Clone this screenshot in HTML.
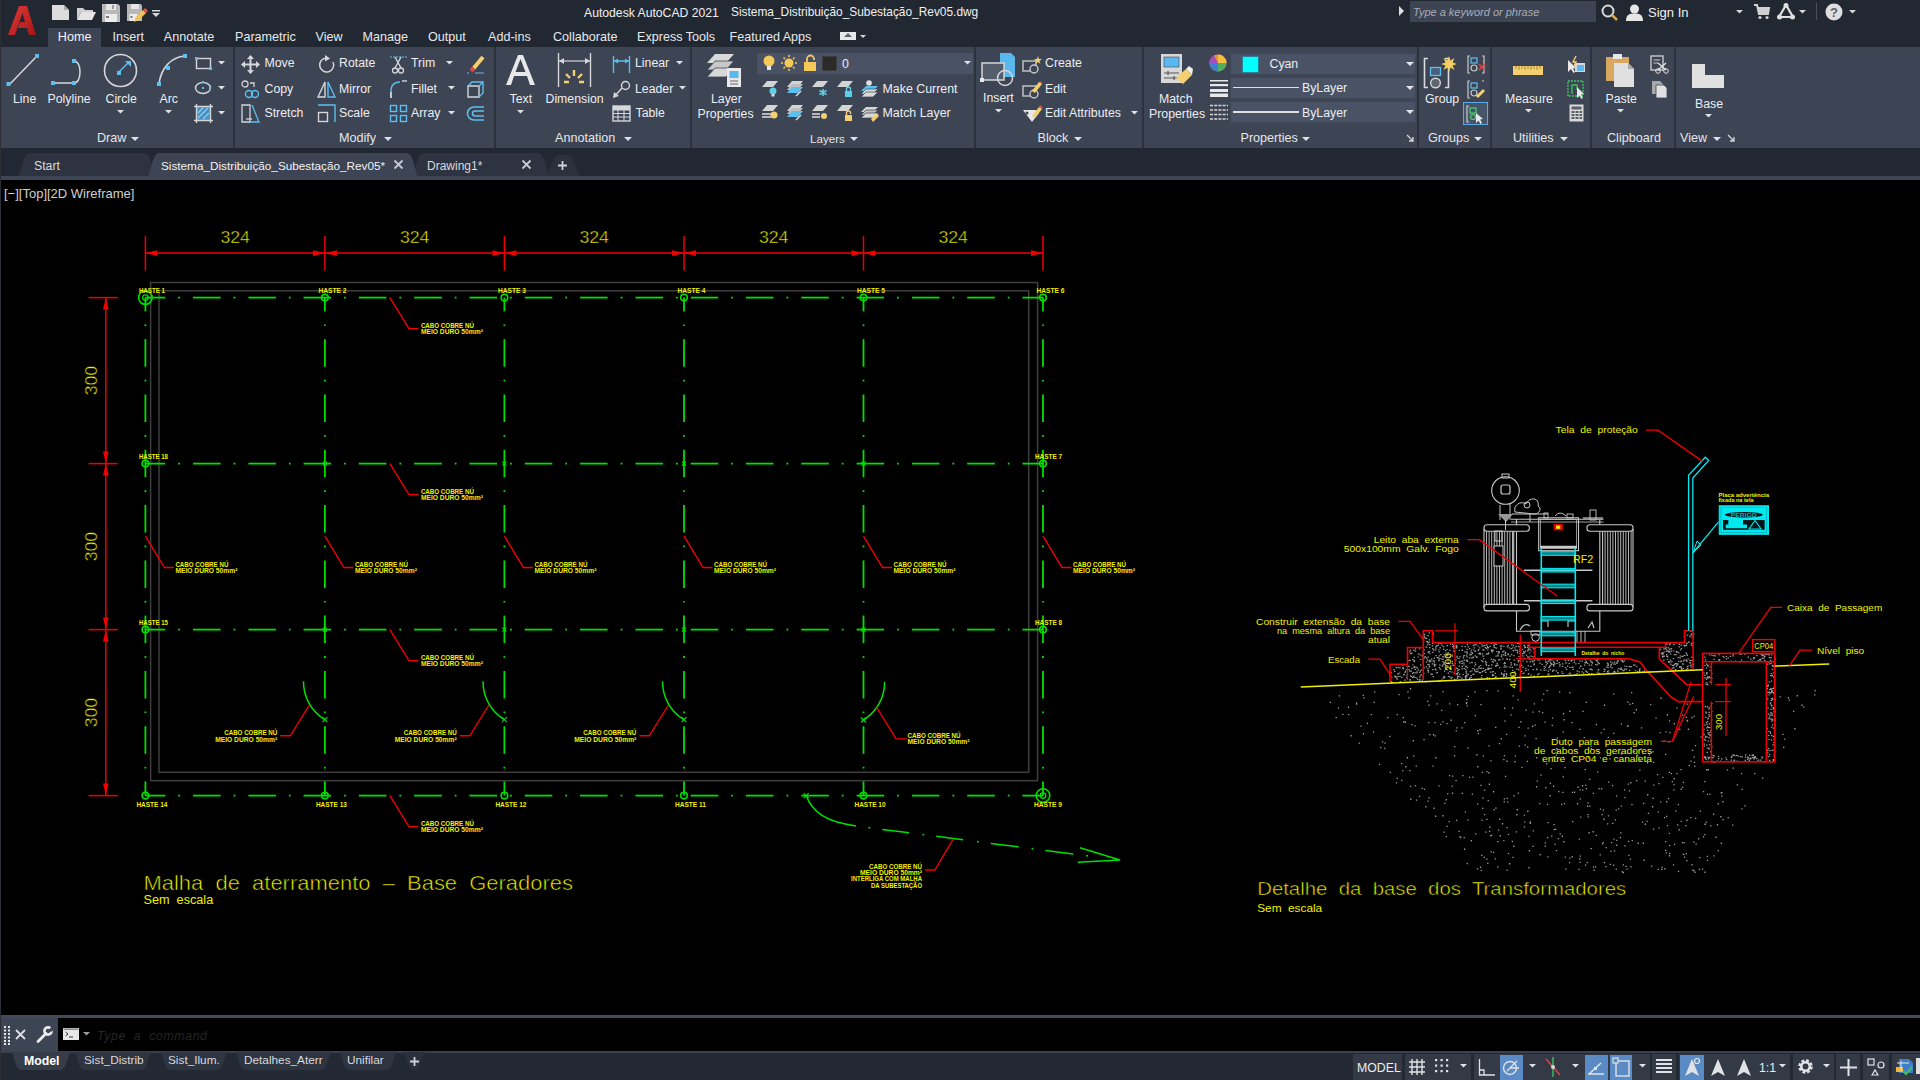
<!DOCTYPE html>
<html><head><meta charset="utf-8">
<style>
*{margin:0;padding:0;box-sizing:border-box}
html,body{width:1920px;height:1080px;overflow:hidden;background:#000;font-family:"Liberation Sans",sans-serif;color:#e8e8e8}
.a{position:absolute}
.t{position:absolute;white-space:nowrap;line-height:1}
svg{overflow:visible}
</style></head><body>
<div class="a" style="left:0;top:0;width:1920px;height:47px;background:#222832"></div>
<svg class="a" style="left:7px;top:5px" width="30" height="32" viewBox="0 0 30 32">
<defs><linearGradient id="lg" x1="0" y1="0" x2="1" y2="1"><stop offset="0" stop-color="#e03a3a"/><stop offset="1" stop-color="#a81414"/></linearGradient></defs>
<path d="M12 1H20L29 30H22L20 23H11L13 17H18L15.5 8L8 30H1Z" fill="url(#lg)"/></svg>
<svg class="a" style="left:50px;top:3px" width="115" height="20" viewBox="0 0 115 20">
<path d="M2 2H14L19 7V17H2Z" fill="#dcdcdc"/><path d="M14 2V7H19" fill="#a8a8a8"/>
<path d="M27 5H33L35 7H43V9H31L27 17Z" fill="#cfcfcf"/><path d="M31 9H46L42 17H27Z" fill="#e4e4e4"/>
<path d="M52 1H68L70 3V19H52Z" fill="#b8b8b8"/><rect x="56" y="1" width="10" height="6" fill="#e6e6e6"/><rect x="62" y="2" width="2" height="4" fill="#9a9a9a"/><rect x="55" y="11" width="12" height="8" fill="#ececec"/><rect x="56" y="13" width="3" height="2" fill="#777"/>
<path d="M77 1H91L92 3V18H77Z" fill="#b8b8b8"/><rect x="81" y="1" width="8" height="5" fill="#e6e6e6"/><rect x="79.5" y="11" width="8" height="7" fill="#ececec"/><rect x="80.5" y="13" width="2" height="2" fill="#777"/><path d="M84 19L86 14L93 7L96 10L89 17Z" fill="#f0c050"/><path d="M93 7L95 5L98 8L96 10Z" fill="#e05050"/>
<path d="M102 7H110V8.5H102Z M102 10H110L106 14Z" fill="#d8d8d8"/></svg>
<div class="t" style="left:584px;top:6.7px;font-size:12.2px;color:#f0f0f0;">Autodesk AutoCAD 2021</div>
<div class="t" style="left:731px;top:6.9px;font-size:11.9px;color:#f0f0f0;">Sistema_Distribuição_Subestação_Rev05.dwg</div>
<svg class="a" style="left:1399px;top:6px" width="6" height="10"><path d="M0 0L5 5L0 10Z" fill="#e0e0e0"/></svg>
<div class="a" style="left:1410px;top:1px;width:186px;height:21px;background:#3d4454"></div>
<div class="t" style="left:1413px;top:6.7px;font-size:11px;color:#a8adb6;font-style:italic">Type a keyword or phrase</div>
<svg class="a" style="left:1600px;top:3px" width="20" height="18"><circle cx="8" cy="8" r="5.5" fill="none" stroke="#d8d8d8" stroke-width="2"/><path d="M12 12L17 17" stroke="#d8a850" stroke-width="2.5"/></svg>
<svg class="a" style="left:1625px;top:3px" width="20" height="18"><circle cx="9.5" cy="6" r="4.5" fill="#e6e6e6"/><path d="M1 18C1 11 5 10.5 9.5 10.5S18 11 18 18Z" fill="#e6e6e6"/></svg>
<div class="t" style="left:1648px;top:6.0px;font-size:13px;color:#f0f0f0;">Sign In</div>
<svg class="a" style="left:1735.5px;top:10px" width="7" height="4.5"><path d="M0 0H7L3.5 3.5Z" fill="#d8d8d8"/></svg>
<svg class="a" style="left:1754px;top:3px" width="16" height="17"><path d="M0 2H3L5 11H14L15 5H4" fill="none" stroke="#d0d0d0" stroke-width="2"/><rect x="5" y="5" width="9" height="5" fill="#d0d0d0"/><circle cx="6" cy="14.5" r="1.6" fill="#d0d0d0"/><circle cx="13" cy="14.5" r="1.6" fill="#d0d0d0"/></svg>
<svg class="a" style="left:1777px;top:2px" width="18" height="18"><path d="M9 3L2 15H16Z" fill="none" stroke="#e0e0e0" stroke-width="2.2"/><circle cx="9" cy="3.5" r="2.5" fill="#e0e0e0"/><circle cx="2.5" cy="15" r="2.5" fill="#e0e0e0"/><circle cx="15.5" cy="15" r="2.5" fill="#e0e0e0"/></svg>
<svg class="a" style="left:1799.0px;top:10px" width="7" height="4.5"><path d="M0 0H7L3.5 3.5Z" fill="#d8d8d8"/></svg>
<div class="a" style="left:1816px;top:3px;width:1px;height:17px;background:#4a505a"></div>
<svg class="a" style="left:1825px;top:3px" width="18" height="18"><circle cx="9" cy="9" r="8.5" fill="#dedede"/><text x="9" y="14" text-anchor="middle" font-family="Liberation Sans" font-weight="bold" font-size="13" fill="#5a5f68">?</text></svg>
<svg class="a" style="left:1849.0px;top:10px" width="7" height="4.5"><path d="M0 0H7L3.5 3.5Z" fill="#d8d8d8"/></svg>
<div class="a" style="left:48px;top:28px;width:53px;height:19px;background:#3d4454"></div>
<div class="t" style="left:57.8px;top:30.5px;font-size:12.6px;color:#f4f4f4;">Home</div>
<div class="t" style="left:112.5px;top:30.5px;font-size:12.6px;color:#e6e8ec;">Insert</div>
<div class="t" style="left:163.75px;top:30.5px;font-size:12.6px;color:#e6e8ec;">Annotate</div>
<div class="t" style="left:235px;top:30.5px;font-size:12.6px;color:#e6e8ec;">Parametric</div>
<div class="t" style="left:315.5px;top:30.5px;font-size:12.6px;color:#e6e8ec;">View</div>
<div class="t" style="left:362.5px;top:30.5px;font-size:12.6px;color:#e6e8ec;">Manage</div>
<div class="t" style="left:428px;top:30.5px;font-size:12.6px;color:#e6e8ec;">Output</div>
<div class="t" style="left:488px;top:30.5px;font-size:12.6px;color:#e6e8ec;">Add-ins</div>
<div class="t" style="left:553px;top:30.5px;font-size:12.6px;color:#e6e8ec;">Collaborate</div>
<div class="t" style="left:637px;top:30.5px;font-size:12.6px;color:#e6e8ec;">Express Tools</div>
<div class="t" style="left:729.5px;top:30.5px;font-size:12.6px;color:#e6e8ec;">Featured Apps</div>
<div class="a" style="left:840px;top:32px;width:16px;height:8px;background:#e8e8e8"></div><svg class="a" style="left:844px;top:33px" width="8" height="5"><path d="M0 4L4 0L8 4Z" fill="#606670"/></svg>
<svg class="a" style="left:860.0px;top:35px" width="6" height="4.0"><path d="M0 0H6L3.0 3.0Z" fill="#d8d8d8"/></svg>
<div class="a" style="left:0;top:47px;width:1920px;height:101px;background:#3d4454"></div>
<div class="a" style="left:233px;top:47px;width:2px;height:101px;background:#2c323d"></div>
<div class="a" style="left:493.5px;top:47px;width:2px;height:101px;background:#2c323d"></div>
<div class="a" style="left:690px;top:47px;width:2px;height:101px;background:#2c323d"></div>
<div class="a" style="left:974px;top:47px;width:2px;height:101px;background:#2c323d"></div>
<div class="a" style="left:1142px;top:47px;width:2px;height:101px;background:#2c323d"></div>
<div class="a" style="left:1417px;top:47px;width:2px;height:101px;background:#2c323d"></div>
<div class="a" style="left:1489.5px;top:47px;width:2px;height:101px;background:#2c323d"></div>
<div class="a" style="left:1590px;top:47px;width:2px;height:101px;background:#2c323d"></div>
<div class="a" style="left:1673.5px;top:47px;width:2px;height:101px;background:#2c323d"></div>
<div class="a" style="left:0;top:148px;width:1920px;height:5px;background:#222833"></div>

<div class="t" style="left:97px;top:131.8px;font-size:12.6px;color:#e4e6ea;">Draw</div>
<svg class="a" style="left:131.0px;top:136.5px" width="8" height="5.0"><path d="M0 0H8L4.0 4.0Z" fill="#dfe1e5"/></svg>
<div class="t" style="left:339px;top:131.8px;font-size:12.6px;color:#e4e6ea;">Modify</div>
<svg class="a" style="left:384.0px;top:136.5px" width="8" height="5.0"><path d="M0 0H8L4.0 4.0Z" fill="#dfe1e5"/></svg>
<div class="t" style="left:555px;top:131.8px;font-size:12.6px;color:#e4e6ea;">Annotation</div>
<svg class="a" style="left:624.0px;top:136.5px" width="8" height="5.0"><path d="M0 0H8L4.0 4.0Z" fill="#dfe1e5"/></svg>
<div class="t" style="left:810px;top:132.7px;font-size:11.6px;color:#e4e6ea;">Layers</div>
<svg class="a" style="left:850.0px;top:136.5px" width="8" height="5.0"><path d="M0 0H8L4.0 4.0Z" fill="#dfe1e5"/></svg>
<div class="t" style="left:1037.5px;top:131.8px;font-size:12.6px;color:#e4e6ea;">Block</div>
<svg class="a" style="left:1074.0px;top:136.5px" width="8" height="5.0"><path d="M0 0H8L4.0 4.0Z" fill="#dfe1e5"/></svg>
<div class="t" style="left:1240.5px;top:131.8px;font-size:12.6px;color:#e4e6ea;">Properties</div>
<svg class="a" style="left:1302.0px;top:136.5px" width="8" height="5.0"><path d="M0 0H8L4.0 4.0Z" fill="#dfe1e5"/></svg>
<div class="t" style="left:1428px;top:131.8px;font-size:12.6px;color:#e4e6ea;">Groups</div>
<svg class="a" style="left:1474.0px;top:136.5px" width="8" height="5.0"><path d="M0 0H8L4.0 4.0Z" fill="#dfe1e5"/></svg>
<div class="t" style="left:1513px;top:131.8px;font-size:12.6px;color:#e4e6ea;">Utilities</div>
<svg class="a" style="left:1560.0px;top:136.5px" width="8" height="5.0"><path d="M0 0H8L4.0 4.0Z" fill="#dfe1e5"/></svg>
<div class="t" style="left:1607px;top:131.8px;font-size:12.6px;color:#e4e6ea;">Clipboard</div>
<div class="t" style="left:1680px;top:131.8px;font-size:12.6px;color:#e4e6ea;">View</div>
<svg class="a" style="left:1713.0px;top:136.5px" width="8" height="5.0"><path d="M0 0H8L4.0 4.0Z" fill="#dfe1e5"/></svg>
<svg class="a" style="left:1406px;top:134px" width="8" height="8" viewBox="0 0 8 8"><path d="M1 1L7 7M7 3V7H3" stroke="#d4d6da" stroke-width="1.3" fill="none"/></svg>
<svg class="a" style="left:1727px;top:134px" width="8" height="8" viewBox="0 0 8 8"><path d="M1 1L7 7M7 3V7H3" stroke="#d4d6da" stroke-width="1.3" fill="none"/></svg>
<svg class="a" style="left:6px;top:53px" width="36" height="35" viewBox="0 0 36 35"><path d="M3 32L31 3" stroke="#d4d6da" stroke-width="1.5"/><rect x="0.5" y="29" width="4" height="4" fill="#5bc0f0"/><rect x="29" y="1" width="4" height="4" fill="#5bc0f0"/></svg>
<div class="t" style="left:13px;top:92.6px;font-size:12.3px;color:#eceef1;">Line</div>
<svg class="a" style="left:50px;top:60px" width="38" height="25" viewBox="0 0 38 25"><path d="M3 23H24M24 1C32 1 32 23 24 23" stroke="#d4d6da" stroke-width="1.5" fill="none"/><rect x="1" y="21" width="4" height="4" fill="#5bc0f0"/><rect x="22" y="21" width="4" height="4" fill="#5bc0f0"/><rect x="22" y="-1" width="4" height="4" fill="#5bc0f0"/></svg>
<div class="t" style="left:47.5px;top:92.6px;font-size:12.3px;color:#eceef1;">Polyline</div>
<svg class="a" style="left:103px;top:53px" width="36" height="35" viewBox="0 0 36 35"><circle cx="17.5" cy="17.5" r="16" stroke="#d4d6da" stroke-width="1.6" fill="none"/><path d="M16 19L26 9" stroke="#5bc0f0" stroke-width="1.5"/><path d="M22 8H28V14Z" fill="#5bc0f0"/><rect x="14" y="18" width="4" height="4" fill="#5bc0f0"/></svg>
<div class="t" style="left:105.5px;top:92.6px;font-size:12.3px;color:#eceef1;">Circle</div>
<svg class="a" style="left:117.0px;top:110px" width="7" height="4.5"><path d="M0 0H7L3.5 3.5Z" fill="#dfe1e5"/></svg>
<svg class="a" style="left:152px;top:53px" width="36" height="35" viewBox="0 0 36 35"><path d="M7 31C9 15 19 4 33 3" stroke="#d4d6da" stroke-width="1.6" fill="none"/><rect x="5" y="29" width="4" height="4" fill="#5bc0f0"/><rect x="14" y="13" width="4" height="4" fill="#5bc0f0"/><rect x="31" y="1" width="4" height="4" fill="#5bc0f0"/></svg>
<div class="t" style="left:159.5px;top:92.6px;font-size:12.3px;color:#eceef1;">Arc</div>
<svg class="a" style="left:164.5px;top:110px" width="7" height="4.5"><path d="M0 0H7L3.5 3.5Z" fill="#dfe1e5"/></svg>
<svg class="a" style="left:194px;top:56px" width="20" height="14" viewBox="0 0 20 14"><rect x="2.5" y="2.5" width="14" height="10" stroke="#d4d6da" stroke-width="1.4" fill="none"/><rect x="1" y="1" width="3" height="3" fill="#5bc0f0"/><rect x="15" y="11" width="3" height="3" fill="#5bc0f0"/></svg>
<svg class="a" style="left:194px;top:81px" width="20" height="14" viewBox="0 0 20 14"><ellipse cx="9" cy="7" rx="7.5" ry="5.5" stroke="#d4d6da" stroke-width="1.4" fill="none"/><rect x="8" y="0" width="2" height="2" fill="#5bc0f0"/><rect x="8" y="6" width="2" height="2" fill="#5bc0f0"/><rect x="15" y="6" width="2" height="2" fill="#5bc0f0"/></svg>
<svg class="a" style="left:194px;top:104px" width="20" height="19" viewBox="0 0 20 19"><rect x="3" y="3" width="13" height="13" fill="#4a8fc0"/><path d="M4 14L14 4M4 9L9 4M9 15L15 9" stroke="#8fd0f5" stroke-width="1.2"/><path d="M0 2.5H19M0 16.5H19M2.5 0V19M16.5 0V19" stroke="#d4d6da" stroke-width="1.4"/></svg>
<svg class="a" style="left:217.5px;top:61px" width="7" height="4.5"><path d="M0 0H7L3.5 3.5Z" fill="#dfe1e5"/></svg>
<svg class="a" style="left:217.5px;top:86px" width="7" height="4.5"><path d="M0 0H7L3.5 3.5Z" fill="#dfe1e5"/></svg>
<svg class="a" style="left:217.5px;top:111px" width="7" height="4.5"><path d="M0 0H7L3.5 3.5Z" fill="#dfe1e5"/></svg>
<svg class="a" style="left:241px;top:55px" width="19" height="19" viewBox="0 0 19 19"><path d="M9.5 1V18M1 9.5H18" stroke="#d4d6da" stroke-width="2"/><path d="M9.5 0L13 4H6ZM9.5 19L13 15H6ZM0 9.5L4 6V13ZM19 9.5L15 6V13Z" fill="#d4d6da"/></svg>
<div class="t" style="left:264.5px;top:57.1px;font-size:12.3px;color:#eceef1;">Move</div>
<svg class="a" style="left:241px;top:80px" width="19" height="19" viewBox="0 0 19 19"><circle cx="4" cy="4" r="3" stroke="#d4d6da" stroke-width="1.3" fill="none"/><path d="M9 3H13V7" stroke="#d4d6da" stroke-width="1.3" fill="none"/><circle cx="8" cy="14" r="3.5" stroke="#5bc0f0" stroke-width="1.4" fill="none"/><circle cx="14" cy="14" r="3.5" stroke="#5bc0f0" stroke-width="1.4" fill="none"/></svg>
<div class="t" style="left:264.5px;top:82.6px;font-size:12.3px;color:#eceef1;">Copy</div>
<svg class="a" style="left:241px;top:104px" width="19" height="19" viewBox="0 0 19 19"><path d="M1 1H9V18H1Z" stroke="#d4d6da" stroke-width="1.3" fill="none"/><path d="M11 1L18 18H9" stroke="#5bc0f0" stroke-width="1.3" fill="none"/><path d="M5 15H11" stroke="#d4d6da" stroke-width="1.3"/></svg>
<div class="t" style="left:264.5px;top:107.1px;font-size:12.3px;color:#eceef1;">Stretch</div>
<svg class="a" style="left:317px;top:55px" width="19" height="19" viewBox="0 0 19 19"><path d="M9.5 3A7 7 0 1 0 16 7" stroke="#d4d6da" stroke-width="1.5" fill="none"/><path d="M8 0L13 3.5L8 6.5Z" fill="#d4d6da"/></svg>
<div class="t" style="left:339px;top:57.1px;font-size:12.3px;color:#eceef1;">Rotate</div>
<svg class="a" style="left:317px;top:80px" width="19" height="19" viewBox="0 0 19 19"><path d="M8 2V17H1Z" stroke="#d4d6da" stroke-width="1.4" fill="none"/><path d="M11 2V17H18Z" stroke="#5bc0f0" stroke-width="1.4" fill="none"/></svg>
<div class="t" style="left:339px;top:82.6px;font-size:12.3px;color:#eceef1;">Mirror</div>
<svg class="a" style="left:317px;top:104px" width="19" height="19" viewBox="0 0 19 19"><path d="M1 1H18V18" stroke="#5bc0f0" stroke-width="1.4" fill="none"/><rect x="1.5" y="8.5" width="9" height="9" stroke="#d4d6da" stroke-width="1.4" fill="none"/></svg>
<div class="t" style="left:339px;top:107.1px;font-size:12.3px;color:#eceef1;">Scale</div>
<svg class="a" style="left:389px;top:55px" width="19" height="19" viewBox="0 0 19 19"><path d="M1 2H18" stroke="#5bc0f0" stroke-width="1" stroke-dasharray="2 1"/><path d="M6 2L12 13M12 2L6 13" stroke="#d4d6da" stroke-width="1.4"/><circle cx="6" cy="15.5" r="2.5" stroke="#d4d6da" stroke-width="1.3" fill="none"/><circle cx="12" cy="15.5" r="2.5" stroke="#d4d6da" stroke-width="1.3" fill="none"/></svg>
<div class="t" style="left:411px;top:57.1px;font-size:12.3px;color:#eceef1;">Trim</div>
<svg class="a" style="left:445.5px;top:61px" width="7" height="4.5"><path d="M0 0H7L3.5 3.5Z" fill="#dfe1e5"/></svg>
<svg class="a" style="left:389px;top:80px" width="19" height="19" viewBox="0 0 19 19"><path d="M2 18V10C2 5 6 2 11 2" stroke="#5bc0f0" stroke-width="1.5" fill="none"/><path d="M13 1H18" stroke="#d4d6da" stroke-width="1.4"/><path d="M2 12V18" stroke="#d4d6da" stroke-width="1.6"/></svg>
<div class="t" style="left:411px;top:82.6px;font-size:12.3px;color:#eceef1;">Fillet</div>
<svg class="a" style="left:447.5px;top:86px" width="7" height="4.5"><path d="M0 0H7L3.5 3.5Z" fill="#dfe1e5"/></svg>
<svg class="a" style="left:389px;top:104px" width="19" height="19" viewBox="0 0 19 19"><rect x="1.5" y="1.5" width="6" height="6" stroke="#5bc0f0" stroke-width="1.4" fill="none"/><rect x="11.5" y="1.5" width="6" height="6" stroke="#5bc0f0" stroke-width="1.4" fill="none"/><rect x="1.5" y="11.5" width="6" height="6" stroke="#5bc0f0" stroke-width="1.4" fill="none"/><rect x="11.5" y="11.5" width="6" height="6" stroke="#5bc0f0" stroke-width="1.4" fill="none"/></svg>
<div class="t" style="left:411px;top:107.1px;font-size:12.3px;color:#eceef1;">Array</div>
<svg class="a" style="left:447.5px;top:111px" width="7" height="4.5"><path d="M0 0H7L3.5 3.5Z" fill="#dfe1e5"/></svg>
<svg class="a" style="left:466px;top:55px" width="19" height="19" viewBox="0 0 19 19"><path d="M7 14L17 2" stroke="#f5d070" stroke-width="4"/><path d="M5 16L8 13" stroke="#e04848" stroke-width="4"/><path d="M1 18H3M9 18H18" stroke="#5bc0f0" stroke-width="1.2"/></svg>
<svg class="a" style="left:466px;top:80px" width="19" height="19" viewBox="0 0 19 19"><path d="M2 6H13V17H2Z" stroke="#d4d6da" stroke-width="1.4" fill="none"/><path d="M2 6L6 2H17V13L13 17M13 6L17 2" stroke="#5bc0f0" stroke-width="1.4" fill="none"/></svg>
<svg class="a" style="left:466px;top:104px" width="19" height="19" viewBox="0 0 19 19"><path d="M18 3H8A6.5 6.5 0 0 0 8 16H18M18 7H9A2.5 2.5 0 0 0 9 12H18" stroke="#5bc0f0" stroke-width="1.5" fill="none"/></svg>
<svg class="a" style="left:505px;top:54px" width="31" height="32" viewBox="0 0 31 32"><path d="M1 31L13 1H18L30 31H25L22 22H9L6 31ZM10.5 18H20.5L15.5 5Z" fill="#e8e8e8"/></svg>
<div class="t" style="left:509.5px;top:92.6px;font-size:12.3px;color:#eceef1;">Text</div>
<svg class="a" style="left:516.5px;top:110px" width="7" height="4.5"><path d="M0 0H7L3.5 3.5Z" fill="#dfe1e5"/></svg>
<svg class="a" style="left:557px;top:53px" width="35" height="35" viewBox="0 0 35 35"><path d="M1.5 0V34M33.5 0V34" stroke="#d4d6da" stroke-width="1.4"/><path d="M2 8H33" stroke="#d4d6da" stroke-width="1.2"/><path d="M2 8L7 5V11ZM33 8L28 5V11Z" fill="#d4d6da"/><path d="M17 17V23M9 21L13 25M25 21L21 25M7 29H12M22 29H27" stroke="#f5d070" stroke-width="2.4"/></svg>
<div class="t" style="left:545.5px;top:92.6px;font-size:12.3px;color:#eceef1;">Dimension</div>
<svg class="a" style="left:612px;top:55px" width="19" height="19" viewBox="0 0 19 19"><path d="M1.5 1V18M17.5 1V18M2 6H17" stroke="#5bc0f0" stroke-width="1.4"/><path d="M2 6L6 3.5V8.5ZM17 6L13 3.5V8.5Z" fill="#5bc0f0"/></svg>
<div class="t" style="left:635px;top:57.1px;font-size:12.3px;color:#eceef1;">Linear</div>
<svg class="a" style="left:675.5px;top:61px" width="7" height="4.5"><path d="M0 0H7L3.5 3.5Z" fill="#dfe1e5"/></svg>
<svg class="a" style="left:612px;top:80px" width="19" height="19" viewBox="0 0 19 19"><circle cx="13.5" cy="5.5" r="4" stroke="#d4d6da" stroke-width="1.4" fill="none"/><path d="M10 8L2 17" stroke="#d4d6da" stroke-width="1.4"/><path d="M1 18L2 12L7 16Z" fill="#d4d6da"/></svg>
<div class="t" style="left:635px;top:82.6px;font-size:12.3px;color:#eceef1;">Leader</div>
<svg class="a" style="left:678.5px;top:86px" width="7" height="4.5"><path d="M0 0H7L3.5 3.5Z" fill="#dfe1e5"/></svg>
<svg class="a" style="left:612px;top:105px" width="19" height="17" viewBox="0 0 19 17"><rect x="1" y="1" width="17" height="15" stroke="#d4d6da" stroke-width="1.4" fill="none"/><path d="M1 5H18M1 8.5H18M1 12H18M6 5V16M12 5V16" stroke="#d4d6da" stroke-width="1.1"/><rect x="1" y="1" width="17" height="4" fill="#d4d6da"/></svg>
<div class="t" style="left:635.5px;top:107.1px;font-size:12.3px;color:#eceef1;">Table</div>
<svg class="a" style="left:706px;top:53px" width="36" height="35" viewBox="0 0 36 35"><path d="M1 10L9 1H28L20 10Z" fill="#dadada"/><path d="M1 17L9 8H28L20 17Z" fill="#c8c8c8" stroke="#3d4454" stroke-width="0.8"/><path d="M1 24L9 15H28L20 24Z" fill="#d8d8d8" stroke="#3d4454" stroke-width="0.8"/><rect x="21" y="15" width="14" height="19" fill="#e8e8e8"/><rect x="23.5" y="18" width="9" height="7" fill="#5bb8ef"/><path d="M24 28H32M24 31H32" stroke="#666" stroke-width="1"/></svg>
<div class="t" style="left:711px;top:92.6px;font-size:12.3px;color:#eceef1;">Layer</div>
<div class="t" style="left:697.5px;top:108.3px;font-size:12.3px;color:#eceef1;">Properties</div>
<div class="a" style="left:757px;top:53px;width:216px;height:21px;background:#4a5365"></div>
<svg class="a" style="left:963.5px;top:61px" width="7" height="4.5"><path d="M0 0H7L3.5 3.5Z" fill="#dfe1e5"/></svg>
<svg class="a" style="left:761px;top:54px" width="80" height="18" viewBox="0 0 80 18"><circle cx="8" cy="7" r="5.5" fill="#f5c85a"/><rect x="6" y="12" width="4" height="4" fill="#e8e8e8"/><circle cx="28" cy="9" r="4.5" fill="#f5c85a"/><path d="M28 1V3M28 15V17M20 9H22M34 9H36M22.5 3.5L24 5M32 13L33.5 14.5M22.5 14.5L24 13M32 5L33.5 3.5" stroke="#f5c85a" stroke-width="1.5"/><rect x="43" y="8" width="12" height="9" fill="#f5c85a"/><path d="M46 8V5A3.5 3.5 0 0 1 53 5V6" stroke="#f5c85a" stroke-width="1.8" fill="none"/><rect x="61" y="2" width="15" height="15" fill="#2a2a2a" stroke="#555" stroke-width="0.8"/></svg>
<div class="t" style="left:842px;top:57.6px;font-size:12.3px;color:#eceef1;">0</div>
<svg class="a" style="left:761px;top:80px" width="18" height="17" viewBox="0 0 18 17"><path d="M1 7L6 1H17L12 7Z" fill="#d4d4d4"/><circle cx="12" cy="11" r="3.5" fill="#5bd0e8"/><rect x="10.5" y="14" width="3" height="2.5" fill="#ddd"/></svg>
<svg class="a" style="left:761px;top:104px" width="18" height="17" viewBox="0 0 18 17"><path d="M1 7L6 1H17L12 7Z" fill="#d4d4d4"/><path d="M1 10H10M1 13H10" stroke="#ddd" stroke-width="1.5"/><circle cx="13" cy="11" r="3.5" fill="#f5d070"/></svg>
<svg class="a" style="left:786px;top:80px" width="18" height="17" viewBox="0 0 18 17"><path d="M1 7L6 1H17L12 7Z" fill="#d4d4d4"/><path d="M1 10L6 4H17L12 10Z" fill="#bfbfbf"/><path d="M1 13L6 7H17L12 13Z" fill="#5bc0f0"/><path d="M10 16L15 11" stroke="#ddd" stroke-width="1.4"/></svg>
<svg class="a" style="left:786px;top:104px" width="18" height="17" viewBox="0 0 18 17"><path d="M1 7L6 1H17L12 7Z" fill="#d4d4d4"/><path d="M1 10L6 4H17L12 10Z" fill="#bfbfbf"/><path d="M1 13L6 7H17L12 13Z" fill="#5bc0f0"/><path d="M10 16L15 11" stroke="#ddd" stroke-width="1.4"/></svg>
<svg class="a" style="left:811px;top:80px" width="18" height="17" viewBox="0 0 18 17"><path d="M1 7L6 1H17L12 7Z" fill="#d4d4d4"/><path d="M12 9V16M8.5 10.5L15.5 14.5M8.5 14.5L15.5 10.5" stroke="#5bd0e8" stroke-width="1.6"/></svg>
<svg class="a" style="left:811px;top:104px" width="18" height="17" viewBox="0 0 18 17"><path d="M1 7L6 1H17L12 7Z" fill="#d4d4d4"/><path d="M1 10H9M1 13H9" stroke="#ddd" stroke-width="1.5"/><circle cx="13" cy="12" r="3" fill="#f5d070"/></svg>
<svg class="a" style="left:836px;top:80px" width="18" height="17" viewBox="0 0 18 17"><path d="M1 7L6 1H17L12 7Z" fill="#d4d4d4"/><rect x="9" y="11" width="7" height="6" fill="#5bd0e8"/><path d="M10.5 11V9A2 2 0 0 1 14.5 9V11" stroke="#5bd0e8" stroke-width="1.4" fill="none"/></svg>
<svg class="a" style="left:836px;top:104px" width="18" height="17" viewBox="0 0 18 17"><path d="M1 7L6 1H17L12 7Z" fill="#d4d4d4"/><rect x="9" y="11" width="7" height="6" fill="#f5d070"/><path d="M10.5 11V9A2 2 0 0 1 14.5 9V10" stroke="#f5d070" stroke-width="1.4" fill="none"/></svg>
<svg class="a" style="left:860px;top:80px" width="19" height="19" viewBox="0 0 19 19"><circle cx="9" cy="3" r="2.8" fill="#e0e0e0"/><path d="M1 11L6 6H18L13 11Z" fill="#5bc0f0"/><path d="M1 14L6 9H18L13 14Z" fill="#d8d8d8" stroke="#3d4454" stroke-width="0.7"/><path d="M1 17L6 12H18L13 17Z" fill="#d8d8d8" stroke="#3d4454" stroke-width="0.7"/></svg>
<div class="t" style="left:882.5px;top:82.5px;font-size:12.4px;color:#eceef1;">Make Current</div>
<svg class="a" style="left:860px;top:104px" width="19" height="19" viewBox="0 0 19 19"><path d="M1 8L6 3H18L13 8Z" fill="#d8d8d8"/><path d="M1 11L6 6H18L13 11Z" fill="#c0c0c0" stroke="#3d4454" stroke-width="0.7"/><path d="M1 14L6 9H18L13 14Z" fill="#d8d8d8" stroke="#3d4454" stroke-width="0.7"/><path d="M11 15L17 9L19 12L13 18Z" fill="#f5d070"/></svg>
<div class="t" style="left:882.5px;top:107.0px;font-size:12.4px;color:#eceef1;">Match Layer</div>
<svg class="a" style="left:980px;top:52px" width="36" height="35" viewBox="0 0 36 35"><path d="M20 1H31L35 5V25H20Z" fill="#5bb8ef"/><rect x="2" y="11" width="22" height="17" fill="#565d6a" stroke="#d4d6da" stroke-width="1.5"/><circle cx="25" cy="26" r="7.5" fill="none" stroke="#d4d6da" stroke-width="1.5"/><rect x="0" y="26" width="4" height="4" fill="#e8e8e8"/></svg>
<div class="t" style="left:983px;top:91.6px;font-size:12.3px;color:#eceef1;">Insert</div>
<svg class="a" style="left:994.5px;top:109px" width="7" height="4.5"><path d="M0 0H7L3.5 3.5Z" fill="#dfe1e5"/></svg>
<svg class="a" style="left:1022px;top:55px" width="20" height="19" viewBox="0 0 20 19"><rect x="1" y="6" width="13" height="10" stroke="#c8c8c8" stroke-width="1.4" fill="none"/><circle cx="12" cy="14" r="4" stroke="#c8c8c8" stroke-width="1.4" fill="#3d4454"/><path d="M16 1L17 4L20 4L17.5 6L18.5 9L16 7L13.5 9L14.5 6L12 4L15 4Z" fill="#f5d070"/></svg>
<div class="t" style="left:1045px;top:57.1px;font-size:12.3px;color:#eceef1;">Create</div>
<svg class="a" style="left:1022px;top:80px" width="20" height="19" viewBox="0 0 20 19"><rect x="1" y="6" width="13" height="10" stroke="#c8c8c8" stroke-width="1.4" fill="none"/><circle cx="12" cy="14" r="4" stroke="#c8c8c8" stroke-width="1.4" fill="#3d4454"/><path d="M10 11L17 2L20 4L13 13Z" fill="#f5d070"/><path d="M17 2L18 1L20.5 3L20 4Z" fill="#e05050"/></svg>
<div class="t" style="left:1045px;top:82.6px;font-size:12.3px;color:#eceef1;">Edit</div>
<svg class="a" style="left:1022px;top:104px" width="20" height="19" viewBox="0 0 20 19"><path d="M1 6H14L17 9L10 18Z" fill="#e8e8e8"/><circle cx="5" cy="9" r="1.5" fill="#3d4454"/><path d="M10 12L17 3L20 5L13 14Z" fill="#f5d070"/><path d="M17 3L18 1L20.5 3L20 5Z" fill="#e05050"/></svg>
<div class="t" style="left:1045px;top:107.1px;font-size:12.3px;color:#eceef1;">Edit Attributes</div>
<svg class="a" style="left:1130.5px;top:111px" width="7" height="4.5"><path d="M0 0H7L3.5 3.5Z" fill="#dfe1e5"/></svg>
<svg class="a" style="left:1160px;top:53px" width="34" height="35" viewBox="0 0 34 35"><rect x="1" y="1" width="21" height="29" fill="#d8d8d8"/><rect x="4" y="4" width="15" height="10" fill="#5bb8ef" stroke="#3d4454" stroke-width="0.6"/><path d="M4 20H19M4 25H19M8 18V22M14 23V27" stroke="#555" stroke-width="1.2"/><path d="M16 25L26 16L32 22L23 31Z" fill="#f5d070"/><path d="M26 16L29 13L33 16L32 22Z" fill="#f0f0f0"/></svg>
<div class="t" style="left:1159px;top:92.6px;font-size:12.3px;color:#eceef1;">Match</div>
<div class="t" style="left:1149px;top:107.6px;font-size:12.3px;color:#eceef1;">Properties</div>
<svg class="a" style="left:1209px;top:54px" width="19" height="18" viewBox="0 0 19 18"><circle cx="9" cy="9" r="8.5" fill="#e84"/><path d="M9 9L9 0.5A8.5 8.5 0 0 1 17.5 9Z" fill="#f5c040"/><path d="M9 9L17.5 9A8.5 8.5 0 0 1 9 17.5Z" fill="#50b060"/><path d="M9 9L9 17.5A8.5 8.5 0 0 1 0.5 9Z" fill="#4080d0"/><path d="M9 9L0.5 9A8.5 8.5 0 0 1 5 1.5Z" fill="#a050c0"/></svg>
<svg class="a" style="left:1210px;top:79px" width="18" height="18" viewBox="0 0 18 18"><rect x="0" y="1" width="18" height="1.5" fill="#e8e8e8"/><rect x="0" y="5" width="18" height="2.2" fill="#e8e8e8"/><rect x="0" y="10" width="18" height="3" fill="#e8e8e8"/><rect x="0" y="14.5" width="18" height="3.5" fill="#e8e8e8"/></svg>
<svg class="a" style="left:1210px;top:104px" width="18" height="16" viewBox="0 0 18 16"><path d="M0 1.5H18M0 6H18M0 10.5H18M0 15H18" stroke="#d8d8d8" stroke-width="1.4" stroke-dasharray="3 1.2"/></svg>
<div class="a" style="left:1229.5px;top:52.5px;width:186px;height:22px;background:#4a5365;border:1px solid #3f4757"></div>
<svg class="a" style="left:1406.0px;top:61.5px" width="8" height="5.0"><path d="M0 0H8L4.0 4.0Z" fill="#e4e6ea"/></svg>
<div class="a" style="left:1229.5px;top:77px;width:186px;height:22px;background:#4a5365;border:1px solid #3f4757"></div>
<svg class="a" style="left:1406.0px;top:86px" width="8" height="5.0"><path d="M0 0H8L4.0 4.0Z" fill="#e4e6ea"/></svg>
<div class="a" style="left:1229.5px;top:101px;width:186px;height:22px;background:#4a5365;border:1px solid #3f4757"></div>
<svg class="a" style="left:1406.0px;top:110px" width="8" height="5.0"><path d="M0 0H8L4.0 4.0Z" fill="#e4e6ea"/></svg>
<div class="a" style="left:1242px;top:55.5px;width:17px;height:17px;background:#00ffff;border:1px solid #2e8090"></div>
<div class="t" style="left:1269.5px;top:57.6px;font-size:12.3px;color:#eceef1;">Cyan</div>
<div class="a" style="left:1233px;top:86.5px;width:66px;height:1.5px;background:#e0e0e0"></div>
<div class="t" style="left:1302px;top:82.1px;font-size:12.3px;color:#eceef1;">ByLayer</div>
<div class="a" style="left:1233px;top:111px;width:66px;height:1.5px;background:#e0e0e0"></div>
<div class="t" style="left:1302px;top:106.6px;font-size:12.3px;color:#eceef1;">ByLayer</div>
<svg class="a" style="left:1421px;top:55px" width="36" height="35" viewBox="0 0 36 35"><path d="M7 3.5H3.5V32.5H7M24 3.5H27.5V32.5H24" stroke="#d8dade" stroke-width="1.6" fill="none"/><rect x="9.5" y="12.5" width="10" height="8" fill="#4a5f7c" stroke="#5bc0f0" stroke-width="1.3"/><circle cx="14.5" cy="28" r="4.8" fill="#60656e" stroke="#d4d6da" stroke-width="1.4"/><path d="M28 1L29.5 5.5L33.5 3L31.5 7.5L36 9L31.5 10.5L33.5 15L29.5 12.5L28 17L26.5 12.5L22.5 15L24.5 10.5L20 9L24.5 7.5L22.5 3L26.5 5.5Z" fill="#f5d060"/></svg>
<div class="t" style="left:1425px;top:92.6px;font-size:12.3px;color:#eceef1;">Group</div>
<svg class="a" style="left:1467px;top:55px" width="19" height="19" viewBox="0 0 19 19"><path d="M3 1H1V18H3M15 1H17V18H15" stroke="#c8c8c8" stroke-width="1.2" fill="none"/><rect x="4" y="3" width="6" height="5" stroke="#5bc0f0" stroke-width="1.2" fill="none"/><circle cx="7" cy="13" r="3" stroke="#c8c8c8" stroke-width="1.2" fill="none"/><path d="M12 9L18 15M18 9L12 15" stroke="#e84040" stroke-width="1.6"/></svg>
<svg class="a" style="left:1467px;top:80px" width="19" height="19" viewBox="0 0 19 19"><path d="M3 1H1V18H3M15 1H17" stroke="#c8c8c8" stroke-width="1.2" fill="none"/><rect x="4" y="3" width="6" height="5" stroke="#5bc0f0" stroke-width="1.2" fill="none"/><circle cx="7" cy="13" r="3" stroke="#c8c8c8" stroke-width="1.2" fill="none"/><path d="M10 17L17 10" stroke="#f5d070" stroke-width="3"/></svg>
<div class="a" style="left:1463px;top:102px;width:25px;height:23px;border:1px solid #5aa8e8;background:#46566a"></div>
<svg class="a" style="left:1466px;top:105px" width="19" height="19" viewBox="0 0 19 19"><path d="M3 1H1V17H3" stroke="#c8c8c8" stroke-width="1.2" fill="none"/><rect x="4" y="3" width="6" height="5" stroke="#50d070" stroke-width="1.2" fill="none"/><circle cx="7" cy="12" r="2.5" stroke="#50d070" stroke-width="1.2" fill="none"/><path d="M10 8L10 18L12.5 15.5L14.5 19L16 18L14 14.5L17 14Z" fill="#e8e8e8"/></svg>
<svg class="a" style="left:1513px;top:66px" width="30" height="9" viewBox="0 0 30 9"><rect x="0" y="0" width="30" height="9" fill="#f5d070"/><path d="M3 0V3M6 0V4M9 0V3M12 0V4M15 0V3M18 0V4M21 0V3M24 0V4M27 0V3" stroke="#a07820" stroke-width="0.8"/></svg>
<div class="t" style="left:1505px;top:92.6px;font-size:12.3px;color:#eceef1;">Measure</div>
<svg class="a" style="left:1524.5px;top:109px" width="7" height="4.5"><path d="M0 0H7L3.5 3.5Z" fill="#dfe1e5"/></svg>
<svg class="a" style="left:1567px;top:55px" width="19" height="19" viewBox="0 0 19 19"><path d="M1 5L1 17L4 14L6.5 18L8 17L6 13.5L9 13Z" fill="#e8e8e8"/><path d="M9 1L6 7H9L7 11" stroke="#f5d070" stroke-width="1.4" fill="none"/><rect x="8" y="8" width="10" height="9" fill="#d8d8d8"/><rect x="10" y="10" width="7" height="6" fill="#5bb8ef"/></svg>
<svg class="a" style="left:1567px;top:80px" width="19" height="19" viewBox="0 0 19 19"><rect x="1" y="1" width="15" height="15" stroke="#40c060" stroke-width="1.4" stroke-dasharray="2 1" fill="none"/><path d="M5 14V5H10V10" stroke="#40c060" stroke-width="1.4" fill="none"/><path d="M10 7V18L12.5 15.5L14.5 19L16 18L14 14.5L17 14Z" fill="#e8e8e8"/></svg>
<svg class="a" style="left:1569px;top:104px" width="15" height="18" viewBox="0 0 15 18"><rect x="0.5" y="0.5" width="14" height="17" fill="#d8d8d8"/><rect x="2.5" y="2.5" width="10" height="3" fill="#5a606a"/><path d="M2.5 8H5.5M6.5 8H9.5M10.5 8H13M2.5 11H5.5M6.5 11H9.5M10.5 11H13M2.5 14H5.5M6.5 14H9.5M10.5 14H13" stroke="#5a606a" stroke-width="2"/></svg>
<svg class="a" style="left:1605px;top:53px" width="30" height="35" viewBox="0 0 30 35"><path d="M1 4H24V28H1Z" fill="#d8a860"/><rect x="8" y="1" width="9" height="5" fill="#e8e8e8"/><path d="M9 10H23L29 16V34H9Z" fill="#e0e0e0"/><path d="M23 10V16H29" fill="#a8a8a8"/></svg>
<div class="t" style="left:1605.5px;top:92.6px;font-size:12.3px;color:#eceef1;">Paste</div>
<svg class="a" style="left:1617.0px;top:109px" width="7" height="4.5"><path d="M0 0H7L3.5 3.5Z" fill="#dfe1e5"/></svg>
<svg class="a" style="left:1650px;top:55px" width="19" height="19" viewBox="0 0 19 19"><rect x="1" y="1" width="12" height="14" fill="none" stroke="#c8c8c8" stroke-width="1.4"/><path d="M3.5 5H10M3.5 8H8" stroke="#c8c8c8"/><path d="M8 8L16 15M16 8L8 15" stroke="#e0e0e0" stroke-width="1.4"/><circle cx="8" cy="16" r="2.3" stroke="#e0e0e0" fill="none"/><circle cx="16" cy="16" r="2.3" stroke="#e0e0e0" fill="none"/></svg>
<svg class="a" style="left:1651px;top:80px" width="17" height="19" viewBox="0 0 17 19"><path d="M1 1H9L12 4V14H1Z" fill="#a8a8a8"/><path d="M5 5H13L16 8V18H5Z" fill="#e0e0e0" stroke="#3d4454" stroke-width="0.8"/></svg>
<svg class="a" style="left:1691px;top:63px" width="34" height="26" viewBox="0 0 34 26"><path d="M1 1H14V12H33V25H1Z" fill="#e0e0e0"/></svg>
<div class="t" style="left:1695px;top:97.6px;font-size:12.3px;color:#eceef1;">Base</div>
<svg class="a" style="left:1704.5px;top:114px" width="7" height="4.5"><path d="M0 0H7L3.5 3.5Z" fill="#dfe1e5"/></svg>

<div class="a" style="left:0;top:153px;width:1920px;height:27px;background:#222833"></div>
<div class="a" style="left:0;top:176px;width:1920px;height:4px;background:#3d4454"></div>
<svg class="a" style="left:16px;top:153px" width="142" height="23" viewBox="0 0 142 23"><path d="M0 23C6 23 6 0 14 0H128C136 0 136 23 142 23Z" fill="#2d3340"/></svg>
<svg class="a" style="left:410px;top:153px" width="142" height="23" viewBox="0 0 142 23"><path d="M0 23C6 23 6 0 14 0H128C136 0 136 23 142 23Z" fill="#2d3340"/></svg>
<svg class="a" style="left:545px;top:155px" width="37" height="21" viewBox="0 0 37 21"><path d="M0 21C6 21 6 0 14 0H23C31 0 31 21 37 21Z" fill="#2a303c"/></svg>
<svg class="a" style="left:145px;top:153px" width="276" height="27" viewBox="0 0 276 27"><path d="M0 27C6 27 6 0 14 0H262C270 0 270 27 276 27Z" fill="#3d4454"/></svg>
<div class="t" style="left:34px;top:159.6px;font-size:12.3px;color:#d8dadf;">Start</div>
<div class="t" style="left:161px;top:160.1px;font-size:11.75px;color:#f2f2f2;">Sistema_Distribuição_Subestação_Rev05*</div>
<svg class="a" style="left:393px;top:159px" width="11" height="11" viewBox="0 0 11 11"><path d="M1.5 1.5L9.5 9.5M9.5 1.5L1.5 9.5" stroke="#c8cacf" stroke-width="1.8"/></svg>
<div class="t" style="left:427px;top:159.8px;font-size:12.0px;color:#d8dadf;">Drawing1*</div>
<svg class="a" style="left:521px;top:159px" width="11" height="11" viewBox="0 0 11 11"><path d="M1.5 1.5L9.5 9.5M9.5 1.5L1.5 9.5" stroke="#c8cacf" stroke-width="1.8"/></svg>
<svg class="a" style="left:557px;top:160px" width="11" height="11" viewBox="0 0 11 11"><path d="M5.5 1V10M1 5.5H10" stroke="#d0d2d6" stroke-width="1.8"/></svg>
<div class="t" style="left:4px;top:187.2px;font-size:13px;color:#d0d0d0;">[−][Top][2D Wireframe]</div>
<div class="a" style="left:0;top:1015px;width:1920px;height:3px;background:#434b59"></div>
<div class="a" style="left:0;top:1018px;width:58px;height:33px;background:#3d4454"></div>
<div class="a" style="left:58px;top:1018px;width:1862px;height:33px;background:#000"></div>
<svg class="a" style="left:3px;top:1025px" width="8" height="20" viewBox="0 0 8 20"><rect x="1" y="1" width="2" height="2" fill="#e8e8e8"/><rect x="1" y="4.5" width="2" height="2" fill="#e8e8e8"/><rect x="1" y="8" width="2" height="2" fill="#e8e8e8"/><rect x="1" y="11.5" width="2" height="2" fill="#e8e8e8"/><rect x="1" y="15" width="2" height="2" fill="#e8e8e8"/><rect x="1" y="18" width="2" height="2" fill="#e8e8e8"/><rect x="5" y="1" width="2" height="2" fill="#e8e8e8"/><rect x="5" y="4.5" width="2" height="2" fill="#e8e8e8"/><rect x="5" y="8" width="2" height="2" fill="#e8e8e8"/><rect x="5" y="11.5" width="2" height="2" fill="#e8e8e8"/><rect x="5" y="15" width="2" height="2" fill="#e8e8e8"/><rect x="5" y="18" width="2" height="2" fill="#e8e8e8"/></svg>
<svg class="a" style="left:15px;top:1029px" width="11" height="11" viewBox="0 0 11 11"><path d="M1 1L10 10M10 1L1 10" stroke="#e0e0e0" stroke-width="1.8"/></svg>
<svg class="a" style="left:35px;top:1025px" width="19" height="19" viewBox="0 0 19 19"><path d="M3 16.5L11 8.5" stroke="#ececec" stroke-width="2.8" stroke-linecap="round"/><circle cx="13" cy="6" r="3.6" fill="none" stroke="#ececec" stroke-width="2.6"/><path d="M13.5 5.5L17 1L20 4L16 7Z" fill="#3d4454"/></svg>
<svg class="a" style="left:63px;top:1028px" width="16" height="12" viewBox="0 0 16 12"><rect x="0" y="0" width="16" height="12" fill="#e8e8e8"/><rect x="0.5" y="0.5" width="15" height="1.5" fill="#888"/><path d="M2.5 4L5 6L2.5 8M6 9H10" stroke="#333" stroke-width="1" fill="none"/></svg>
<svg class="a" style="left:82.5px;top:1032px" width="7" height="4.5"><path d="M0 0H7L3.5 3.5Z" fill="#9a9a9a"/></svg>
<div class="t" style="left:97px;top:1029.6px;font-size:12.3px;color:#262626;font-style:italic;letter-spacing:0.6px">Type&nbsp; a&nbsp; command</div>
<div class="a" style="left:0;top:1051px;width:1920px;height:29px;background:#232933"></div>
<div class="a" style="left:0;top:1051px;width:1920px;height:2px;background:#3a414d"></div>
<svg class="a" style="left:73px;top:1052px" width="80" height="19" viewBox="0 0 80 19"><path d="M0 0H80C75 0 76 18 68 18H12C4 18 5 0 0 0Z" fill="#2e3440"/></svg>
<svg class="a" style="left:159px;top:1052px" width="70" height="19" viewBox="0 0 70 19"><path d="M0 0H70C65 0 66 18 58 18H12C4 18 5 0 0 0Z" fill="#2e3440"/></svg>
<svg class="a" style="left:234px;top:1052px" width="99" height="19" viewBox="0 0 99 19"><path d="M0 0H99C94 0 95 18 87 18H12C4 18 5 0 0 0Z" fill="#2e3440"/></svg>
<svg class="a" style="left:338px;top:1052px" width="60" height="19" viewBox="0 0 60 19"><path d="M0 0H60C55 0 56 18 48 18H12C4 18 5 0 0 0Z" fill="#2e3440"/></svg>
<svg class="a" style="left:402px;top:1052px" width="24" height="19" viewBox="0 0 24 19"><path d="M0 0H24C19 0 20 18 12 18H12C4 18 5 0 0 0Z" fill="#2b313c"/></svg>
<svg class="a" style="left:10px;top:1052px" width="62" height="19" viewBox="0 0 62 19"><path d="M0 0H62C57 0 58 18 50 18H12C4 18 5 0 0 0Z" fill="#363c49"/></svg>
<div class="t" style="left:24px;top:1054.6px;font-size:12.3px;color:#ffffff;font-weight:bold">Model</div>
<div class="t" style="left:84px;top:1055.0px;font-size:11.8px;color:#d8dadf;">Sist_Distrib</div>
<div class="t" style="left:168px;top:1055.0px;font-size:11.8px;color:#d8dadf;">Sist_Ilum.</div>
<div class="t" style="left:244px;top:1055.0px;font-size:11.8px;color:#d8dadf;">Detalhes_Aterr</div>
<div class="t" style="left:347px;top:1055.0px;font-size:11.8px;color:#d8dadf;">Unifilar</div>
<svg class="a" style="left:409px;top:1056px" width="11" height="11" viewBox="0 0 11 11"><path d="M5.5 1V10M1 5.5H10" stroke="#d0d2d6" stroke-width="1.8"/></svg>
<div class="a" style="left:1352.5px;top:1054px;width:49.5px;height:26px;background:#333a46"></div>
<div class="a" style="left:1405px;top:1054px;width:66px;height:26px;background:#333a46"></div>
<div class="a" style="left:1474px;top:1054px;width:176px;height:26px;background:#333a46"></div>
<div class="a" style="left:1652px;top:1054px;width:24px;height:26px;background:#333a46"></div>
<div class="a" style="left:1679px;top:1054px;width:111px;height:26px;background:#333a46"></div>
<div class="a" style="left:1792.6px;top:1054px;width:41.40000000000009px;height:26px;background:#333a46"></div>
<div class="a" style="left:1836px;top:1054px;width:24px;height:26px;background:#333a46"></div>
<div class="a" style="left:1863px;top:1054px;width:26px;height:26px;background:#333a46"></div>
<div class="a" style="left:1892px;top:1054px;width:28px;height:26px;background:#333a46"></div>
<div class="t" style="left:1357px;top:1061.6px;font-size:12.3px;color:#eceef1;">MODEL</div>
<svg class="a" style="left:1408px;top:1058px" width="18" height="18" viewBox="0 0 18 18"><path d="M4 1V17M9 1V17M14 1V17M1 4H17M1 9H17M1 14H17" stroke="#e0e2e6" stroke-width="1.4"/></svg>
<svg class="a" style="left:1434px;top:1058px" width="16" height="16" viewBox="0 0 16 16"><rect x="1" y="1" width="2.2" height="2.2" fill="#e0e2e6"/><rect x="1" y="6.5" width="2.2" height="2.2" fill="#e0e2e6"/><rect x="1" y="12" width="2.2" height="2.2" fill="#e0e2e6"/><rect x="6.5" y="1" width="2.2" height="2.2" fill="#e0e2e6"/><rect x="6.5" y="6.5" width="2.2" height="2.2" fill="#e0e2e6"/><rect x="6.5" y="12" width="2.2" height="2.2" fill="#e0e2e6"/><rect x="12" y="1" width="2.2" height="2.2" fill="#e0e2e6"/><rect x="12" y="6.5" width="2.2" height="2.2" fill="#e0e2e6"/><rect x="12" y="12" width="2.2" height="2.2" fill="#e0e2e6"/></svg>
<svg class="a" style="left:1459.5px;top:1064px" width="7" height="4.5"><path d="M0 0H7L3.5 3.5Z" fill="#e0e2e6"/></svg>
<svg class="a" style="left:1478px;top:1058px" width="18" height="18" viewBox="0 0 18 18"><path d="M1.5 1V17H17M1.5 12H6V17" stroke="#e0e2e6" stroke-width="1.3" fill="none"/></svg>
<div class="a" style="left:1500px;top:1055px;width:23px;height:25px;background:#5a8bc4"></div>
<div class="a" style="left:1584.5px;top:1055px;width:23.0px;height:25px;background:#5a8bc4"></div>
<div class="a" style="left:1609.5px;top:1055px;width:22.5px;height:25px;background:#5a8bc4"></div>
<div class="a" style="left:1680px;top:1055px;width:23.59999999999991px;height:25px;background:#5a8bc4"></div>
<svg class="a" style="left:1502px;top:1058px" width="18" height="18" viewBox="0 0 18 18"><circle cx="8" cy="10" r="6.5" stroke="#e0e2e6" stroke-width="1.4" fill="none"/><path d="M5 13L15 3M8 10H17" stroke="#e0e2e6" stroke-width="1.4"/></svg>
<svg class="a" style="left:1528.5px;top:1064px" width="7" height="4.5"><path d="M0 0H7L3.5 3.5Z" fill="#e0e2e6"/></svg>
<svg class="a" style="left:1544px;top:1057px" width="18" height="20" viewBox="0 0 18 20"><path d="M2 2L16 18" stroke="#e04848" stroke-width="1.4"/><path d="M9 0V20" stroke="#40c060" stroke-width="1.4"/><circle cx="9" cy="10" r="2" fill="#d8d8d8"/></svg>
<svg class="a" style="left:1571.5px;top:1064px" width="7" height="4.5"><path d="M0 0H7L3.5 3.5Z" fill="#e0e2e6"/></svg>
<svg class="a" style="left:1587px;top:1058px" width="18" height="18" viewBox="0 0 18 18"><path d="M1 16H17M2 16L14 5" stroke="#e0e2e6" stroke-width="1.6" fill="none"/><rect x="7" y="9" width="3" height="3" fill="#e0e2e6"/></svg>
<svg class="a" style="left:1612px;top:1057px" width="18" height="20" viewBox="0 0 18 20"><rect x="4" y="4" width="13" height="15" stroke="#e0e2e6" stroke-width="1.4" fill="none"/><rect x="1" y="1" width="5" height="5" stroke="#e0e2e6" stroke-width="1.2" fill="#5a8bc4"/></svg>
<svg class="a" style="left:1638.5px;top:1064px" width="7" height="4.5"><path d="M0 0H7L3.5 3.5Z" fill="#e0e2e6"/></svg>
<svg class="a" style="left:1655px;top:1058px" width="17" height="17" viewBox="0 0 17 17"><path d="M1 2H17M1 6H17M1 10H17M1 14H17" stroke="#e0e2e6" stroke-width="2" fill="none"/><path d="M1 7.5H12M1 11.5H9" stroke="#333a46" stroke-width="1"/></svg>
<svg class="a" style="left:1683px;top:1057px" width="18" height="20" viewBox="0 0 18 20"><path d="M9 2L16 19L9 15L2 19Z" fill="#e0e2e6"/><circle cx="14" cy="4" r="2.5" stroke="#e8e8e8" stroke-width="1.2" fill="none"/></svg>
<svg class="a" style="left:1709px;top:1057px" width="18" height="20" viewBox="0 0 18 20"><path d="M9 2L16 19L9 15L2 19Z" fill="#e0e2e6"/></svg>
<svg class="a" style="left:1735px;top:1057px" width="18" height="20" viewBox="0 0 18 20"><path d="M9 2L16 19L9 15L2 19Z" fill="#e0e2e6"/></svg>
<div class="t" style="left:1759px;top:1061.6px;font-size:12.3px;color:#eceef1;">1:1</div>
<svg class="a" style="left:1778.5px;top:1064px" width="7" height="4.5"><path d="M0 0H7L3.5 3.5Z" fill="#e0e2e6"/></svg>
<svg class="a" style="left:1797px;top:1058px" width="17" height="17" viewBox="0 0 17 17"><circle cx="8.5" cy="8.5" r="5.5" fill="none" stroke="#e0e2e6" stroke-width="3.5" stroke-dasharray="2.6 1.7"/><circle cx="8.5" cy="8.5" r="4.2" fill="none" stroke="#e0e2e6" stroke-width="2.5"/></svg>
<svg class="a" style="left:1822.5px;top:1064px" width="7" height="4.5"><path d="M0 0H7L3.5 3.5Z" fill="#e0e2e6"/></svg>
<svg class="a" style="left:1840px;top:1059px" width="17" height="17" viewBox="0 0 17 17"><path d="M8.5 0V17M0 8.5H17" stroke="#e0e2e6" stroke-width="2"/></svg>
<svg class="a" style="left:1867px;top:1058px" width="18" height="18" viewBox="0 0 18 18"><rect x="1" y="1" width="6" height="6" stroke="#e0e2e6" stroke-width="1.2" fill="none"/><circle cx="14" cy="7" r="3" stroke="#e0e2e6" stroke-width="1.2" fill="none"/><path d="M5 17L8 12L11 17Z" stroke="#e0e2e6" stroke-width="1.2" fill="none"/></svg>
<svg class="a" style="left:1895px;top:1057px" width="20" height="20" viewBox="0 0 20 20"><path d="M4 2H14L18 6V16H4Z" fill="#3f7fc8"/><rect x="1" y="10" width="7" height="5" fill="#f0b830"/><path d="M8 14L11 17L17 10" stroke="#40c060" stroke-width="2" fill="none"/><path d="M6 4V14M2 6H14" stroke="#e8e8e8" stroke-width="1"/></svg>
<div class="a" style="left:1916px;top:1058px;width:4px;height:16px;background:#e0e0e0"></div>

<svg class="a" style="left:0;top:0" width="1920" height="1080" viewBox="0 0 1920 1080" font-family="Liberation Sans"><rect x="150.6" y="282.5" width="886.9999999999999" height="498.20000000000005" fill="none" stroke="#3e3e3e" stroke-width="1.5"/><rect x="159" y="290.8" width="869.7" height="481.49999999999994" fill="none" stroke="#3e3e3e" stroke-width="1.5"/><line x1="145.4" y1="297.6" x2="165.2" y2="297.6" stroke="#00e000" stroke-width="1.8" /><line x1="178.2" y1="297.6" x2="180.1" y2="297.6" stroke="#00e000" stroke-width="1.8" /><line x1="193.1" y1="297.6" x2="220.6" y2="297.6" stroke="#00e000" stroke-width="1.8" /><line x1="233.6" y1="297.6" x2="235.4" y2="297.6" stroke="#00e000" stroke-width="1.8" /><line x1="248.4" y1="297.6" x2="275.9" y2="297.6" stroke="#00e000" stroke-width="1.8" /><line x1="288.9" y1="297.6" x2="290.6" y2="297.6" stroke="#00e000" stroke-width="1.8" /><line x1="303.6" y1="297.6" x2="331.1" y2="297.6" stroke="#00e000" stroke-width="1.8" /><line x1="344.1" y1="297.6" x2="345.9" y2="297.6" stroke="#00e000" stroke-width="1.8" /><line x1="358.9" y1="297.6" x2="386.4" y2="297.6" stroke="#00e000" stroke-width="1.8" /><line x1="399.4" y1="297.6" x2="401.2" y2="297.6" stroke="#00e000" stroke-width="1.8" /><line x1="414.2" y1="297.6" x2="441.8" y2="297.6" stroke="#00e000" stroke-width="1.8" /><line x1="454.8" y1="297.6" x2="456.5" y2="297.6" stroke="#00e000" stroke-width="1.8" /><line x1="469.5" y1="297.6" x2="497.0" y2="297.6" stroke="#00e000" stroke-width="1.8" /><line x1="510.0" y1="297.6" x2="511.8" y2="297.6" stroke="#00e000" stroke-width="1.8" /><line x1="524.8" y1="297.6" x2="552.3" y2="297.6" stroke="#00e000" stroke-width="1.8" /><line x1="565.3" y1="297.6" x2="567.1" y2="297.6" stroke="#00e000" stroke-width="1.8" /><line x1="580.1" y1="297.6" x2="607.6" y2="297.6" stroke="#00e000" stroke-width="1.8" /><line x1="620.6" y1="297.6" x2="622.4" y2="297.6" stroke="#00e000" stroke-width="1.8" /><line x1="635.5" y1="297.6" x2="663.0" y2="297.6" stroke="#00e000" stroke-width="1.8" /><line x1="676.0" y1="297.6" x2="677.8" y2="297.6" stroke="#00e000" stroke-width="1.8" /><line x1="690.8" y1="297.6" x2="718.2" y2="297.6" stroke="#00e000" stroke-width="1.8" /><line x1="731.2" y1="297.6" x2="733.0" y2="297.6" stroke="#00e000" stroke-width="1.8" /><line x1="746.0" y1="297.6" x2="773.5" y2="297.6" stroke="#00e000" stroke-width="1.8" /><line x1="786.5" y1="297.6" x2="788.3" y2="297.6" stroke="#00e000" stroke-width="1.8" /><line x1="801.3" y1="297.6" x2="828.8" y2="297.6" stroke="#00e000" stroke-width="1.8" /><line x1="841.8" y1="297.6" x2="843.6" y2="297.6" stroke="#00e000" stroke-width="1.8" /><line x1="856.6" y1="297.6" x2="884.1" y2="297.6" stroke="#00e000" stroke-width="1.8" /><line x1="897.1" y1="297.6" x2="898.9" y2="297.6" stroke="#00e000" stroke-width="1.8" /><line x1="911.9" y1="297.6" x2="939.4" y2="297.6" stroke="#00e000" stroke-width="1.8" /><line x1="952.4" y1="297.6" x2="954.2" y2="297.6" stroke="#00e000" stroke-width="1.8" /><line x1="967.2" y1="297.6" x2="994.8" y2="297.6" stroke="#00e000" stroke-width="1.8" /><line x1="1007.8" y1="297.6" x2="1009.5" y2="297.6" stroke="#00e000" stroke-width="1.8" /><line x1="1022.5" y1="297.6" x2="1043.0" y2="297.6" stroke="#00e000" stroke-width="1.8" /><line x1="145.4" y1="463.6" x2="165.2" y2="463.6" stroke="#00e000" stroke-width="1.8" /><line x1="178.2" y1="463.6" x2="180.1" y2="463.6" stroke="#00e000" stroke-width="1.8" /><line x1="193.1" y1="463.6" x2="220.6" y2="463.6" stroke="#00e000" stroke-width="1.8" /><line x1="233.6" y1="463.6" x2="235.4" y2="463.6" stroke="#00e000" stroke-width="1.8" /><line x1="248.4" y1="463.6" x2="275.9" y2="463.6" stroke="#00e000" stroke-width="1.8" /><line x1="288.9" y1="463.6" x2="290.6" y2="463.6" stroke="#00e000" stroke-width="1.8" /><line x1="303.6" y1="463.6" x2="331.1" y2="463.6" stroke="#00e000" stroke-width="1.8" /><line x1="344.1" y1="463.6" x2="345.9" y2="463.6" stroke="#00e000" stroke-width="1.8" /><line x1="358.9" y1="463.6" x2="386.4" y2="463.6" stroke="#00e000" stroke-width="1.8" /><line x1="399.4" y1="463.6" x2="401.2" y2="463.6" stroke="#00e000" stroke-width="1.8" /><line x1="414.2" y1="463.6" x2="441.8" y2="463.6" stroke="#00e000" stroke-width="1.8" /><line x1="454.8" y1="463.6" x2="456.5" y2="463.6" stroke="#00e000" stroke-width="1.8" /><line x1="469.5" y1="463.6" x2="497.0" y2="463.6" stroke="#00e000" stroke-width="1.8" /><line x1="510.0" y1="463.6" x2="511.8" y2="463.6" stroke="#00e000" stroke-width="1.8" /><line x1="524.8" y1="463.6" x2="552.3" y2="463.6" stroke="#00e000" stroke-width="1.8" /><line x1="565.3" y1="463.6" x2="567.1" y2="463.6" stroke="#00e000" stroke-width="1.8" /><line x1="580.1" y1="463.6" x2="607.6" y2="463.6" stroke="#00e000" stroke-width="1.8" /><line x1="620.6" y1="463.6" x2="622.4" y2="463.6" stroke="#00e000" stroke-width="1.8" /><line x1="635.5" y1="463.6" x2="663.0" y2="463.6" stroke="#00e000" stroke-width="1.8" /><line x1="676.0" y1="463.6" x2="677.8" y2="463.6" stroke="#00e000" stroke-width="1.8" /><line x1="690.8" y1="463.6" x2="718.2" y2="463.6" stroke="#00e000" stroke-width="1.8" /><line x1="731.2" y1="463.6" x2="733.0" y2="463.6" stroke="#00e000" stroke-width="1.8" /><line x1="746.0" y1="463.6" x2="773.5" y2="463.6" stroke="#00e000" stroke-width="1.8" /><line x1="786.5" y1="463.6" x2="788.3" y2="463.6" stroke="#00e000" stroke-width="1.8" /><line x1="801.3" y1="463.6" x2="828.8" y2="463.6" stroke="#00e000" stroke-width="1.8" /><line x1="841.8" y1="463.6" x2="843.6" y2="463.6" stroke="#00e000" stroke-width="1.8" /><line x1="856.6" y1="463.6" x2="884.1" y2="463.6" stroke="#00e000" stroke-width="1.8" /><line x1="897.1" y1="463.6" x2="898.9" y2="463.6" stroke="#00e000" stroke-width="1.8" /><line x1="911.9" y1="463.6" x2="939.4" y2="463.6" stroke="#00e000" stroke-width="1.8" /><line x1="952.4" y1="463.6" x2="954.2" y2="463.6" stroke="#00e000" stroke-width="1.8" /><line x1="967.2" y1="463.6" x2="994.8" y2="463.6" stroke="#00e000" stroke-width="1.8" /><line x1="1007.8" y1="463.6" x2="1009.5" y2="463.6" stroke="#00e000" stroke-width="1.8" /><line x1="1022.5" y1="463.6" x2="1043.0" y2="463.6" stroke="#00e000" stroke-width="1.8" /><line x1="145.4" y1="629.6" x2="165.2" y2="629.6" stroke="#00e000" stroke-width="1.8" /><line x1="178.2" y1="629.6" x2="180.1" y2="629.6" stroke="#00e000" stroke-width="1.8" /><line x1="193.1" y1="629.6" x2="220.6" y2="629.6" stroke="#00e000" stroke-width="1.8" /><line x1="233.6" y1="629.6" x2="235.4" y2="629.6" stroke="#00e000" stroke-width="1.8" /><line x1="248.4" y1="629.6" x2="275.9" y2="629.6" stroke="#00e000" stroke-width="1.8" /><line x1="288.9" y1="629.6" x2="290.6" y2="629.6" stroke="#00e000" stroke-width="1.8" /><line x1="303.6" y1="629.6" x2="331.1" y2="629.6" stroke="#00e000" stroke-width="1.8" /><line x1="344.1" y1="629.6" x2="345.9" y2="629.6" stroke="#00e000" stroke-width="1.8" /><line x1="358.9" y1="629.6" x2="386.4" y2="629.6" stroke="#00e000" stroke-width="1.8" /><line x1="399.4" y1="629.6" x2="401.2" y2="629.6" stroke="#00e000" stroke-width="1.8" /><line x1="414.2" y1="629.6" x2="441.8" y2="629.6" stroke="#00e000" stroke-width="1.8" /><line x1="454.8" y1="629.6" x2="456.5" y2="629.6" stroke="#00e000" stroke-width="1.8" /><line x1="469.5" y1="629.6" x2="497.0" y2="629.6" stroke="#00e000" stroke-width="1.8" /><line x1="510.0" y1="629.6" x2="511.8" y2="629.6" stroke="#00e000" stroke-width="1.8" /><line x1="524.8" y1="629.6" x2="552.3" y2="629.6" stroke="#00e000" stroke-width="1.8" /><line x1="565.3" y1="629.6" x2="567.1" y2="629.6" stroke="#00e000" stroke-width="1.8" /><line x1="580.1" y1="629.6" x2="607.6" y2="629.6" stroke="#00e000" stroke-width="1.8" /><line x1="620.6" y1="629.6" x2="622.4" y2="629.6" stroke="#00e000" stroke-width="1.8" /><line x1="635.5" y1="629.6" x2="663.0" y2="629.6" stroke="#00e000" stroke-width="1.8" /><line x1="676.0" y1="629.6" x2="677.8" y2="629.6" stroke="#00e000" stroke-width="1.8" /><line x1="690.8" y1="629.6" x2="718.2" y2="629.6" stroke="#00e000" stroke-width="1.8" /><line x1="731.2" y1="629.6" x2="733.0" y2="629.6" stroke="#00e000" stroke-width="1.8" /><line x1="746.0" y1="629.6" x2="773.5" y2="629.6" stroke="#00e000" stroke-width="1.8" /><line x1="786.5" y1="629.6" x2="788.3" y2="629.6" stroke="#00e000" stroke-width="1.8" /><line x1="801.3" y1="629.6" x2="828.8" y2="629.6" stroke="#00e000" stroke-width="1.8" /><line x1="841.8" y1="629.6" x2="843.6" y2="629.6" stroke="#00e000" stroke-width="1.8" /><line x1="856.6" y1="629.6" x2="884.1" y2="629.6" stroke="#00e000" stroke-width="1.8" /><line x1="897.1" y1="629.6" x2="898.9" y2="629.6" stroke="#00e000" stroke-width="1.8" /><line x1="911.9" y1="629.6" x2="939.4" y2="629.6" stroke="#00e000" stroke-width="1.8" /><line x1="952.4" y1="629.6" x2="954.2" y2="629.6" stroke="#00e000" stroke-width="1.8" /><line x1="967.2" y1="629.6" x2="994.8" y2="629.6" stroke="#00e000" stroke-width="1.8" /><line x1="1007.8" y1="629.6" x2="1009.5" y2="629.6" stroke="#00e000" stroke-width="1.8" /><line x1="1022.5" y1="629.6" x2="1043.0" y2="629.6" stroke="#00e000" stroke-width="1.8" /><line x1="145.4" y1="795.6" x2="165.2" y2="795.6" stroke="#00e000" stroke-width="1.8" /><line x1="178.2" y1="795.6" x2="180.1" y2="795.6" stroke="#00e000" stroke-width="1.8" /><line x1="193.1" y1="795.6" x2="220.6" y2="795.6" stroke="#00e000" stroke-width="1.8" /><line x1="233.6" y1="795.6" x2="235.4" y2="795.6" stroke="#00e000" stroke-width="1.8" /><line x1="248.4" y1="795.6" x2="275.9" y2="795.6" stroke="#00e000" stroke-width="1.8" /><line x1="288.9" y1="795.6" x2="290.6" y2="795.6" stroke="#00e000" stroke-width="1.8" /><line x1="303.6" y1="795.6" x2="331.1" y2="795.6" stroke="#00e000" stroke-width="1.8" /><line x1="344.1" y1="795.6" x2="345.9" y2="795.6" stroke="#00e000" stroke-width="1.8" /><line x1="358.9" y1="795.6" x2="386.4" y2="795.6" stroke="#00e000" stroke-width="1.8" /><line x1="399.4" y1="795.6" x2="401.2" y2="795.6" stroke="#00e000" stroke-width="1.8" /><line x1="414.2" y1="795.6" x2="441.8" y2="795.6" stroke="#00e000" stroke-width="1.8" /><line x1="454.8" y1="795.6" x2="456.5" y2="795.6" stroke="#00e000" stroke-width="1.8" /><line x1="469.5" y1="795.6" x2="497.0" y2="795.6" stroke="#00e000" stroke-width="1.8" /><line x1="510.0" y1="795.6" x2="511.8" y2="795.6" stroke="#00e000" stroke-width="1.8" /><line x1="524.8" y1="795.6" x2="552.3" y2="795.6" stroke="#00e000" stroke-width="1.8" /><line x1="565.3" y1="795.6" x2="567.1" y2="795.6" stroke="#00e000" stroke-width="1.8" /><line x1="580.1" y1="795.6" x2="607.6" y2="795.6" stroke="#00e000" stroke-width="1.8" /><line x1="620.6" y1="795.6" x2="622.4" y2="795.6" stroke="#00e000" stroke-width="1.8" /><line x1="635.5" y1="795.6" x2="663.0" y2="795.6" stroke="#00e000" stroke-width="1.8" /><line x1="676.0" y1="795.6" x2="677.8" y2="795.6" stroke="#00e000" stroke-width="1.8" /><line x1="690.8" y1="795.6" x2="718.2" y2="795.6" stroke="#00e000" stroke-width="1.8" /><line x1="731.2" y1="795.6" x2="733.0" y2="795.6" stroke="#00e000" stroke-width="1.8" /><line x1="746.0" y1="795.6" x2="773.5" y2="795.6" stroke="#00e000" stroke-width="1.8" /><line x1="786.5" y1="795.6" x2="788.3" y2="795.6" stroke="#00e000" stroke-width="1.8" /><line x1="801.3" y1="795.6" x2="828.8" y2="795.6" stroke="#00e000" stroke-width="1.8" /><line x1="841.8" y1="795.6" x2="843.6" y2="795.6" stroke="#00e000" stroke-width="1.8" /><line x1="856.6" y1="795.6" x2="884.1" y2="795.6" stroke="#00e000" stroke-width="1.8" /><line x1="897.1" y1="795.6" x2="898.9" y2="795.6" stroke="#00e000" stroke-width="1.8" /><line x1="911.9" y1="795.6" x2="939.4" y2="795.6" stroke="#00e000" stroke-width="1.8" /><line x1="952.4" y1="795.6" x2="954.2" y2="795.6" stroke="#00e000" stroke-width="1.8" /><line x1="967.2" y1="795.6" x2="994.8" y2="795.6" stroke="#00e000" stroke-width="1.8" /><line x1="1007.8" y1="795.6" x2="1009.5" y2="795.6" stroke="#00e000" stroke-width="1.8" /><line x1="1022.5" y1="795.6" x2="1043.0" y2="795.6" stroke="#00e000" stroke-width="1.8" /><line x1="145.4" y1="297.6" x2="145.4" y2="311.4" stroke="#00e000" stroke-width="1.8" /><line x1="145.4" y1="324.4" x2="145.4" y2="326.1" stroke="#00e000" stroke-width="1.8" /><line x1="145.4" y1="339.2" x2="145.4" y2="366.7" stroke="#00e000" stroke-width="1.8" /><line x1="145.4" y1="379.7" x2="145.4" y2="381.4" stroke="#00e000" stroke-width="1.8" /><line x1="145.4" y1="394.5" x2="145.4" y2="422.0" stroke="#00e000" stroke-width="1.8" /><line x1="145.4" y1="435.0" x2="145.4" y2="436.8" stroke="#00e000" stroke-width="1.8" /><line x1="145.4" y1="449.8" x2="145.4" y2="477.2" stroke="#00e000" stroke-width="1.8" /><line x1="145.4" y1="490.2" x2="145.4" y2="492.0" stroke="#00e000" stroke-width="1.8" /><line x1="145.4" y1="505.0" x2="145.4" y2="532.5" stroke="#00e000" stroke-width="1.8" /><line x1="145.4" y1="545.5" x2="145.4" y2="547.3" stroke="#00e000" stroke-width="1.8" /><line x1="145.4" y1="560.4" x2="145.4" y2="587.9" stroke="#00e000" stroke-width="1.8" /><line x1="145.4" y1="600.9" x2="145.4" y2="602.6" stroke="#00e000" stroke-width="1.8" /><line x1="145.4" y1="615.6" x2="145.4" y2="643.1" stroke="#00e000" stroke-width="1.8" /><line x1="145.4" y1="656.1" x2="145.4" y2="657.9" stroke="#00e000" stroke-width="1.8" /><line x1="145.4" y1="671.0" x2="145.4" y2="698.5" stroke="#00e000" stroke-width="1.8" /><line x1="145.4" y1="711.5" x2="145.4" y2="713.2" stroke="#00e000" stroke-width="1.8" /><line x1="145.4" y1="726.2" x2="145.4" y2="753.8" stroke="#00e000" stroke-width="1.8" /><line x1="145.4" y1="766.8" x2="145.4" y2="768.5" stroke="#00e000" stroke-width="1.8" /><line x1="145.4" y1="781.5" x2="145.4" y2="795.6" stroke="#00e000" stroke-width="1.8" /><line x1="324.9" y1="297.6" x2="324.9" y2="311.4" stroke="#00e000" stroke-width="1.8" /><line x1="324.9" y1="324.4" x2="324.9" y2="326.1" stroke="#00e000" stroke-width="1.8" /><line x1="324.9" y1="339.2" x2="324.9" y2="366.7" stroke="#00e000" stroke-width="1.8" /><line x1="324.9" y1="379.7" x2="324.9" y2="381.4" stroke="#00e000" stroke-width="1.8" /><line x1="324.9" y1="394.5" x2="324.9" y2="422.0" stroke="#00e000" stroke-width="1.8" /><line x1="324.9" y1="435.0" x2="324.9" y2="436.8" stroke="#00e000" stroke-width="1.8" /><line x1="324.9" y1="449.8" x2="324.9" y2="477.2" stroke="#00e000" stroke-width="1.8" /><line x1="324.9" y1="490.2" x2="324.9" y2="492.0" stroke="#00e000" stroke-width="1.8" /><line x1="324.9" y1="505.0" x2="324.9" y2="532.5" stroke="#00e000" stroke-width="1.8" /><line x1="324.9" y1="545.5" x2="324.9" y2="547.3" stroke="#00e000" stroke-width="1.8" /><line x1="324.9" y1="560.4" x2="324.9" y2="587.9" stroke="#00e000" stroke-width="1.8" /><line x1="324.9" y1="600.9" x2="324.9" y2="602.6" stroke="#00e000" stroke-width="1.8" /><line x1="324.9" y1="615.6" x2="324.9" y2="643.1" stroke="#00e000" stroke-width="1.8" /><line x1="324.9" y1="656.1" x2="324.9" y2="657.9" stroke="#00e000" stroke-width="1.8" /><line x1="324.9" y1="671.0" x2="324.9" y2="698.5" stroke="#00e000" stroke-width="1.8" /><line x1="324.9" y1="711.5" x2="324.9" y2="713.2" stroke="#00e000" stroke-width="1.8" /><line x1="324.9" y1="726.2" x2="324.9" y2="753.8" stroke="#00e000" stroke-width="1.8" /><line x1="324.9" y1="766.8" x2="324.9" y2="768.5" stroke="#00e000" stroke-width="1.8" /><line x1="324.9" y1="781.5" x2="324.9" y2="795.6" stroke="#00e000" stroke-width="1.8" /><line x1="504.4" y1="297.6" x2="504.4" y2="311.4" stroke="#00e000" stroke-width="1.8" /><line x1="504.4" y1="324.4" x2="504.4" y2="326.1" stroke="#00e000" stroke-width="1.8" /><line x1="504.4" y1="339.2" x2="504.4" y2="366.7" stroke="#00e000" stroke-width="1.8" /><line x1="504.4" y1="379.7" x2="504.4" y2="381.4" stroke="#00e000" stroke-width="1.8" /><line x1="504.4" y1="394.5" x2="504.4" y2="422.0" stroke="#00e000" stroke-width="1.8" /><line x1="504.4" y1="435.0" x2="504.4" y2="436.8" stroke="#00e000" stroke-width="1.8" /><line x1="504.4" y1="449.8" x2="504.4" y2="477.2" stroke="#00e000" stroke-width="1.8" /><line x1="504.4" y1="490.2" x2="504.4" y2="492.0" stroke="#00e000" stroke-width="1.8" /><line x1="504.4" y1="505.0" x2="504.4" y2="532.5" stroke="#00e000" stroke-width="1.8" /><line x1="504.4" y1="545.5" x2="504.4" y2="547.3" stroke="#00e000" stroke-width="1.8" /><line x1="504.4" y1="560.4" x2="504.4" y2="587.9" stroke="#00e000" stroke-width="1.8" /><line x1="504.4" y1="600.9" x2="504.4" y2="602.6" stroke="#00e000" stroke-width="1.8" /><line x1="504.4" y1="615.6" x2="504.4" y2="643.1" stroke="#00e000" stroke-width="1.8" /><line x1="504.4" y1="656.1" x2="504.4" y2="657.9" stroke="#00e000" stroke-width="1.8" /><line x1="504.4" y1="671.0" x2="504.4" y2="698.5" stroke="#00e000" stroke-width="1.8" /><line x1="504.4" y1="711.5" x2="504.4" y2="713.2" stroke="#00e000" stroke-width="1.8" /><line x1="504.4" y1="726.2" x2="504.4" y2="753.8" stroke="#00e000" stroke-width="1.8" /><line x1="504.4" y1="766.8" x2="504.4" y2="768.5" stroke="#00e000" stroke-width="1.8" /><line x1="504.4" y1="781.5" x2="504.4" y2="795.6" stroke="#00e000" stroke-width="1.8" /><line x1="684.0" y1="297.6" x2="684.0" y2="311.4" stroke="#00e000" stroke-width="1.8" /><line x1="684.0" y1="324.4" x2="684.0" y2="326.1" stroke="#00e000" stroke-width="1.8" /><line x1="684.0" y1="339.2" x2="684.0" y2="366.7" stroke="#00e000" stroke-width="1.8" /><line x1="684.0" y1="379.7" x2="684.0" y2="381.4" stroke="#00e000" stroke-width="1.8" /><line x1="684.0" y1="394.5" x2="684.0" y2="422.0" stroke="#00e000" stroke-width="1.8" /><line x1="684.0" y1="435.0" x2="684.0" y2="436.8" stroke="#00e000" stroke-width="1.8" /><line x1="684.0" y1="449.8" x2="684.0" y2="477.2" stroke="#00e000" stroke-width="1.8" /><line x1="684.0" y1="490.2" x2="684.0" y2="492.0" stroke="#00e000" stroke-width="1.8" /><line x1="684.0" y1="505.0" x2="684.0" y2="532.5" stroke="#00e000" stroke-width="1.8" /><line x1="684.0" y1="545.5" x2="684.0" y2="547.3" stroke="#00e000" stroke-width="1.8" /><line x1="684.0" y1="560.4" x2="684.0" y2="587.9" stroke="#00e000" stroke-width="1.8" /><line x1="684.0" y1="600.9" x2="684.0" y2="602.6" stroke="#00e000" stroke-width="1.8" /><line x1="684.0" y1="615.6" x2="684.0" y2="643.1" stroke="#00e000" stroke-width="1.8" /><line x1="684.0" y1="656.1" x2="684.0" y2="657.9" stroke="#00e000" stroke-width="1.8" /><line x1="684.0" y1="671.0" x2="684.0" y2="698.5" stroke="#00e000" stroke-width="1.8" /><line x1="684.0" y1="711.5" x2="684.0" y2="713.2" stroke="#00e000" stroke-width="1.8" /><line x1="684.0" y1="726.2" x2="684.0" y2="753.8" stroke="#00e000" stroke-width="1.8" /><line x1="684.0" y1="766.8" x2="684.0" y2="768.5" stroke="#00e000" stroke-width="1.8" /><line x1="684.0" y1="781.5" x2="684.0" y2="795.6" stroke="#00e000" stroke-width="1.8" /><line x1="863.5" y1="297.6" x2="863.5" y2="311.4" stroke="#00e000" stroke-width="1.8" /><line x1="863.5" y1="324.4" x2="863.5" y2="326.1" stroke="#00e000" stroke-width="1.8" /><line x1="863.5" y1="339.2" x2="863.5" y2="366.7" stroke="#00e000" stroke-width="1.8" /><line x1="863.5" y1="379.7" x2="863.5" y2="381.4" stroke="#00e000" stroke-width="1.8" /><line x1="863.5" y1="394.5" x2="863.5" y2="422.0" stroke="#00e000" stroke-width="1.8" /><line x1="863.5" y1="435.0" x2="863.5" y2="436.8" stroke="#00e000" stroke-width="1.8" /><line x1="863.5" y1="449.8" x2="863.5" y2="477.2" stroke="#00e000" stroke-width="1.8" /><line x1="863.5" y1="490.2" x2="863.5" y2="492.0" stroke="#00e000" stroke-width="1.8" /><line x1="863.5" y1="505.0" x2="863.5" y2="532.5" stroke="#00e000" stroke-width="1.8" /><line x1="863.5" y1="545.5" x2="863.5" y2="547.3" stroke="#00e000" stroke-width="1.8" /><line x1="863.5" y1="560.4" x2="863.5" y2="587.9" stroke="#00e000" stroke-width="1.8" /><line x1="863.5" y1="600.9" x2="863.5" y2="602.6" stroke="#00e000" stroke-width="1.8" /><line x1="863.5" y1="615.6" x2="863.5" y2="643.1" stroke="#00e000" stroke-width="1.8" /><line x1="863.5" y1="656.1" x2="863.5" y2="657.9" stroke="#00e000" stroke-width="1.8" /><line x1="863.5" y1="671.0" x2="863.5" y2="698.5" stroke="#00e000" stroke-width="1.8" /><line x1="863.5" y1="711.5" x2="863.5" y2="713.2" stroke="#00e000" stroke-width="1.8" /><line x1="863.5" y1="726.2" x2="863.5" y2="753.8" stroke="#00e000" stroke-width="1.8" /><line x1="863.5" y1="766.8" x2="863.5" y2="768.5" stroke="#00e000" stroke-width="1.8" /><line x1="863.5" y1="781.5" x2="863.5" y2="795.6" stroke="#00e000" stroke-width="1.8" /><line x1="1043.0" y1="297.6" x2="1043.0" y2="311.4" stroke="#00e000" stroke-width="1.8" /><line x1="1043.0" y1="324.4" x2="1043.0" y2="326.1" stroke="#00e000" stroke-width="1.8" /><line x1="1043.0" y1="339.2" x2="1043.0" y2="366.7" stroke="#00e000" stroke-width="1.8" /><line x1="1043.0" y1="379.7" x2="1043.0" y2="381.4" stroke="#00e000" stroke-width="1.8" /><line x1="1043.0" y1="394.5" x2="1043.0" y2="422.0" stroke="#00e000" stroke-width="1.8" /><line x1="1043.0" y1="435.0" x2="1043.0" y2="436.8" stroke="#00e000" stroke-width="1.8" /><line x1="1043.0" y1="449.8" x2="1043.0" y2="477.2" stroke="#00e000" stroke-width="1.8" /><line x1="1043.0" y1="490.2" x2="1043.0" y2="492.0" stroke="#00e000" stroke-width="1.8" /><line x1="1043.0" y1="505.0" x2="1043.0" y2="532.5" stroke="#00e000" stroke-width="1.8" /><line x1="1043.0" y1="545.5" x2="1043.0" y2="547.3" stroke="#00e000" stroke-width="1.8" /><line x1="1043.0" y1="560.4" x2="1043.0" y2="587.9" stroke="#00e000" stroke-width="1.8" /><line x1="1043.0" y1="600.9" x2="1043.0" y2="602.6" stroke="#00e000" stroke-width="1.8" /><line x1="1043.0" y1="615.6" x2="1043.0" y2="643.1" stroke="#00e000" stroke-width="1.8" /><line x1="1043.0" y1="656.1" x2="1043.0" y2="657.9" stroke="#00e000" stroke-width="1.8" /><line x1="1043.0" y1="671.0" x2="1043.0" y2="698.5" stroke="#00e000" stroke-width="1.8" /><line x1="1043.0" y1="711.5" x2="1043.0" y2="713.2" stroke="#00e000" stroke-width="1.8" /><line x1="1043.0" y1="726.2" x2="1043.0" y2="753.8" stroke="#00e000" stroke-width="1.8" /><line x1="1043.0" y1="766.8" x2="1043.0" y2="768.5" stroke="#00e000" stroke-width="1.8" /><line x1="1043.0" y1="781.5" x2="1043.0" y2="795.6" stroke="#00e000" stroke-width="1.8" /><circle cx="145.4" cy="297.6" r="6.8" fill="none" stroke="#00e000" stroke-width="1.6"/><circle cx="145.4" cy="297.6" r="2.8" fill="none" stroke="#00e000" stroke-width="1.3"/><circle cx="145.4" cy="463.6" r="3.3" fill="none" stroke="#00e000" stroke-width="1.6"/><circle cx="145.4" cy="629.6" r="3.3" fill="none" stroke="#00e000" stroke-width="1.6"/><circle cx="145.4" cy="795.6" r="3.3" fill="none" stroke="#00e000" stroke-width="1.6"/><circle cx="324.92" cy="297.6" r="3.3" fill="none" stroke="#00e000" stroke-width="1.6"/><line x1="322.9" y1="461.6" x2="326.9" y2="465.6" stroke="#00e000" stroke-width="1.2" /><line x1="322.9" y1="465.6" x2="326.9" y2="461.6" stroke="#00e000" stroke-width="1.2" /><line x1="322.9" y1="627.6" x2="326.9" y2="631.6" stroke="#00e000" stroke-width="1.2" /><line x1="322.9" y1="631.6" x2="326.9" y2="627.6" stroke="#00e000" stroke-width="1.2" /><circle cx="324.92" cy="795.6" r="3.3" fill="none" stroke="#00e000" stroke-width="1.6"/><circle cx="504.44000000000005" cy="297.6" r="3.3" fill="none" stroke="#00e000" stroke-width="1.6"/><line x1="502.4" y1="461.6" x2="506.4" y2="465.6" stroke="#00e000" stroke-width="1.2" /><line x1="502.4" y1="465.6" x2="506.4" y2="461.6" stroke="#00e000" stroke-width="1.2" /><line x1="502.4" y1="627.6" x2="506.4" y2="631.6" stroke="#00e000" stroke-width="1.2" /><line x1="502.4" y1="631.6" x2="506.4" y2="627.6" stroke="#00e000" stroke-width="1.2" /><circle cx="504.44000000000005" cy="795.6" r="3.3" fill="none" stroke="#00e000" stroke-width="1.6"/><circle cx="683.96" cy="297.6" r="3.3" fill="none" stroke="#00e000" stroke-width="1.6"/><line x1="682.0" y1="461.6" x2="686.0" y2="465.6" stroke="#00e000" stroke-width="1.2" /><line x1="682.0" y1="465.6" x2="686.0" y2="461.6" stroke="#00e000" stroke-width="1.2" /><line x1="682.0" y1="627.6" x2="686.0" y2="631.6" stroke="#00e000" stroke-width="1.2" /><line x1="682.0" y1="631.6" x2="686.0" y2="627.6" stroke="#00e000" stroke-width="1.2" /><circle cx="683.96" cy="795.6" r="3.3" fill="none" stroke="#00e000" stroke-width="1.6"/><circle cx="863.48" cy="297.6" r="3.3" fill="none" stroke="#00e000" stroke-width="1.6"/><line x1="861.5" y1="461.6" x2="865.5" y2="465.6" stroke="#00e000" stroke-width="1.2" /><line x1="861.5" y1="465.6" x2="865.5" y2="461.6" stroke="#00e000" stroke-width="1.2" /><line x1="861.5" y1="627.6" x2="865.5" y2="631.6" stroke="#00e000" stroke-width="1.2" /><line x1="861.5" y1="631.6" x2="865.5" y2="627.6" stroke="#00e000" stroke-width="1.2" /><circle cx="863.48" cy="795.6" r="3.3" fill="none" stroke="#00e000" stroke-width="1.6"/><circle cx="1043.0" cy="297.6" r="3.3" fill="none" stroke="#00e000" stroke-width="1.6"/><circle cx="1043.0" cy="463.6" r="3.3" fill="none" stroke="#00e000" stroke-width="1.6"/><circle cx="1043.0" cy="629.6" r="3.3" fill="none" stroke="#00e000" stroke-width="1.6"/><circle cx="1043.0" cy="795.6" r="6.8" fill="none" stroke="#00e000" stroke-width="1.6"/><circle cx="1043.0" cy="795.6" r="2.8" fill="none" stroke="#00e000" stroke-width="1.3"/><text x="138.9" y="293.4" font-size="6.6" fill="#f0f000" text-anchor="start" textLength="26" lengthAdjust="spacingAndGlyphs" font-weight="bold" >HASTE 1</text><text x="318.4" y="293.4" font-size="6.6" fill="#f0f000" text-anchor="start" textLength="28" lengthAdjust="spacingAndGlyphs" font-weight="bold" >HASTE 2</text><text x="497.9" y="293.4" font-size="6.6" fill="#f0f000" text-anchor="start" textLength="28" lengthAdjust="spacingAndGlyphs" font-weight="bold" >HASTE 3</text><text x="677.5" y="293.4" font-size="6.6" fill="#f0f000" text-anchor="start" textLength="28" lengthAdjust="spacingAndGlyphs" font-weight="bold" >HASTE 4</text><text x="857.0" y="293.4" font-size="6.6" fill="#f0f000" text-anchor="start" textLength="28" lengthAdjust="spacingAndGlyphs" font-weight="bold" >HASTE 5</text><text x="1036.5" y="293.4" font-size="6.6" fill="#f0f000" text-anchor="start" textLength="28" lengthAdjust="spacingAndGlyphs" font-weight="bold" >HASTE 6</text><text x="138.9" y="459.4" font-size="6.6" fill="#f0f000" text-anchor="start" textLength="29" lengthAdjust="spacingAndGlyphs" font-weight="bold" >HASTE 18</text><text x="1035.0" y="459.4" font-size="6.6" fill="#f0f000" text-anchor="start" textLength="27" lengthAdjust="spacingAndGlyphs" font-weight="bold" >HASTE 7</text><text x="138.9" y="625.4" font-size="6.6" fill="#f0f000" text-anchor="start" textLength="29" lengthAdjust="spacingAndGlyphs" font-weight="bold" >HASTE 15</text><text x="1035.0" y="625.4" font-size="6.6" fill="#f0f000" text-anchor="start" textLength="27" lengthAdjust="spacingAndGlyphs" font-weight="bold" >HASTE 8</text><text x="136.4" y="807.2" font-size="6.6" fill="#f0f000" text-anchor="start" textLength="31" lengthAdjust="spacingAndGlyphs" font-weight="bold" >HASTE 14</text><text x="315.9" y="807.2" font-size="6.6" fill="#f0f000" text-anchor="start" textLength="31" lengthAdjust="spacingAndGlyphs" font-weight="bold" >HASTE 13</text><text x="495.4" y="807.2" font-size="6.6" fill="#f0f000" text-anchor="start" textLength="31" lengthAdjust="spacingAndGlyphs" font-weight="bold" >HASTE 12</text><text x="675.0" y="807.2" font-size="6.6" fill="#f0f000" text-anchor="start" textLength="31" lengthAdjust="spacingAndGlyphs" font-weight="bold" >HASTE 11</text><text x="854.5" y="807.2" font-size="6.6" fill="#f0f000" text-anchor="start" textLength="31" lengthAdjust="spacingAndGlyphs" font-weight="bold" >HASTE 10</text><text x="1034.0" y="807.2" font-size="6.6" fill="#f0f000" text-anchor="start" textLength="28" lengthAdjust="spacingAndGlyphs" font-weight="bold" >HASTE 9</text><line x1="145.4" y1="253.1" x2="1043.0" y2="253.1" stroke="#f00000" stroke-width="1.5" /><line x1="145.4" y1="236.0" x2="145.4" y2="270.5" stroke="#f00000" stroke-width="1.5" /><line x1="324.9" y1="236.0" x2="324.9" y2="270.5" stroke="#f00000" stroke-width="1.5" /><line x1="504.4" y1="236.0" x2="504.4" y2="270.5" stroke="#f00000" stroke-width="1.5" /><line x1="684.0" y1="236.0" x2="684.0" y2="270.5" stroke="#f00000" stroke-width="1.5" /><line x1="863.5" y1="236.0" x2="863.5" y2="270.5" stroke="#f00000" stroke-width="1.5" /><line x1="1043.0" y1="236.0" x2="1043.0" y2="270.5" stroke="#f00000" stroke-width="1.5" /><path d="M145.4 253.1L157.4 250.3V255.9Z M324.92 253.1L312.92 250.3V255.9Z" fill="#f00000"/><text x="235.2" y="242.5" font-size="17.4" fill="#f0f000" text-anchor="middle" textLength="29.5" lengthAdjust="spacingAndGlyphs" stroke="#000" stroke-width="0.45">324</text><path d="M324.92 253.1L336.92 250.3V255.9Z M504.44000000000005 253.1L492.44000000000005 250.3V255.9Z" fill="#f00000"/><text x="414.7" y="242.5" font-size="17.4" fill="#f0f000" text-anchor="middle" textLength="29.5" lengthAdjust="spacingAndGlyphs" stroke="#000" stroke-width="0.45">324</text><path d="M504.44000000000005 253.1L516.44 250.3V255.9Z M683.96 253.1L671.96 250.3V255.9Z" fill="#f00000"/><text x="594.2" y="242.5" font-size="17.4" fill="#f0f000" text-anchor="middle" textLength="29.5" lengthAdjust="spacingAndGlyphs" stroke="#000" stroke-width="0.45">324</text><path d="M683.96 253.1L695.96 250.3V255.9Z M863.48 253.1L851.48 250.3V255.9Z" fill="#f00000"/><text x="773.7" y="242.5" font-size="17.4" fill="#f0f000" text-anchor="middle" textLength="29.5" lengthAdjust="spacingAndGlyphs" stroke="#000" stroke-width="0.45">324</text><path d="M863.48 253.1L875.48 250.3V255.9Z M1043.0 253.1L1031.0 250.3V255.9Z" fill="#f00000"/><text x="953.2" y="242.5" font-size="17.4" fill="#f0f000" text-anchor="middle" textLength="29.5" lengthAdjust="spacingAndGlyphs" stroke="#000" stroke-width="0.45">324</text><line x1="105.8" y1="297.6" x2="105.8" y2="795.6" stroke="#f00000" stroke-width="1.5" /><line x1="88.6" y1="297.6" x2="117.8" y2="297.6" stroke="#f00000" stroke-width="1.5" /><line x1="88.6" y1="463.6" x2="117.8" y2="463.6" stroke="#f00000" stroke-width="1.5" /><line x1="88.6" y1="629.6" x2="117.8" y2="629.6" stroke="#f00000" stroke-width="1.5" /><line x1="88.6" y1="795.6" x2="117.8" y2="795.6" stroke="#f00000" stroke-width="1.5" /><path d="M105.8 297.6L103 309.6H108.6Z M105.8 463.6L103 451.6H108.6Z" fill="#f00000"/><text x="0" y="0" font-size="17.4" fill="#f0f000" stroke="#000" stroke-width="0.45" text-anchor="middle" textLength="29.5" lengthAdjust="spacingAndGlyphs" transform="translate(96.5 380.6) rotate(-90)">300</text><path d="M105.8 463.6L103 475.6H108.6Z M105.8 629.6L103 617.6H108.6Z" fill="#f00000"/><text x="0" y="0" font-size="17.4" fill="#f0f000" stroke="#000" stroke-width="0.45" text-anchor="middle" textLength="29.5" lengthAdjust="spacingAndGlyphs" transform="translate(96.5 546.6) rotate(-90)">300</text><path d="M105.8 629.6L103 641.6H108.6Z M105.8 795.6L103 783.6H108.6Z" fill="#f00000"/><text x="0" y="0" font-size="17.4" fill="#f0f000" stroke="#000" stroke-width="0.45" text-anchor="middle" textLength="29.5" lengthAdjust="spacingAndGlyphs" transform="translate(96.5 712.6) rotate(-90)">300</text><polyline points="389.9,297.6 408.9,328.6 418.4,328.6" stroke="#f00000" stroke-width="1.4" fill="none" /><text x="420.9" y="328.1" font-size="6.6" fill="#f0f000" text-anchor="start" textLength="53" lengthAdjust="spacingAndGlyphs" font-weight="bold" >CABO COBRE NÚ</text><text x="420.9" y="334.3" font-size="6.6" fill="#f0f000" text-anchor="start" textLength="62" lengthAdjust="spacingAndGlyphs" font-weight="bold" >MEIO DURO 50mm²</text><polyline points="389.9,463.6 408.9,494.6 418.4,494.6" stroke="#f00000" stroke-width="1.4" fill="none" /><text x="420.9" y="494.1" font-size="6.6" fill="#f0f000" text-anchor="start" textLength="53" lengthAdjust="spacingAndGlyphs" font-weight="bold" >CABO COBRE NÚ</text><text x="420.9" y="500.3" font-size="6.6" fill="#f0f000" text-anchor="start" textLength="62" lengthAdjust="spacingAndGlyphs" font-weight="bold" >MEIO DURO 50mm²</text><polyline points="389.9,629.6 408.9,660.6 418.4,660.6" stroke="#f00000" stroke-width="1.4" fill="none" /><text x="420.9" y="660.1" font-size="6.6" fill="#f0f000" text-anchor="start" textLength="53" lengthAdjust="spacingAndGlyphs" font-weight="bold" >CABO COBRE NÚ</text><text x="420.9" y="666.3" font-size="6.6" fill="#f0f000" text-anchor="start" textLength="62" lengthAdjust="spacingAndGlyphs" font-weight="bold" >MEIO DURO 50mm²</text><polyline points="389.9,795.6 408.9,826.6 418.4,826.6" stroke="#f00000" stroke-width="1.4" fill="none" /><text x="420.9" y="826.1" font-size="6.6" fill="#f0f000" text-anchor="start" textLength="53" lengthAdjust="spacingAndGlyphs" font-weight="bold" >CABO COBRE NÚ</text><text x="420.9" y="832.3" font-size="6.6" fill="#f0f000" text-anchor="start" textLength="62" lengthAdjust="spacingAndGlyphs" font-weight="bold" >MEIO DURO 50mm²</text><polyline points="145.4,536.2 164.4,567.5 173.9,567.5" stroke="#f00000" stroke-width="1.4" fill="none" /><text x="175.4" y="567.0" font-size="6.6" fill="#f0f000" text-anchor="start" textLength="53" lengthAdjust="spacingAndGlyphs" font-weight="bold" >CABO COBRE NÚ</text><text x="175.4" y="573.2" font-size="6.6" fill="#f0f000" text-anchor="start" textLength="62" lengthAdjust="spacingAndGlyphs" font-weight="bold" >MEIO DURO 50mm²</text><polyline points="324.9,536.2 343.9,567.5 353.4,567.5" stroke="#f00000" stroke-width="1.4" fill="none" /><text x="354.9" y="567.0" font-size="6.6" fill="#f0f000" text-anchor="start" textLength="53" lengthAdjust="spacingAndGlyphs" font-weight="bold" >CABO COBRE NÚ</text><text x="354.9" y="573.2" font-size="6.6" fill="#f0f000" text-anchor="start" textLength="62" lengthAdjust="spacingAndGlyphs" font-weight="bold" >MEIO DURO 50mm²</text><polyline points="504.4,536.2 523.4,567.5 532.9,567.5" stroke="#f00000" stroke-width="1.4" fill="none" /><text x="534.4" y="567.0" font-size="6.6" fill="#f0f000" text-anchor="start" textLength="53" lengthAdjust="spacingAndGlyphs" font-weight="bold" >CABO COBRE NÚ</text><text x="534.4" y="573.2" font-size="6.6" fill="#f0f000" text-anchor="start" textLength="62" lengthAdjust="spacingAndGlyphs" font-weight="bold" >MEIO DURO 50mm²</text><polyline points="684.0,536.2 703.0,567.5 712.5,567.5" stroke="#f00000" stroke-width="1.4" fill="none" /><text x="714.0" y="567.0" font-size="6.6" fill="#f0f000" text-anchor="start" textLength="53" lengthAdjust="spacingAndGlyphs" font-weight="bold" >CABO COBRE NÚ</text><text x="714.0" y="573.2" font-size="6.6" fill="#f0f000" text-anchor="start" textLength="62" lengthAdjust="spacingAndGlyphs" font-weight="bold" >MEIO DURO 50mm²</text><polyline points="863.5,536.2 882.5,567.5 892.0,567.5" stroke="#f00000" stroke-width="1.4" fill="none" /><text x="893.5" y="567.0" font-size="6.6" fill="#f0f000" text-anchor="start" textLength="53" lengthAdjust="spacingAndGlyphs" font-weight="bold" >CABO COBRE NÚ</text><text x="893.5" y="573.2" font-size="6.6" fill="#f0f000" text-anchor="start" textLength="62" lengthAdjust="spacingAndGlyphs" font-weight="bold" >MEIO DURO 50mm²</text><polyline points="1043.0,536.2 1062.0,567.5 1071.5,567.5" stroke="#f00000" stroke-width="1.4" fill="none" /><text x="1073.0" y="567.0" font-size="6.6" fill="#f0f000" text-anchor="start" textLength="53" lengthAdjust="spacingAndGlyphs" font-weight="bold" >CABO COBRE NÚ</text><text x="1073.0" y="573.2" font-size="6.6" fill="#f0f000" text-anchor="start" textLength="62" lengthAdjust="spacingAndGlyphs" font-weight="bold" >MEIO DURO 50mm²</text><path d="M303.52000000000004 681.3A44 44 0 0 0 324.92 719.7" fill="none" stroke="#00e000" stroke-width="1.5"/><line x1="322.4" y1="717.2" x2="327.4" y2="722.2" stroke="#00e000" stroke-width="1.2" /><line x1="322.4" y1="722.2" x2="327.4" y2="717.2" stroke="#00e000" stroke-width="1.2" /><polyline points="309.4,705.0 290.2,735.8 280.2,735.8" stroke="#f00000" stroke-width="1.4" fill="none" /><text x="277.2" y="735.3" font-size="6.6" fill="#f0f000" text-anchor="end" textLength="53" lengthAdjust="spacingAndGlyphs" font-weight="bold" >CABO COBRE NÚ</text><text x="277.2" y="741.5" font-size="6.6" fill="#f0f000" text-anchor="end" textLength="62" lengthAdjust="spacingAndGlyphs" font-weight="bold" >MEIO DURO 50mm²</text><path d="M483.0400000000001 681.3A44 44 0 0 0 504.44000000000005 719.7" fill="none" stroke="#00e000" stroke-width="1.5"/><line x1="501.9" y1="717.2" x2="506.9" y2="722.2" stroke="#00e000" stroke-width="1.2" /><line x1="501.9" y1="722.2" x2="506.9" y2="717.2" stroke="#00e000" stroke-width="1.2" /><polyline points="488.9,705.0 469.7,735.8 459.7,735.8" stroke="#f00000" stroke-width="1.4" fill="none" /><text x="456.7" y="735.3" font-size="6.6" fill="#f0f000" text-anchor="end" textLength="53" lengthAdjust="spacingAndGlyphs" font-weight="bold" >CABO COBRE NÚ</text><text x="456.7" y="741.5" font-size="6.6" fill="#f0f000" text-anchor="end" textLength="62" lengthAdjust="spacingAndGlyphs" font-weight="bold" >MEIO DURO 50mm²</text><path d="M662.5600000000001 681.3A44 44 0 0 0 683.96 719.7" fill="none" stroke="#00e000" stroke-width="1.5"/><line x1="681.5" y1="717.2" x2="686.5" y2="722.2" stroke="#00e000" stroke-width="1.2" /><line x1="681.5" y1="722.2" x2="686.5" y2="717.2" stroke="#00e000" stroke-width="1.2" /><polyline points="668.5,705.0 649.3,735.8 639.3,735.8" stroke="#f00000" stroke-width="1.4" fill="none" /><text x="636.3" y="735.3" font-size="6.6" fill="#f0f000" text-anchor="end" textLength="53" lengthAdjust="spacingAndGlyphs" font-weight="bold" >CABO COBRE NÚ</text><text x="636.3" y="741.5" font-size="6.6" fill="#f0f000" text-anchor="end" textLength="62" lengthAdjust="spacingAndGlyphs" font-weight="bold" >MEIO DURO 50mm²</text><path d="M884.58 681.8A44 44 0 0 1 863.48 720" fill="none" stroke="#00e000" stroke-width="1.5"/><line x1="861.0" y1="717.5" x2="866.0" y2="722.5" stroke="#00e000" stroke-width="1.2" /><line x1="861.0" y1="722.5" x2="866.0" y2="717.5" stroke="#00e000" stroke-width="1.2" /><polyline points="877.0,707.8 896.0,738.9 906.7,738.9" stroke="#f00000" stroke-width="1.4" fill="none" /><text x="907.5" y="738.1" font-size="6.6" fill="#f0f000" text-anchor="start" textLength="53" lengthAdjust="spacingAndGlyphs" font-weight="bold" >CABO COBRE NÚ</text><text x="907.5" y="744.3" font-size="6.6" fill="#f0f000" text-anchor="start" textLength="62" lengthAdjust="spacingAndGlyphs" font-weight="bold" >MEIO DURO 50mm²</text><line x1="803.7" y1="793.1" x2="808.7" y2="798.1" stroke="#00e000" stroke-width="1.2" /><line x1="803.7" y1="798.1" x2="808.7" y2="793.1" stroke="#00e000" stroke-width="1.2" /><path d="M806.2 795.6C812 812 826 822 856 826" fill="none" stroke="#00e000" stroke-width="1.5"/><line x1="882.3" y1="829.4" x2="909.1" y2="832.8" stroke="#00e000" stroke-width="1.5" /><line x1="936.3" y1="836.3" x2="963.1" y2="839.8" stroke="#00e000" stroke-width="1.5" /><line x1="990.9" y1="843.4" x2="1018.7" y2="846.9" stroke="#00e000" stroke-width="1.5" /><line x1="1045.4" y1="850.4" x2="1073.2" y2="854.0" stroke="#00e000" stroke-width="1.5" /><line x1="868.4" y1="827.6" x2="870.2" y2="827.8" stroke="#00e000" stroke-width="1.6" /><line x1="922.5" y1="834.6" x2="924.2" y2="834.8" stroke="#00e000" stroke-width="1.6" /><line x1="977.0" y1="841.6" x2="978.8" y2="841.8" stroke="#00e000" stroke-width="1.6" /><line x1="1031.6" y1="848.6" x2="1033.3" y2="848.8" stroke="#00e000" stroke-width="1.6" /><line x1="1086.1" y1="855.6" x2="1087.9" y2="855.9" stroke="#00e000" stroke-width="1.6" /><polyline points="1080.0,847.8 1120.0,860.0 1077.8,862.2" stroke="#00e000" stroke-width="1.5" fill="none" /><polyline points="953.3,838.9 934.9,870.0 924.9,870.0" stroke="#f00000" stroke-width="1.4" fill="none" /><text x="922.0" y="869.2" font-size="6.6" fill="#f0f000" text-anchor="end" textLength="53" lengthAdjust="spacingAndGlyphs" font-weight="bold" >CABO COBRE NÚ</text><text x="922.0" y="875.3" font-size="6.6" fill="#f0f000" text-anchor="end" textLength="62" lengthAdjust="spacingAndGlyphs" font-weight="bold" >MEIO DURO 50mm²</text><text x="922.0" y="881.4" font-size="6.6" fill="#f0f000" text-anchor="end" textLength="71" lengthAdjust="spacingAndGlyphs" font-weight="bold" >INTERLIGA COM MALHA</text><text x="922.0" y="887.5" font-size="6.6" fill="#f0f000" text-anchor="end" textLength="51" lengthAdjust="spacingAndGlyphs" font-weight="bold" >DA SUBESTAÇÃO</text><text x="143.5" y="890.1" font-size="19.5" fill="#f0f000" text-anchor="start" textLength="429.5" lengthAdjust="spacingAndGlyphs" stroke="#000" stroke-width="0.55">Malha&#160; de&#160; aterramento&#160; –&#160; Base&#160; Geradores</text><text x="143.5" y="904.0" font-size="12" fill="#f0f000" text-anchor="start" textLength="69.7" lengthAdjust="spacingAndGlyphs" >Sem&#160; escala</text><text x="1257.2" y="895.3" font-size="18.5" fill="#f0f000" text-anchor="start" textLength="369" lengthAdjust="spacingAndGlyphs" stroke="#000" stroke-width="0.55">Detalhe&#160; da&#160; base&#160; dos&#160; Transformadores</text><text x="1257.2" y="912.4" font-size="11.5" fill="#f0f000" text-anchor="start" textLength="65" lengthAdjust="spacingAndGlyphs" >Sem&#160; escala</text></svg>
<svg class="a" style="left:0;top:0" width="1920" height="1080" viewBox="0 0 1920 1080" font-family="Liberation Sans"><path d="M1597.1 771.2h1.3v1.3h-1.3zM1579.1 858.1h1.3v1.3h-1.3zM1608.0 781.4h1.3v1.3h-1.3zM1571.5 722.0h1.3v1.3h-1.3zM1677.8 803.9h1.3v1.3h-1.3zM1466.6 705.3h1.3v1.3h-1.3zM1435.0 815.6h1.3v1.3h-1.3zM1698.8 868.7h1.3v1.3h-1.3zM1617.9 808.3h1.3v1.3h-1.3zM1335.5 717.0h1.3v1.3h-1.3zM1414.8 785.2h1.3v1.3h-1.3zM1446.4 723.0h1.3v1.3h-1.3zM1543.0 693.5h1.3v1.3h-1.3zM1707.6 769.1h1.3v1.3h-1.3zM1627.6 783.5h1.3v1.3h-1.3zM1636.1 780.0h1.3v1.3h-1.3zM1488.2 772.1h1.3v1.3h-1.3zM1704.3 871.6h1.3v1.3h-1.3zM1642.7 842.6h1.3v1.3h-1.3zM1454.1 746.0h1.3v1.3h-1.3zM1381.9 741.2h1.3v1.3h-1.3zM1553.5 829.0h1.3v1.3h-1.3zM1554.3 843.8h1.3v1.3h-1.3zM1672.9 864.3h1.3v1.3h-1.3zM1409.9 688.1h1.3v1.3h-1.3zM1579.7 855.5h1.3v1.3h-1.3zM1565.2 868.4h1.3v1.3h-1.3zM1627.1 701.4h1.3v1.3h-1.3zM1515.8 831.2h1.3v1.3h-1.3zM1480.4 704.0h1.3v1.3h-1.3zM1651.0 865.4h1.3v1.3h-1.3zM1441.0 709.7h1.3v1.3h-1.3zM1347.9 706.6h1.3v1.3h-1.3zM1491.0 834.7h1.3v1.3h-1.3zM1558.2 790.9h1.3v1.3h-1.3zM1673.7 723.1h1.3v1.3h-1.3zM1633.5 712.1h1.3v1.3h-1.3zM1525.5 709.4h1.3v1.3h-1.3zM1461.5 727.2h1.3v1.3h-1.3zM1661.5 866.7h1.3v1.3h-1.3zM1518.3 726.8h1.3v1.3h-1.3zM1624.3 845.2h1.3v1.3h-1.3zM1803.2 706.5h1.3v1.3h-1.3zM1456.2 727.2h1.3v1.3h-1.3zM1532.7 830.2h1.3v1.3h-1.3zM1384.4 742.5h1.3v1.3h-1.3zM1603.9 704.6h1.3v1.3h-1.3zM1613.1 732.7h1.3v1.3h-1.3zM1552.2 756.4h1.3v1.3h-1.3zM1584.9 864.5h1.3v1.3h-1.3zM1706.8 793.7h1.3v1.3h-1.3zM1404.7 721.6h1.3v1.3h-1.3zM1668.8 855.1h1.3v1.3h-1.3zM1429.2 733.9h1.3v1.3h-1.3zM1716.8 824.1h1.3v1.3h-1.3zM1774.3 724.2h1.3v1.3h-1.3zM1613.9 850.3h1.3v1.3h-1.3zM1415.6 765.5h1.3v1.3h-1.3zM1796.6 695.1h1.3v1.3h-1.3zM1659.6 731.9h1.3v1.3h-1.3zM1506.5 797.7h1.3v1.3h-1.3zM1668.9 720.3h1.3v1.3h-1.3zM1427.0 700.7h1.3v1.3h-1.3zM1702.9 790.9h1.3v1.3h-1.3zM1503.6 801.0h1.3v1.3h-1.3zM1512.4 856.8h1.3v1.3h-1.3zM1442.3 691.0h1.3v1.3h-1.3zM1402.1 770.0h1.3v1.3h-1.3zM1504.3 720.4h1.3v1.3h-1.3zM1447.1 793.3h1.3v1.3h-1.3zM1733.2 754.6h1.3v1.3h-1.3zM1626.4 868.4h1.3v1.3h-1.3zM1607.8 815.2h1.3v1.3h-1.3zM1342.2 713.8h1.3v1.3h-1.3zM1771.8 691.3h1.3v1.3h-1.3zM1727.6 817.0h1.3v1.3h-1.3zM1631.0 691.9h1.3v1.3h-1.3zM1662.2 776.7h1.3v1.3h-1.3zM1783.1 746.7h1.3v1.3h-1.3zM1585.6 701.8h1.3v1.3h-1.3zM1704.7 823.6h1.3v1.3h-1.3zM1644.6 823.6h1.3v1.3h-1.3zM1704.1 834.0h1.3v1.3h-1.3zM1648.1 752.7h1.3v1.3h-1.3zM1683.1 853.8h1.3v1.3h-1.3zM1688.6 764.8h1.3v1.3h-1.3zM1605.6 846.9h1.3v1.3h-1.3zM1539.1 803.0h1.3v1.3h-1.3zM1615.9 795.2h1.3v1.3h-1.3zM1632.0 702.8h1.3v1.3h-1.3zM1677.9 870.8h1.3v1.3h-1.3zM1547.6 822.0h1.3v1.3h-1.3zM1607.0 823.2h1.3v1.3h-1.3zM1706.0 769.1h1.3v1.3h-1.3zM1686.8 703.4h1.3v1.3h-1.3zM1613.1 693.5h1.3v1.3h-1.3zM1472.2 776.5h1.3v1.3h-1.3zM1580.2 816.5h1.3v1.3h-1.3zM1722.2 801.1h1.3v1.3h-1.3zM1350.5 735.1h1.3v1.3h-1.3zM1646.3 743.4h1.3v1.3h-1.3zM1414.3 725.3h1.3v1.3h-1.3zM1628.4 854.7h1.3v1.3h-1.3zM1726.8 769.3h1.3v1.3h-1.3zM1640.6 748.2h1.3v1.3h-1.3zM1534.5 724.5h1.3v1.3h-1.3zM1702.8 836.3h1.3v1.3h-1.3zM1555.9 850.0h1.3v1.3h-1.3zM1513.4 795.3h1.3v1.3h-1.3zM1562.8 713.1h1.3v1.3h-1.3zM1681.8 842.0h1.3v1.3h-1.3zM1722.5 818.9h1.3v1.3h-1.3zM1423.4 738.9h1.3v1.3h-1.3zM1486.4 770.9h1.3v1.3h-1.3zM1527.5 727.4h1.3v1.3h-1.3zM1576.9 803.1h1.3v1.3h-1.3zM1578.3 868.7h1.3v1.3h-1.3zM1329.7 701.7h1.3v1.3h-1.3zM1463.9 848.6h1.3v1.3h-1.3zM1603.6 818.4h1.3v1.3h-1.3zM1694.9 744.9h1.3v1.3h-1.3zM1374.1 691.5h1.3v1.3h-1.3zM1389.7 771.7h1.3v1.3h-1.3zM1511.7 840.7h1.3v1.3h-1.3zM1348.0 713.9h1.3v1.3h-1.3zM1561.0 803.8h1.3v1.3h-1.3zM1631.3 803.9h1.3v1.3h-1.3zM1715.3 836.6h1.3v1.3h-1.3zM1484.1 813.9h1.3v1.3h-1.3zM1451.9 775.4h1.3v1.3h-1.3zM1546.5 690.0h1.3v1.3h-1.3zM1481.3 819.4h1.3v1.3h-1.3zM1500.6 738.1h1.3v1.3h-1.3zM1587.6 816.3h1.3v1.3h-1.3zM1666.1 801.1h1.3v1.3h-1.3zM1690.4 760.4h1.3v1.3h-1.3zM1481.1 854.7h1.3v1.3h-1.3zM1643.5 859.6h1.3v1.3h-1.3zM1542.0 711.9h1.3v1.3h-1.3zM1717.6 803.1h1.3v1.3h-1.3zM1599.8 757.3h1.3v1.3h-1.3zM1665.0 849.8h1.3v1.3h-1.3zM1579.4 861.7h1.3v1.3h-1.3zM1482.1 807.8h1.3v1.3h-1.3zM1680.6 820.8h1.3v1.3h-1.3zM1652.0 806.1h1.3v1.3h-1.3zM1701.9 868.4h1.3v1.3h-1.3zM1682.1 786.8h1.3v1.3h-1.3zM1544.6 845.5h1.3v1.3h-1.3zM1533.7 703.2h1.3v1.3h-1.3zM1673.3 789.3h1.3v1.3h-1.3zM1396.6 777.7h1.3v1.3h-1.3zM1460.1 836.9h1.3v1.3h-1.3zM1489.9 835.2h1.3v1.3h-1.3zM1691.9 749.6h1.3v1.3h-1.3zM1396.6 713.9h1.3v1.3h-1.3zM1658.4 783.0h1.3v1.3h-1.3zM1637.6 842.6h1.3v1.3h-1.3zM1586.6 862.0h1.3v1.3h-1.3zM1487.2 862.6h1.3v1.3h-1.3zM1579.2 728.7h1.3v1.3h-1.3zM1668.6 741.4h1.3v1.3h-1.3zM1587.0 805.6h1.3v1.3h-1.3zM1601.9 843.2h1.3v1.3h-1.3zM1518.7 745.4h1.3v1.3h-1.3zM1695.5 843.5h1.3v1.3h-1.3zM1594.9 866.2h1.3v1.3h-1.3zM1471.7 793.4h1.3v1.3h-1.3zM1577.5 786.6h1.3v1.3h-1.3zM1415.9 799.4h1.3v1.3h-1.3zM1592.9 866.4h1.3v1.3h-1.3zM1693.7 761.7h1.3v1.3h-1.3zM1573.9 791.6h1.3v1.3h-1.3zM1442.3 815.1h1.3v1.3h-1.3zM1545.1 787.1h1.3v1.3h-1.3zM1691.4 864.1h1.3v1.3h-1.3zM1556.6 737.5h1.3v1.3h-1.3zM1532.3 711.4h1.3v1.3h-1.3zM1698.0 838.1h1.3v1.3h-1.3zM1504.9 775.7h1.3v1.3h-1.3zM1620.8 723.2h1.3v1.3h-1.3zM1494.6 858.2h1.3v1.3h-1.3zM1443.3 831.4h1.3v1.3h-1.3zM1440.0 723.7h1.3v1.3h-1.3zM1523.8 814.4h1.3v1.3h-1.3zM1620.8 753.4h1.3v1.3h-1.3zM1676.4 707.3h1.3v1.3h-1.3zM1569.2 710.6h1.3v1.3h-1.3zM1432.9 734.1h1.3v1.3h-1.3zM1553.0 785.6h1.3v1.3h-1.3zM1536.0 757.1h1.3v1.3h-1.3zM1451.6 785.4h1.3v1.3h-1.3zM1626.9 725.6h1.3v1.3h-1.3zM1589.2 805.5h1.3v1.3h-1.3zM1616.1 844.6h1.3v1.3h-1.3zM1513.2 845.6h1.3v1.3h-1.3zM1677.0 824.3h1.3v1.3h-1.3zM1539.6 854.1h1.3v1.3h-1.3zM1794.2 728.1h1.3v1.3h-1.3zM1490.6 851.3h1.3v1.3h-1.3zM1669.5 732.0h1.3v1.3h-1.3zM1389.2 735.7h1.3v1.3h-1.3zM1563.2 841.1h1.3v1.3h-1.3zM1475.1 833.3h1.3v1.3h-1.3zM1646.9 762.1h1.3v1.3h-1.3zM1407.3 691.3h1.3v1.3h-1.3zM1713.0 813.6h1.3v1.3h-1.3zM1497.1 866.2h1.3v1.3h-1.3zM1671.7 781.0h1.3v1.3h-1.3zM1644.7 780.5h1.3v1.3h-1.3zM1366.7 722.8h1.3v1.3h-1.3zM1337.8 707.5h1.3v1.3h-1.3zM1582.1 789.5h1.3v1.3h-1.3zM1451.9 792.6h1.3v1.3h-1.3zM1428.1 722.0h1.3v1.3h-1.3zM1720.7 842.6h1.3v1.3h-1.3zM1486.2 858.5h1.3v1.3h-1.3zM1788.6 699.4h1.3v1.3h-1.3zM1676.2 773.0h1.3v1.3h-1.3zM1556.1 748.1h1.3v1.3h-1.3zM1549.8 782.8h1.3v1.3h-1.3zM1410.1 798.6h1.3v1.3h-1.3zM1690.1 817.0h1.3v1.3h-1.3zM1544.4 721.4h1.3v1.3h-1.3zM1553.4 824.0h1.3v1.3h-1.3zM1411.3 723.9h1.3v1.3h-1.3zM1395.9 782.3h1.3v1.3h-1.3zM1665.6 852.3h1.3v1.3h-1.3zM1695.0 817.7h1.3v1.3h-1.3zM1546.9 803.8h1.3v1.3h-1.3zM1579.7 798.3h1.3v1.3h-1.3zM1661.1 868.8h1.3v1.3h-1.3zM1666.9 825.0h1.3v1.3h-1.3zM1557.8 837.9h1.3v1.3h-1.3zM1685.7 853.0h1.3v1.3h-1.3zM1666.0 815.8h1.3v1.3h-1.3zM1555.0 828.8h1.3v1.3h-1.3zM1448.6 821.0h1.3v1.3h-1.3zM1557.5 750.9h1.3v1.3h-1.3zM1486.3 689.9h1.3v1.3h-1.3zM1620.8 805.5h1.3v1.3h-1.3zM1768.3 730.7h1.3v1.3h-1.3zM1527.2 810.6h1.3v1.3h-1.3zM1602.8 809.4h1.3v1.3h-1.3zM1535.9 786.1h1.3v1.3h-1.3zM1622.7 872.0h1.3v1.3h-1.3zM1664.0 817.0h1.3v1.3h-1.3zM1476.9 868.3h1.3v1.3h-1.3zM1660.1 801.2h1.3v1.3h-1.3zM1524.3 735.2h1.3v1.3h-1.3zM1408.4 697.3h1.3v1.3h-1.3zM1406.8 757.1h1.3v1.3h-1.3zM1579.5 789.2h1.3v1.3h-1.3zM1605.3 866.0h1.3v1.3h-1.3zM1621.8 871.1h1.3v1.3h-1.3zM1463.6 837.0h1.3v1.3h-1.3zM1667.9 797.9h1.3v1.3h-1.3zM1779.5 696.3h1.3v1.3h-1.3zM1551.9 717.4h1.3v1.3h-1.3zM1563.4 719.1h1.3v1.3h-1.3zM1427.4 800.5h1.3v1.3h-1.3zM1568.9 861.9h1.3v1.3h-1.3zM1611.9 784.9h1.3v1.3h-1.3zM1482.7 755.3h1.3v1.3h-1.3zM1599.8 808.5h1.3v1.3h-1.3zM1663.5 740.2h1.3v1.3h-1.3zM1358.6 742.5h1.3v1.3h-1.3zM1362.8 733.1h1.3v1.3h-1.3zM1685.8 716.8h1.3v1.3h-1.3zM1733.5 759.8h1.3v1.3h-1.3zM1446.4 825.7h1.3v1.3h-1.3zM1693.3 869.9h1.3v1.3h-1.3zM1564.3 767.0h1.3v1.3h-1.3zM1528.3 867.1h1.3v1.3h-1.3zM1736.7 784.3h1.3v1.3h-1.3zM1572.0 821.0h1.3v1.3h-1.3zM1664.2 868.1h1.3v1.3h-1.3zM1445.7 799.1h1.3v1.3h-1.3zM1563.9 802.9h1.3v1.3h-1.3zM1360.4 725.5h1.3v1.3h-1.3zM1438.4 785.2h1.3v1.3h-1.3zM1639.2 769.5h1.3v1.3h-1.3zM1481.8 771.8h1.3v1.3h-1.3zM1549.5 795.1h1.3v1.3h-1.3zM1592.5 831.1h1.3v1.3h-1.3zM1694.3 871.6h1.3v1.3h-1.3zM1501.9 823.1h1.3v1.3h-1.3zM1620.2 832.3h1.3v1.3h-1.3zM1476.2 754.1h1.3v1.3h-1.3zM1601.5 814.0h1.3v1.3h-1.3zM1624.3 796.9h1.3v1.3h-1.3zM1489.3 826.6h1.3v1.3h-1.3zM1782.3 733.8h1.3v1.3h-1.3zM1683.9 856.5h1.3v1.3h-1.3zM1338.7 695.3h1.3v1.3h-1.3zM1535.5 737.9h1.3v1.3h-1.3zM1444.2 802.7h1.3v1.3h-1.3zM1421.5 787.7h1.3v1.3h-1.3zM1650.1 703.9h1.3v1.3h-1.3zM1623.9 789.3h1.3v1.3h-1.3zM1562.7 756.7h1.3v1.3h-1.3zM1495.1 726.8h1.3v1.3h-1.3zM1685.3 825.0h1.3v1.3h-1.3zM1373.5 701.7h1.3v1.3h-1.3zM1619.7 836.9h1.3v1.3h-1.3zM1498.0 829.5h1.3v1.3h-1.3zM1477.1 766.1h1.3v1.3h-1.3zM1547.0 837.0h1.3v1.3h-1.3zM1741.3 808.3h1.3v1.3h-1.3zM1590.8 747.9h1.3v1.3h-1.3zM1710.2 825.3h1.3v1.3h-1.3zM1521.4 766.7h1.3v1.3h-1.3zM1355.9 702.4h1.3v1.3h-1.3zM1571.8 791.8h1.3v1.3h-1.3zM1516.2 814.1h1.3v1.3h-1.3zM1458.4 830.7h1.3v1.3h-1.3zM1640.9 727.2h1.3v1.3h-1.3zM1465.7 703.0h1.3v1.3h-1.3zM1641.9 821.4h1.3v1.3h-1.3zM1412.7 740.1h1.3v1.3h-1.3zM1665.0 753.8h1.3v1.3h-1.3zM1413.2 755.4h1.3v1.3h-1.3zM1603.2 818.5h1.3v1.3h-1.3zM1699.1 857.0h1.3v1.3h-1.3zM1571.6 856.1h1.3v1.3h-1.3zM1528.2 835.8h1.3v1.3h-1.3zM1527.0 746.4h1.3v1.3h-1.3zM1686.3 860.0h1.3v1.3h-1.3zM1506.0 733.7h1.3v1.3h-1.3zM1514.8 755.3h1.3v1.3h-1.3zM1526.7 760.8h1.3v1.3h-1.3zM1595.8 723.9h1.3v1.3h-1.3zM1595.7 834.7h1.3v1.3h-1.3zM1602.6 841.9h1.3v1.3h-1.3zM1686.9 720.5h1.3v1.3h-1.3zM1528.7 850.1h1.3v1.3h-1.3zM1569.2 692.1h1.3v1.3h-1.3zM1601.0 788.1h1.3v1.3h-1.3zM1625.3 865.8h1.3v1.3h-1.3zM1459.3 836.0h1.3v1.3h-1.3zM1680.6 788.6h1.3v1.3h-1.3zM1356.0 703.5h1.3v1.3h-1.3zM1704.4 823.6h1.3v1.3h-1.3zM1629.3 703.6h1.3v1.3h-1.3zM1682.1 714.5h1.3v1.3h-1.3zM1495.3 807.4h1.3v1.3h-1.3zM1687.8 728.6h1.3v1.3h-1.3zM1673.4 784.0h1.3v1.3h-1.3zM1506.4 760.6h1.3v1.3h-1.3zM1630.3 866.2h1.3v1.3h-1.3zM1589.1 778.8h1.3v1.3h-1.3zM1646.4 820.7h1.3v1.3h-1.3zM1564.7 856.4h1.3v1.3h-1.3zM1631.6 840.0h1.3v1.3h-1.3zM1669.0 845.0h1.3v1.3h-1.3zM1693.2 841.4h1.3v1.3h-1.3zM1622.7 864.2h1.3v1.3h-1.3zM1653.2 784.4h1.3v1.3h-1.3zM1561.7 835.6h1.3v1.3h-1.3zM1432.3 765.4h1.3v1.3h-1.3zM1732.0 824.4h1.3v1.3h-1.3zM1435.2 757.1h1.3v1.3h-1.3zM1532.0 725.6h1.3v1.3h-1.3zM1773.3 741.7h1.3v1.3h-1.3zM1466.1 698.9h1.3v1.3h-1.3zM1635.8 709.1h1.3v1.3h-1.3zM1488.9 830.8h1.3v1.3h-1.3zM1541.7 699.5h1.3v1.3h-1.3zM1721.1 795.5h1.3v1.3h-1.3zM1362.6 694.7h1.3v1.3h-1.3zM1434.3 722.0h1.3v1.3h-1.3zM1665.4 731.3h1.3v1.3h-1.3zM1482.2 797.4h1.3v1.3h-1.3zM1464.0 722.0h1.3v1.3h-1.3zM1686.4 719.7h1.3v1.3h-1.3zM1590.4 745.4h1.3v1.3h-1.3zM1578.8 838.4h1.3v1.3h-1.3zM1547.2 856.2h1.3v1.3h-1.3zM1741.5 788.7h1.3v1.3h-1.3zM1468.9 776.8h1.3v1.3h-1.3zM1787.8 697.1h1.3v1.3h-1.3zM1551.1 835.5h1.3v1.3h-1.3zM1581.9 785.1h1.3v1.3h-1.3zM1784.1 738.5h1.3v1.3h-1.3zM1493.6 809.0h1.3v1.3h-1.3zM1546.7 690.0h1.3v1.3h-1.3zM1693.6 756.4h1.3v1.3h-1.3zM1614.7 819.2h1.3v1.3h-1.3zM1402.7 716.9h1.3v1.3h-1.3zM1467.5 747.2h1.3v1.3h-1.3zM1590.5 847.9h1.3v1.3h-1.3zM1744.4 805.2h1.3v1.3h-1.3zM1583.6 737.0h1.3v1.3h-1.3zM1693.5 715.7h1.3v1.3h-1.3zM1673.9 843.7h1.3v1.3h-1.3zM1449.0 703.2h1.3v1.3h-1.3zM1456.0 819.8h1.3v1.3h-1.3zM1562.7 776.3h1.3v1.3h-1.3zM1609.7 863.8h1.3v1.3h-1.3zM1532.5 845.8h1.3v1.3h-1.3zM1559.6 833.2h1.3v1.3h-1.3zM1483.6 856.7h1.3v1.3h-1.3zM1503.2 840.0h1.3v1.3h-1.3zM1585.8 788.0h1.3v1.3h-1.3zM1488.5 745.3h1.3v1.3h-1.3zM1466.2 702.0h1.3v1.3h-1.3zM1656.9 774.0h1.3v1.3h-1.3zM1648.8 754.2h1.3v1.3h-1.3zM1512.0 707.5h1.3v1.3h-1.3zM1754.1 773.0h1.3v1.3h-1.3zM1628.0 840.7h1.3v1.3h-1.3zM1497.5 690.3h1.3v1.3h-1.3zM1499.1 818.6h1.3v1.3h-1.3zM1562.2 791.8h1.3v1.3h-1.3zM1814.5 689.9h1.3v1.3h-1.3zM1499.6 835.1h1.3v1.3h-1.3zM1507.2 801.4h1.3v1.3h-1.3zM1587.9 757.2h1.3v1.3h-1.3zM1498.9 742.9h1.3v1.3h-1.3zM1639.7 760.2h1.3v1.3h-1.3zM1434.6 735.2h1.3v1.3h-1.3zM1529.6 822.6h1.3v1.3h-1.3zM1603.8 861.9h1.3v1.3h-1.3zM1529.7 821.2h1.3v1.3h-1.3zM1470.7 840.1h1.3v1.3h-1.3zM1370.7 713.9h1.3v1.3h-1.3zM1647.8 812.7h1.3v1.3h-1.3zM1520.2 721.1h1.3v1.3h-1.3zM1610.9 842.0h1.3v1.3h-1.3zM1428.4 704.6h1.3v1.3h-1.3zM1387.1 716.9h1.3v1.3h-1.3zM1401.0 762.9h1.3v1.3h-1.3zM1569.2 857.4h1.3v1.3h-1.3zM1630.2 782.1h1.3v1.3h-1.3zM1678.6 829.1h1.3v1.3h-1.3zM1503.2 759.0h1.3v1.3h-1.3zM1378.9 763.8h1.3v1.3h-1.3zM1652.9 761.7h1.3v1.3h-1.3zM1657.6 868.7h1.3v1.3h-1.3zM1615.6 809.5h1.3v1.3h-1.3zM1474.2 691.4h1.3v1.3h-1.3zM1633.9 751.0h1.3v1.3h-1.3zM1503.9 707.6h1.3v1.3h-1.3zM1682.8 781.7h1.3v1.3h-1.3zM1616.1 839.8h1.3v1.3h-1.3zM1691.3 717.1h1.3v1.3h-1.3zM1599.6 854.2h1.3v1.3h-1.3zM1571.1 752.9h1.3v1.3h-1.3zM1666.7 714.1h1.3v1.3h-1.3zM1593.4 869.6h1.3v1.3h-1.3zM1686.4 819.6h1.3v1.3h-1.3zM1771.9 724.3h1.3v1.3h-1.3zM1477.0 803.4h1.3v1.3h-1.3zM1436.5 703.3h1.3v1.3h-1.3zM1647.0 794.1h1.3v1.3h-1.3zM1555.8 754.5h1.3v1.3h-1.3zM1793.0 710.8h1.3v1.3h-1.3zM1598.5 788.0h1.3v1.3h-1.3zM1492.9 791.1h1.3v1.3h-1.3zM1713.4 855.3h1.3v1.3h-1.3zM1613.3 838.4h1.3v1.3h-1.3zM1600.7 732.3h1.3v1.3h-1.3zM1497.3 840.9h1.3v1.3h-1.3zM1423.8 788.8h1.3v1.3h-1.3zM1398.4 693.9h1.3v1.3h-1.3zM1692.3 869.6h1.3v1.3h-1.3zM1516.7 809.1h1.3v1.3h-1.3zM1657.6 811.5h1.3v1.3h-1.3zM1609.3 758.2h1.3v1.3h-1.3zM1445.6 835.9h1.3v1.3h-1.3zM1551.6 724.7h1.3v1.3h-1.3zM1510.4 714.3h1.3v1.3h-1.3zM1461.7 792.8h1.3v1.3h-1.3zM1488.7 783.6h1.3v1.3h-1.3zM1517.7 792.5h1.3v1.3h-1.3zM1425.3 806.1h1.3v1.3h-1.3zM1464.8 811.5h1.3v1.3h-1.3zM1613.0 864.5h1.3v1.3h-1.3zM1540.4 774.5h1.3v1.3h-1.3zM1643.0 802.8h1.3v1.3h-1.3zM1658.4 827.5h1.3v1.3h-1.3zM1762.1 777.4h1.3v1.3h-1.3zM1683.5 842.2h1.3v1.3h-1.3zM1546.1 763.3h1.3v1.3h-1.3zM1721.2 792.1h1.3v1.3h-1.3zM1585.2 784.8h1.3v1.3h-1.3zM1732.6 767.5h1.3v1.3h-1.3zM1380.1 747.0h1.3v1.3h-1.3zM1705.7 821.5h1.3v1.3h-1.3zM1612.1 822.7h1.3v1.3h-1.3zM1523.8 826.3h1.3v1.3h-1.3zM1428.5 797.2h1.3v1.3h-1.3zM1538.6 710.9h1.3v1.3h-1.3zM1536.7 780.5h1.3v1.3h-1.3zM1660.3 697.6h1.3v1.3h-1.3zM1480.3 784.8h1.3v1.3h-1.3zM1524.6 744.4h1.3v1.3h-1.3zM1372.9 731.4h1.3v1.3h-1.3zM1706.6 855.7h1.3v1.3h-1.3zM1699.8 810.5h1.3v1.3h-1.3zM1694.2 765.5h1.3v1.3h-1.3zM1679.2 728.8h1.3v1.3h-1.3zM1720.5 792.3h1.3v1.3h-1.3zM1706.8 706.1h1.3v1.3h-1.3zM1582.3 710.8h1.3v1.3h-1.3zM1466.6 863.0h1.3v1.3h-1.3zM1477.7 732.9h1.3v1.3h-1.3zM1384.1 747.8h1.3v1.3h-1.3zM1669.0 852.7h1.3v1.3h-1.3zM1514.2 761.1h1.3v1.3h-1.3zM1418.9 795.7h1.3v1.3h-1.3zM1568.9 744.6h1.3v1.3h-1.3zM1706.9 859.8h1.3v1.3h-1.3zM1462.2 775.0h1.3v1.3h-1.3zM1507.8 853.0h1.3v1.3h-1.3zM1544.8 842.2h1.3v1.3h-1.3zM1449.0 774.9h1.3v1.3h-1.3zM1717.6 849.9h1.3v1.3h-1.3zM1627.4 725.2h1.3v1.3h-1.3zM1363.2 697.2h1.3v1.3h-1.3zM1524.1 821.5h1.3v1.3h-1.3zM1682.7 853.7h1.3v1.3h-1.3zM1467.3 819.2h1.3v1.3h-1.3zM1720.2 816.1h1.3v1.3h-1.3zM1409.3 769.9h1.3v1.3h-1.3zM1479.4 729.1h1.3v1.3h-1.3zM1486.3 818.7h1.3v1.3h-1.3zM1442.4 721.3h1.3v1.3h-1.3zM1675.1 810.3h1.3v1.3h-1.3zM1638.1 756.5h1.3v1.3h-1.3zM1610.3 850.7h1.3v1.3h-1.3zM1477.1 730.1h1.3v1.3h-1.3zM1629.8 858.5h1.3v1.3h-1.3zM1630.1 738.9h1.3v1.3h-1.3zM1801.3 704.6h1.3v1.3h-1.3zM1584.6 769.0h1.3v1.3h-1.3zM1409.9 785.7h1.3v1.3h-1.3zM1503.7 798.3h1.3v1.3h-1.3zM1703.3 734.2h1.3v1.3h-1.3zM1457.0 704.0h1.3v1.3h-1.3zM1506.4 827.0h1.3v1.3h-1.3zM1589.8 739.4h1.3v1.3h-1.3zM1480.7 869.7h1.3v1.3h-1.3zM1670.7 772.9h1.3v1.3h-1.3zM1746.9 758.8h1.3v1.3h-1.3zM1455.4 780.0h1.3v1.3h-1.3zM1628.8 790.3h1.3v1.3h-1.3zM1636.8 754.2h1.3v1.3h-1.3zM1588.5 832.1h1.3v1.3h-1.3zM1704.2 781.0h1.3v1.3h-1.3zM1587.3 813.9h1.3v1.3h-1.3zM1509.0 863.1h1.3v1.3h-1.3zM1485.2 831.5h1.3v1.3h-1.3zM1487.6 799.9h1.3v1.3h-1.3zM1680.4 769.0h1.3v1.3h-1.3zM1668.6 832.7h1.3v1.3h-1.3zM1562.6 731.4h1.3v1.3h-1.3zM1603.5 728.7h1.3v1.3h-1.3zM1401.1 779.8h1.3v1.3h-1.3zM1652.5 797.8h1.3v1.3h-1.3zM1709.2 793.4h1.3v1.3h-1.3zM1403.2 721.1h1.3v1.3h-1.3zM1559.0 691.3h1.3v1.3h-1.3zM1550.4 768.0h1.3v1.3h-1.3zM1700.5 736.4h1.3v1.3h-1.3zM1592.6 792.7h1.3v1.3h-1.3zM1507.8 833.7h1.3v1.3h-1.3zM1474.7 714.9h1.3v1.3h-1.3zM1467.7 695.8h1.3v1.3h-1.3zM1587.5 802.3h1.3v1.3h-1.3zM1607.6 736.7h1.3v1.3h-1.3zM1450.5 719.6h1.3v1.3h-1.3zM1655.4 717.4h1.3v1.3h-1.3zM1665.0 840.9h1.3v1.3h-1.3zM1517.5 699.3h1.3v1.3h-1.3zM1453.9 755.1h1.3v1.3h-1.3zM1479.9 866.6h1.3v1.3h-1.3zM1673.6 778.1h1.3v1.3h-1.3zM1506.4 869.5h1.3v1.3h-1.3zM1668.8 771.8h1.3v1.3h-1.3zM1430.0 695.2h1.3v1.3h-1.3zM1492.9 851.8h1.3v1.3h-1.3zM1490.2 760.3h1.3v1.3h-1.3zM1405.2 766.1h1.3v1.3h-1.3zM1814.1 694.3h1.3v1.3h-1.3zM1652.9 828.4h1.3v1.3h-1.3zM1455.6 730.3h1.3v1.3h-1.3zM1483.9 789.5h1.3v1.3h-1.3zM1740.9 772.9h1.3v1.3h-1.3zM1503.8 755.0h1.3v1.3h-1.3zM1615.6 868.5h1.3v1.3h-1.3zM1512.5 695.3h1.3v1.3h-1.3zM1433.4 807.6h1.3v1.3h-1.3zM1652.4 751.1h1.3v1.3h-1.3z" fill="#9a9a9a"/><path d="M1616.5 661.6h1.4v1.2h-1.4zM1492.9 674.7h1.4v1.2h-1.4zM1489.9 671.5h1.4v1.2h-1.4zM1446.4 648.9h1.4v1.2h-1.4zM1438.1 659.4h1.4v1.2h-1.4zM1446.2 655.2h1.4v1.2h-1.4zM1470.8 654.1h1.4v1.2h-1.4zM1437.7 644.5h1.4v1.2h-1.4zM1590.6 668.5h1.4v1.2h-1.4zM1474.4 650.8h1.4v1.2h-1.4zM1411.8 676.8h1.4v1.2h-1.4zM1475.2 671.0h1.4v1.2h-1.4zM1493.2 643.2h1.4v1.2h-1.4zM1471.8 652.9h1.4v1.2h-1.4zM1580.1 665.5h1.4v1.2h-1.4zM1428.6 641.5h1.4v1.2h-1.4zM1463.5 668.0h1.4v1.2h-1.4zM1496.2 650.9h1.4v1.2h-1.4zM1466.5 648.8h1.4v1.2h-1.4zM1538.3 673.0h1.4v1.2h-1.4zM1446.6 666.7h1.4v1.2h-1.4zM1502.1 651.3h1.4v1.2h-1.4zM1476.0 656.7h1.4v1.2h-1.4zM1495.4 655.6h1.4v1.2h-1.4zM1433.7 665.5h1.4v1.2h-1.4zM1479.6 652.8h1.4v1.2h-1.4zM1429.5 661.2h1.4v1.2h-1.4zM1573.8 659.6h1.4v1.2h-1.4zM1492.5 649.8h1.4v1.2h-1.4zM1475.3 644.0h1.4v1.2h-1.4zM1623.6 660.3h1.4v1.2h-1.4zM1458.6 665.6h1.4v1.2h-1.4zM1438.7 655.3h1.4v1.2h-1.4zM1485.0 660.8h1.4v1.2h-1.4zM1636.9 671.0h1.4v1.2h-1.4zM1554.4 663.2h1.4v1.2h-1.4zM1497.7 652.5h1.4v1.2h-1.4zM1462.4 674.0h1.4v1.2h-1.4zM1425.6 657.2h1.4v1.2h-1.4zM1470.9 649.6h1.4v1.2h-1.4zM1440.4 642.7h1.4v1.2h-1.4zM1493.2 643.3h1.4v1.2h-1.4zM1519.3 664.7h1.4v1.2h-1.4zM1533.6 663.3h1.4v1.2h-1.4zM1536.9 674.1h1.4v1.2h-1.4zM1480.8 677.0h1.4v1.2h-1.4zM1472.1 668.1h1.4v1.2h-1.4zM1572.2 666.6h1.4v1.2h-1.4zM1431.8 663.2h1.4v1.2h-1.4zM1518.6 660.2h1.4v1.2h-1.4zM1486.8 645.7h1.4v1.2h-1.4zM1452.1 643.8h1.4v1.2h-1.4zM1416.8 667.5h1.4v1.2h-1.4zM1419.5 654.3h1.4v1.2h-1.4zM1432.6 676.0h1.4v1.2h-1.4zM1456.5 657.2h1.4v1.2h-1.4zM1477.5 670.4h1.4v1.2h-1.4zM1575.2 663.3h1.4v1.2h-1.4zM1607.7 672.6h1.4v1.2h-1.4zM1422.8 650.4h1.4v1.2h-1.4zM1402.8 668.0h1.4v1.2h-1.4zM1464.9 668.9h1.4v1.2h-1.4zM1532.2 656.0h1.4v1.2h-1.4zM1487.8 646.9h1.4v1.2h-1.4zM1464.3 651.2h1.4v1.2h-1.4zM1551.9 670.7h1.4v1.2h-1.4zM1571.8 659.3h1.4v1.2h-1.4zM1449.6 655.9h1.4v1.2h-1.4zM1485.9 644.3h1.4v1.2h-1.4zM1443.0 676.0h1.4v1.2h-1.4zM1516.9 652.4h1.4v1.2h-1.4zM1562.1 663.3h1.4v1.2h-1.4zM1506.1 674.3h1.4v1.2h-1.4zM1484.0 670.1h1.4v1.2h-1.4zM1471.2 657.6h1.4v1.2h-1.4zM1528.1 673.0h1.4v1.2h-1.4zM1597.6 669.1h1.4v1.2h-1.4zM1494.6 672.7h1.4v1.2h-1.4zM1606.8 670.8h1.4v1.2h-1.4zM1491.8 650.1h1.4v1.2h-1.4zM1562.1 673.1h1.4v1.2h-1.4zM1485.5 664.1h1.4v1.2h-1.4zM1482.8 645.4h1.4v1.2h-1.4zM1414.7 648.3h1.4v1.2h-1.4zM1584.7 659.3h1.4v1.2h-1.4zM1481.8 653.3h1.4v1.2h-1.4zM1495.7 647.6h1.4v1.2h-1.4zM1443.6 676.7h1.4v1.2h-1.4zM1474.1 670.1h1.4v1.2h-1.4zM1447.5 652.1h1.4v1.2h-1.4zM1461.6 666.1h1.4v1.2h-1.4zM1438.1 649.4h1.4v1.2h-1.4zM1614.4 663.6h1.4v1.2h-1.4zM1522.3 660.4h1.4v1.2h-1.4zM1419.9 674.5h1.4v1.2h-1.4zM1490.8 642.8h1.4v1.2h-1.4zM1547.4 660.7h1.4v1.2h-1.4zM1545.5 661.8h1.4v1.2h-1.4zM1495.3 676.0h1.4v1.2h-1.4zM1518.7 643.0h1.4v1.2h-1.4zM1610.1 664.6h1.4v1.2h-1.4zM1618.0 667.9h1.4v1.2h-1.4zM1455.7 672.9h1.4v1.2h-1.4zM1509.0 658.8h1.4v1.2h-1.4zM1463.3 664.4h1.4v1.2h-1.4zM1409.3 659.7h1.4v1.2h-1.4zM1453.4 672.5h1.4v1.2h-1.4zM1614.0 671.0h1.4v1.2h-1.4zM1491.8 675.1h1.4v1.2h-1.4zM1444.2 663.6h1.4v1.2h-1.4zM1619.7 668.7h1.4v1.2h-1.4zM1441.6 665.6h1.4v1.2h-1.4zM1479.0 647.2h1.4v1.2h-1.4zM1548.0 667.0h1.4v1.2h-1.4zM1423.8 636.8h1.4v1.2h-1.4zM1471.3 652.1h1.4v1.2h-1.4zM1428.3 663.7h1.4v1.2h-1.4zM1501.3 673.5h1.4v1.2h-1.4zM1497.2 654.6h1.4v1.2h-1.4zM1480.7 667.5h1.4v1.2h-1.4zM1451.6 661.0h1.4v1.2h-1.4zM1464.6 676.3h1.4v1.2h-1.4zM1465.1 675.3h1.4v1.2h-1.4zM1584.7 662.1h1.4v1.2h-1.4zM1499.8 645.5h1.4v1.2h-1.4zM1466.8 667.0h1.4v1.2h-1.4zM1500.2 648.6h1.4v1.2h-1.4zM1544.8 659.3h1.4v1.2h-1.4zM1416.1 677.5h1.4v1.2h-1.4zM1413.2 649.8h1.4v1.2h-1.4zM1488.1 668.5h1.4v1.2h-1.4zM1512.9 649.7h1.4v1.2h-1.4zM1511.8 647.3h1.4v1.2h-1.4zM1565.8 662.4h1.4v1.2h-1.4zM1607.1 664.7h1.4v1.2h-1.4zM1495.1 665.0h1.4v1.2h-1.4zM1444.9 650.1h1.4v1.2h-1.4zM1427.5 651.4h1.4v1.2h-1.4zM1433.7 664.6h1.4v1.2h-1.4zM1553.2 669.5h1.4v1.2h-1.4zM1456.4 673.1h1.4v1.2h-1.4zM1581.5 671.2h1.4v1.2h-1.4zM1421.4 655.2h1.4v1.2h-1.4zM1394.1 675.6h1.4v1.2h-1.4zM1530.4 658.6h1.4v1.2h-1.4zM1419.1 671.9h1.4v1.2h-1.4zM1469.0 657.2h1.4v1.2h-1.4zM1422.6 660.4h1.4v1.2h-1.4zM1424.0 635.4h1.4v1.2h-1.4zM1524.2 646.1h1.4v1.2h-1.4zM1447.0 654.3h1.4v1.2h-1.4zM1496.5 662.7h1.4v1.2h-1.4zM1430.3 673.5h1.4v1.2h-1.4zM1582.4 667.9h1.4v1.2h-1.4zM1431.0 658.5h1.4v1.2h-1.4zM1558.5 675.0h1.4v1.2h-1.4zM1419.3 678.7h1.4v1.2h-1.4zM1476.1 656.3h1.4v1.2h-1.4zM1493.3 646.4h1.4v1.2h-1.4zM1486.4 653.2h1.4v1.2h-1.4zM1514.9 649.5h1.4v1.2h-1.4zM1502.8 654.3h1.4v1.2h-1.4zM1403.0 674.4h1.4v1.2h-1.4zM1533.5 651.6h1.4v1.2h-1.4zM1487.4 647.2h1.4v1.2h-1.4zM1516.8 642.8h1.4v1.2h-1.4zM1485.8 662.0h1.4v1.2h-1.4zM1486.7 646.5h1.4v1.2h-1.4zM1549.6 661.5h1.4v1.2h-1.4zM1472.6 656.7h1.4v1.2h-1.4zM1525.2 670.1h1.4v1.2h-1.4zM1456.0 644.9h1.4v1.2h-1.4zM1464.9 666.2h1.4v1.2h-1.4zM1473.1 673.5h1.4v1.2h-1.4zM1596.5 664.3h1.4v1.2h-1.4zM1404.9 670.6h1.4v1.2h-1.4zM1634.8 670.0h1.4v1.2h-1.4zM1507.3 653.6h1.4v1.2h-1.4zM1420.4 674.3h1.4v1.2h-1.4zM1564.6 659.4h1.4v1.2h-1.4zM1445.3 652.4h1.4v1.2h-1.4zM1530.5 674.5h1.4v1.2h-1.4zM1422.3 676.3h1.4v1.2h-1.4zM1503.2 650.5h1.4v1.2h-1.4zM1519.3 666.7h1.4v1.2h-1.4zM1491.7 671.4h1.4v1.2h-1.4zM1417.6 669.5h1.4v1.2h-1.4zM1433.6 661.3h1.4v1.2h-1.4zM1443.0 648.8h1.4v1.2h-1.4zM1432.9 649.0h1.4v1.2h-1.4zM1491.8 660.7h1.4v1.2h-1.4zM1458.5 668.9h1.4v1.2h-1.4zM1406.8 673.8h1.4v1.2h-1.4zM1488.9 668.1h1.4v1.2h-1.4zM1503.4 663.0h1.4v1.2h-1.4zM1517.5 642.9h1.4v1.2h-1.4zM1470.3 675.0h1.4v1.2h-1.4zM1399.2 667.2h1.4v1.2h-1.4zM1538.8 659.5h1.4v1.2h-1.4zM1639.1 670.7h1.4v1.2h-1.4zM1442.2 658.7h1.4v1.2h-1.4zM1590.4 661.2h1.4v1.2h-1.4zM1639.2 668.3h1.4v1.2h-1.4zM1466.2 675.5h1.4v1.2h-1.4zM1466.8 644.0h1.4v1.2h-1.4zM1424.5 656.1h1.4v1.2h-1.4zM1461.4 645.7h1.4v1.2h-1.4zM1462.7 657.3h1.4v1.2h-1.4zM1549.7 659.1h1.4v1.2h-1.4zM1404.2 679.6h1.4v1.2h-1.4zM1485.0 671.8h1.4v1.2h-1.4zM1451.2 654.4h1.4v1.2h-1.4zM1487.1 668.8h1.4v1.2h-1.4zM1418.9 679.8h1.4v1.2h-1.4zM1614.1 671.7h1.4v1.2h-1.4zM1528.0 649.3h1.4v1.2h-1.4zM1517.6 659.9h1.4v1.2h-1.4zM1425.3 646.4h1.4v1.2h-1.4zM1477.9 667.4h1.4v1.2h-1.4zM1544.8 666.5h1.4v1.2h-1.4zM1550.5 662.8h1.4v1.2h-1.4zM1607.4 666.7h1.4v1.2h-1.4zM1526.2 661.0h1.4v1.2h-1.4zM1588.4 672.9h1.4v1.2h-1.4zM1477.9 648.9h1.4v1.2h-1.4zM1393.9 670.9h1.4v1.2h-1.4zM1458.7 661.3h1.4v1.2h-1.4zM1527.8 648.3h1.4v1.2h-1.4zM1451.4 676.8h1.4v1.2h-1.4zM1456.4 655.8h1.4v1.2h-1.4zM1452.4 664.9h1.4v1.2h-1.4zM1458.2 658.0h1.4v1.2h-1.4zM1456.8 676.5h1.4v1.2h-1.4zM1438.3 642.9h1.4v1.2h-1.4zM1469.0 648.0h1.4v1.2h-1.4zM1580.3 665.9h1.4v1.2h-1.4zM1597.1 659.0h1.4v1.2h-1.4zM1410.6 670.6h1.4v1.2h-1.4zM1487.1 649.4h1.4v1.2h-1.4zM1596.9 671.6h1.4v1.2h-1.4zM1478.6 672.0h1.4v1.2h-1.4zM1489.4 645.8h1.4v1.2h-1.4zM1545.4 669.4h1.4v1.2h-1.4zM1514.7 673.5h1.4v1.2h-1.4zM1443.9 676.6h1.4v1.2h-1.4zM1427.1 668.0h1.4v1.2h-1.4zM1425.6 666.2h1.4v1.2h-1.4zM1621.2 668.7h1.4v1.2h-1.4zM1422.2 658.3h1.4v1.2h-1.4zM1531.6 660.4h1.4v1.2h-1.4zM1471.1 670.4h1.4v1.2h-1.4zM1432.0 648.0h1.4v1.2h-1.4zM1510.5 662.2h1.4v1.2h-1.4zM1440.0 680.0h1.4v1.2h-1.4zM1435.3 669.2h1.4v1.2h-1.4zM1447.6 672.5h1.4v1.2h-1.4zM1520.8 664.8h1.4v1.2h-1.4zM1513.9 663.3h1.4v1.2h-1.4zM1473.1 649.4h1.4v1.2h-1.4zM1621.6 661.1h1.4v1.2h-1.4zM1499.2 659.0h1.4v1.2h-1.4zM1510.6 648.1h1.4v1.2h-1.4zM1415.4 666.6h1.4v1.2h-1.4zM1480.9 660.0h1.4v1.2h-1.4zM1524.7 650.6h1.4v1.2h-1.4zM1460.5 660.7h1.4v1.2h-1.4zM1413.6 656.7h1.4v1.2h-1.4zM1516.2 664.2h1.4v1.2h-1.4zM1607.2 672.4h1.4v1.2h-1.4zM1456.7 677.9h1.4v1.2h-1.4zM1522.0 653.0h1.4v1.2h-1.4zM1518.3 655.9h1.4v1.2h-1.4zM1466.1 674.6h1.4v1.2h-1.4zM1521.8 648.7h1.4v1.2h-1.4zM1608.5 672.7h1.4v1.2h-1.4zM1569.5 672.4h1.4v1.2h-1.4zM1576.5 673.0h1.4v1.2h-1.4zM1454.0 678.7h1.4v1.2h-1.4zM1479.9 672.1h1.4v1.2h-1.4zM1634.3 664.4h1.4v1.2h-1.4zM1406.9 665.6h1.4v1.2h-1.4zM1438.7 667.0h1.4v1.2h-1.4zM1617.3 670.9h1.4v1.2h-1.4zM1490.7 649.2h1.4v1.2h-1.4zM1561.2 671.2h1.4v1.2h-1.4zM1472.8 645.0h1.4v1.2h-1.4zM1439.1 664.6h1.4v1.2h-1.4zM1642.2 671.2h1.4v1.2h-1.4zM1477.3 645.4h1.4v1.2h-1.4zM1526.9 656.2h1.4v1.2h-1.4zM1399.3 675.8h1.4v1.2h-1.4zM1530.3 655.5h1.4v1.2h-1.4zM1442.2 661.1h1.4v1.2h-1.4zM1453.2 647.9h1.4v1.2h-1.4zM1483.1 658.3h1.4v1.2h-1.4zM1498.6 652.0h1.4v1.2h-1.4zM1451.7 655.5h1.4v1.2h-1.4zM1503.4 666.5h1.4v1.2h-1.4zM1589.8 659.7h1.4v1.2h-1.4zM1429.4 659.5h1.4v1.2h-1.4zM1461.4 668.3h1.4v1.2h-1.4zM1590.9 664.6h1.4v1.2h-1.4zM1423.5 653.0h1.4v1.2h-1.4zM1540.2 669.6h1.4v1.2h-1.4zM1495.6 664.7h1.4v1.2h-1.4zM1568.5 662.9h1.4v1.2h-1.4zM1402.2 667.8h1.4v1.2h-1.4zM1423.7 633.7h1.4v1.2h-1.4zM1409.1 651.2h1.4v1.2h-1.4zM1517.5 661.4h1.4v1.2h-1.4zM1447.9 675.9h1.4v1.2h-1.4zM1523.3 652.2h1.4v1.2h-1.4zM1494.5 677.0h1.4v1.2h-1.4zM1457.4 672.0h1.4v1.2h-1.4zM1485.8 653.6h1.4v1.2h-1.4zM1508.7 647.2h1.4v1.2h-1.4zM1469.6 671.1h1.4v1.2h-1.4zM1509.2 655.5h1.4v1.2h-1.4zM1488.5 677.6h1.4v1.2h-1.4zM1495.2 665.8h1.4v1.2h-1.4zM1561.8 665.7h1.4v1.2h-1.4zM1504.0 664.9h1.4v1.2h-1.4zM1449.2 671.0h1.4v1.2h-1.4zM1479.5 667.9h1.4v1.2h-1.4zM1441.5 678.4h1.4v1.2h-1.4zM1492.5 661.6h1.4v1.2h-1.4zM1576.6 670.5h1.4v1.2h-1.4zM1585.6 661.0h1.4v1.2h-1.4zM1455.9 667.6h1.4v1.2h-1.4zM1537.1 659.2h1.4v1.2h-1.4zM1461.9 660.4h1.4v1.2h-1.4zM1528.4 656.6h1.4v1.2h-1.4zM1433.8 663.4h1.4v1.2h-1.4zM1624.1 665.4h1.4v1.2h-1.4zM1465.8 672.8h1.4v1.2h-1.4zM1482.4 670.4h1.4v1.2h-1.4zM1571.3 666.8h1.4v1.2h-1.4zM1461.7 649.5h1.4v1.2h-1.4zM1488.1 665.1h1.4v1.2h-1.4zM1428.9 647.0h1.4v1.2h-1.4zM1598.0 669.3h1.4v1.2h-1.4zM1459.3 656.3h1.4v1.2h-1.4zM1445.4 667.5h1.4v1.2h-1.4zM1514.2 647.2h1.4v1.2h-1.4zM1505.8 673.1h1.4v1.2h-1.4zM1539.3 662.6h1.4v1.2h-1.4zM1448.4 663.1h1.4v1.2h-1.4zM1429.4 681.1h1.4v1.2h-1.4zM1479.4 653.7h1.4v1.2h-1.4zM1503.0 673.9h1.4v1.2h-1.4zM1629.8 666.1h1.4v1.2h-1.4zM1434.9 649.3h1.4v1.2h-1.4zM1449.3 649.8h1.4v1.2h-1.4zM1449.9 668.3h1.4v1.2h-1.4zM1402.3 667.1h1.4v1.2h-1.4zM1406.4 674.6h1.4v1.2h-1.4zM1532.3 661.2h1.4v1.2h-1.4zM1547.2 675.7h1.4v1.2h-1.4zM1395.5 667.1h1.4v1.2h-1.4zM1436.2 645.0h1.4v1.2h-1.4zM1564.8 667.1h1.4v1.2h-1.4zM1474.5 655.2h1.4v1.2h-1.4zM1465.7 660.1h1.4v1.2h-1.4zM1483.2 649.6h1.4v1.2h-1.4zM1455.2 646.0h1.4v1.2h-1.4zM1471.3 661.7h1.4v1.2h-1.4zM1524.1 647.1h1.4v1.2h-1.4zM1622.4 670.1h1.4v1.2h-1.4zM1553.1 665.2h1.4v1.2h-1.4zM1498.2 651.1h1.4v1.2h-1.4zM1522.1 655.2h1.4v1.2h-1.4zM1528.6 658.6h1.4v1.2h-1.4zM1598.6 663.1h1.4v1.2h-1.4zM1569.1 666.9h1.4v1.2h-1.4zM1494.1 659.6h1.4v1.2h-1.4zM1524.9 646.9h1.4v1.2h-1.4zM1428.8 651.1h1.4v1.2h-1.4zM1504.1 670.5h1.4v1.2h-1.4zM1545.1 661.2h1.4v1.2h-1.4zM1435.4 655.0h1.4v1.2h-1.4zM1625.9 665.9h1.4v1.2h-1.4zM1446.8 654.1h1.4v1.2h-1.4zM1532.4 648.4h1.4v1.2h-1.4zM1541.4 663.7h1.4v1.2h-1.4zM1409.1 670.5h1.4v1.2h-1.4zM1603.4 668.5h1.4v1.2h-1.4zM1399.0 672.4h1.4v1.2h-1.4zM1426.8 641.3h1.4v1.2h-1.4zM1474.2 644.3h1.4v1.2h-1.4zM1556.4 662.9h1.4v1.2h-1.4zM1452.9 645.3h1.4v1.2h-1.4zM1630.4 666.0h1.4v1.2h-1.4zM1452.1 645.9h1.4v1.2h-1.4zM1611.3 667.3h1.4v1.2h-1.4zM1490.6 658.5h1.4v1.2h-1.4zM1437.3 656.9h1.4v1.2h-1.4zM1520.9 670.7h1.4v1.2h-1.4zM1439.7 668.6h1.4v1.2h-1.4zM1410.5 675.9h1.4v1.2h-1.4zM1512.6 674.8h1.4v1.2h-1.4zM1552.3 669.7h1.4v1.2h-1.4zM1589.4 668.5h1.4v1.2h-1.4zM1403.5 673.8h1.4v1.2h-1.4zM1428.7 639.3h1.4v1.2h-1.4zM1611.8 662.2h1.4v1.2h-1.4zM1442.5 664.2h1.4v1.2h-1.4zM1530.3 650.4h1.4v1.2h-1.4zM1429.2 660.4h1.4v1.2h-1.4zM1523.1 651.0h1.4v1.2h-1.4zM1622.6 661.4h1.4v1.2h-1.4zM1492.8 659.0h1.4v1.2h-1.4zM1490.5 667.7h1.4v1.2h-1.4zM1487.5 667.6h1.4v1.2h-1.4zM1464.5 646.1h1.4v1.2h-1.4zM1586.6 671.7h1.4v1.2h-1.4zM1438.7 651.3h1.4v1.2h-1.4zM1613.5 670.7h1.4v1.2h-1.4zM1484.9 662.4h1.4v1.2h-1.4zM1427.7 651.8h1.4v1.2h-1.4zM1474.6 662.4h1.4v1.2h-1.4zM1440.2 654.1h1.4v1.2h-1.4zM1458.8 649.9h1.4v1.2h-1.4zM1516.2 668.5h1.4v1.2h-1.4zM1500.3 647.4h1.4v1.2h-1.4zM1494.1 647.1h1.4v1.2h-1.4zM1443.2 662.9h1.4v1.2h-1.4zM1432.5 632.6h1.4v1.2h-1.4zM1581.4 660.6h1.4v1.2h-1.4zM1606.0 666.4h1.4v1.2h-1.4zM1533.5 675.4h1.4v1.2h-1.4zM1432.3 634.1h1.4v1.2h-1.4zM1548.1 673.8h1.4v1.2h-1.4zM1565.9 668.8h1.4v1.2h-1.4zM1621.6 659.7h1.4v1.2h-1.4zM1542.5 675.8h1.4v1.2h-1.4zM1465.2 671.2h1.4v1.2h-1.4zM1459.0 662.2h1.4v1.2h-1.4zM1523.5 657.4h1.4v1.2h-1.4zM1549.0 666.3h1.4v1.2h-1.4zM1466.0 654.6h1.4v1.2h-1.4zM1522.5 672.7h1.4v1.2h-1.4zM1516.8 651.5h1.4v1.2h-1.4zM1515.7 649.4h1.4v1.2h-1.4zM1429.1 652.9h1.4v1.2h-1.4zM1547.7 670.6h1.4v1.2h-1.4zM1506.5 646.2h1.4v1.2h-1.4zM1486.4 677.1h1.4v1.2h-1.4zM1424.7 637.9h1.4v1.2h-1.4zM1623.3 669.8h1.4v1.2h-1.4zM1406.9 666.0h1.4v1.2h-1.4zM1446.0 654.0h1.4v1.2h-1.4zM1427.7 671.5h1.4v1.2h-1.4zM1626.0 672.0h1.4v1.2h-1.4zM1468.9 678.6h1.4v1.2h-1.4zM1444.6 664.3h1.4v1.2h-1.4zM1409.3 678.9h1.4v1.2h-1.4zM1473.9 668.5h1.4v1.2h-1.4zM1426.7 659.3h1.4v1.2h-1.4zM1455.2 659.6h1.4v1.2h-1.4zM1584.9 670.4h1.4v1.2h-1.4zM1478.2 652.7h1.4v1.2h-1.4zM1572.5 668.7h1.4v1.2h-1.4zM1423.7 667.4h1.4v1.2h-1.4zM1546.7 662.8h1.4v1.2h-1.4zM1591.7 662.5h1.4v1.2h-1.4zM1496.6 664.6h1.4v1.2h-1.4zM1488.1 652.2h1.4v1.2h-1.4zM1485.9 664.5h1.4v1.2h-1.4zM1482.4 649.1h1.4v1.2h-1.4zM1611.9 672.5h1.4v1.2h-1.4zM1567.2 674.8h1.4v1.2h-1.4zM1491.1 664.3h1.4v1.2h-1.4zM1455.8 647.2h1.4v1.2h-1.4zM1416.4 672.4h1.4v1.2h-1.4zM1427.3 664.1h1.4v1.2h-1.4zM1456.7 670.4h1.4v1.2h-1.4zM1449.2 676.5h1.4v1.2h-1.4zM1482.4 655.5h1.4v1.2h-1.4zM1442.8 646.0h1.4v1.2h-1.4zM1501.2 645.3h1.4v1.2h-1.4zM1557.4 672.6h1.4v1.2h-1.4zM1597.5 662.2h1.4v1.2h-1.4zM1617.4 660.7h1.4v1.2h-1.4zM1423.0 672.9h1.4v1.2h-1.4zM1413.6 659.8h1.4v1.2h-1.4zM1588.6 664.5h1.4v1.2h-1.4zM1513.9 671.3h1.4v1.2h-1.4zM1528.9 652.4h1.4v1.2h-1.4zM1525.1 668.0h1.4v1.2h-1.4zM1570.5 660.5h1.4v1.2h-1.4zM1505.0 655.1h1.4v1.2h-1.4zM1611.5 672.7h1.4v1.2h-1.4zM1414.4 676.9h1.4v1.2h-1.4zM1591.4 661.6h1.4v1.2h-1.4zM1511.1 644.2h1.4v1.2h-1.4zM1426.0 641.1h1.4v1.2h-1.4zM1529.6 661.1h1.4v1.2h-1.4zM1390.8 682.3h1.4v1.2h-1.4zM1431.6 673.8h1.4v1.2h-1.4zM1588.1 673.4h1.4v1.2h-1.4zM1450.6 677.7h1.4v1.2h-1.4zM1423.4 649.2h1.4v1.2h-1.4zM1453.2 664.6h1.4v1.2h-1.4zM1578.6 671.3h1.4v1.2h-1.4zM1504.5 654.6h1.4v1.2h-1.4zM1512.6 650.1h1.4v1.2h-1.4zM1509.2 666.5h1.4v1.2h-1.4zM1410.8 653.0h1.4v1.2h-1.4zM1486.6 647.0h1.4v1.2h-1.4zM1425.9 661.6h1.4v1.2h-1.4zM1394.0 670.7h1.4v1.2h-1.4zM1450.5 668.5h1.4v1.2h-1.4zM1439.5 647.2h1.4v1.2h-1.4zM1591.4 669.2h1.4v1.2h-1.4zM1469.3 654.4h1.4v1.2h-1.4zM1483.0 655.4h1.4v1.2h-1.4zM1469.3 653.8h1.4v1.2h-1.4zM1609.9 666.3h1.4v1.2h-1.4zM1443.4 677.6h1.4v1.2h-1.4zM1466.6 652.6h1.4v1.2h-1.4zM1454.3 668.9h1.4v1.2h-1.4zM1479.2 642.7h1.4v1.2h-1.4zM1498.0 659.3h1.4v1.2h-1.4zM1494.8 660.3h1.4v1.2h-1.4zM1518.8 650.5h1.4v1.2h-1.4zM1467.7 646.3h1.4v1.2h-1.4zM1506.3 658.2h1.4v1.2h-1.4zM1595.8 659.8h1.4v1.2h-1.4zM1519.2 648.7h1.4v1.2h-1.4zM1624.2 668.6h1.4v1.2h-1.4zM1529.7 661.0h1.4v1.2h-1.4zM1527.6 673.5h1.4v1.2h-1.4zM1587.0 662.9h1.4v1.2h-1.4zM1433.1 660.1h1.4v1.2h-1.4zM1427.8 670.1h1.4v1.2h-1.4zM1518.1 669.1h1.4v1.2h-1.4zM1470.4 676.8h1.4v1.2h-1.4zM1411.2 667.8h1.4v1.2h-1.4zM1422.5 654.0h1.4v1.2h-1.4zM1461.6 665.8h1.4v1.2h-1.4zM1418.8 648.2h1.4v1.2h-1.4zM1497.5 655.4h1.4v1.2h-1.4zM1504.0 661.9h1.4v1.2h-1.4zM1449.8 643.5h1.4v1.2h-1.4zM1510.5 664.3h1.4v1.2h-1.4zM1444.9 668.9h1.4v1.2h-1.4zM1452.1 643.4h1.4v1.2h-1.4zM1585.7 670.8h1.4v1.2h-1.4zM1523.4 644.9h1.4v1.2h-1.4zM1527.6 665.3h1.4v1.2h-1.4zM1475.0 664.1h1.4v1.2h-1.4zM1445.4 642.6h1.4v1.2h-1.4zM1406.1 668.9h1.4v1.2h-1.4zM1567.0 665.5h1.4v1.2h-1.4zM1625.8 668.5h1.4v1.2h-1.4zM1443.7 654.3h1.4v1.2h-1.4zM1568.3 659.4h1.4v1.2h-1.4zM1494.2 643.6h1.4v1.2h-1.4zM1498.9 667.0h1.4v1.2h-1.4zM1629.2 666.1h1.4v1.2h-1.4zM1395.4 676.0h1.4v1.2h-1.4zM1549.5 668.9h1.4v1.2h-1.4zM1565.0 662.4h1.4v1.2h-1.4zM1551.0 664.1h1.4v1.2h-1.4zM1616.1 662.7h1.4v1.2h-1.4zM1607.6 663.4h1.4v1.2h-1.4zM1613.4 671.1h1.4v1.2h-1.4zM1493.5 645.1h1.4v1.2h-1.4zM1470.0 651.4h1.4v1.2h-1.4zM1422.6 662.0h1.4v1.2h-1.4zM1500.8 672.6h1.4v1.2h-1.4zM1441.3 658.5h1.4v1.2h-1.4zM1469.0 677.5h1.4v1.2h-1.4zM1466.4 656.3h1.4v1.2h-1.4zM1527.3 644.7h1.4v1.2h-1.4zM1481.5 645.6h1.4v1.2h-1.4zM1603.6 670.9h1.4v1.2h-1.4zM1573.6 661.8h1.4v1.2h-1.4zM1617.0 669.4h1.4v1.2h-1.4zM1649.2 671.2h1.4v1.2h-1.4zM1431.3 660.4h1.4v1.2h-1.4zM1553.6 662.3h1.4v1.2h-1.4zM1425.2 681.3h1.4v1.2h-1.4zM1523.7 644.8h1.4v1.2h-1.4zM1408.3 665.7h1.4v1.2h-1.4zM1469.3 662.4h1.4v1.2h-1.4zM1473.8 665.4h1.4v1.2h-1.4zM1456.3 673.7h1.4v1.2h-1.4zM1413.5 661.1h1.4v1.2h-1.4zM1390.3 672.1h1.4v1.2h-1.4zM1405.9 677.0h1.4v1.2h-1.4zM1578.9 667.4h1.4v1.2h-1.4zM1476.3 671.0h1.4v1.2h-1.4zM1527.8 645.2h1.4v1.2h-1.4zM1465.2 677.1h1.4v1.2h-1.4zM1481.6 671.0h1.4v1.2h-1.4zM1390.4 681.0h1.4v1.2h-1.4zM1550.4 663.2h1.4v1.2h-1.4zM1428.6 632.3h1.4v1.2h-1.4zM1519.4 652.7h1.4v1.2h-1.4zM1472.2 673.9h1.4v1.2h-1.4zM1570.0 674.2h1.4v1.2h-1.4zM1486.6 678.2h1.4v1.2h-1.4zM1401.1 676.7h1.4v1.2h-1.4zM1503.5 662.9h1.4v1.2h-1.4zM1505.7 672.9h1.4v1.2h-1.4zM1458.8 673.7h1.4v1.2h-1.4zM1453.9 651.3h1.4v1.2h-1.4zM1442.2 655.9h1.4v1.2h-1.4zM1463.7 659.6h1.4v1.2h-1.4zM1413.5 667.0h1.4v1.2h-1.4zM1421.6 679.5h1.4v1.2h-1.4zM1434.6 668.6h1.4v1.2h-1.4zM1411.9 672.7h1.4v1.2h-1.4zM1420.0 664.3h1.4v1.2h-1.4zM1425.9 637.8h1.4v1.2h-1.4zM1545.6 664.3h1.4v1.2h-1.4zM1425.9 646.6h1.4v1.2h-1.4zM1427.7 656.4h1.4v1.2h-1.4zM1397.4 676.0h1.4v1.2h-1.4zM1568.6 672.9h1.4v1.2h-1.4zM1503.0 676.0h1.4v1.2h-1.4zM1643.8 670.3h1.4v1.2h-1.4zM1461.2 662.9h1.4v1.2h-1.4zM1406.7 666.1h1.4v1.2h-1.4zM1428.2 660.5h1.4v1.2h-1.4zM1411.0 652.6h1.4v1.2h-1.4zM1604.3 669.3h1.4v1.2h-1.4zM1596.7 660.5h1.4v1.2h-1.4zM1606.8 662.6h1.4v1.2h-1.4zM1617.1 659.6h1.4v1.2h-1.4zM1431.8 645.2h1.4v1.2h-1.4zM1610.0 661.3h1.4v1.2h-1.4zM1559.3 663.8h1.4v1.2h-1.4zM1503.1 674.8h1.4v1.2h-1.4zM1397.5 672.9h1.4v1.2h-1.4zM1454.6 662.8h1.4v1.2h-1.4zM1628.9 669.7h1.4v1.2h-1.4zM1463.4 662.4h1.4v1.2h-1.4zM1465.9 670.4h1.4v1.2h-1.4zM1457.6 676.1h1.4v1.2h-1.4zM1416.2 671.3h1.4v1.2h-1.4zM1427.2 670.1h1.4v1.2h-1.4zM1461.5 649.7h1.4v1.2h-1.4zM1553.1 661.1h1.4v1.2h-1.4zM1474.8 650.6h1.4v1.2h-1.4zM1503.7 674.9h1.4v1.2h-1.4zM1533.3 657.8h1.4v1.2h-1.4zM1548.7 659.6h1.4v1.2h-1.4zM1567.7 659.9h1.4v1.2h-1.4zM1422.4 653.7h1.4v1.2h-1.4zM1466.8 660.8h1.4v1.2h-1.4zM1525.8 654.5h1.4v1.2h-1.4zM1436.7 671.9h1.4v1.2h-1.4zM1558.4 662.1h1.4v1.2h-1.4zM1511.6 666.7h1.4v1.2h-1.4zM1446.4 669.0h1.4v1.2h-1.4zM1551.5 659.4h1.4v1.2h-1.4zM1487.6 653.3h1.4v1.2h-1.4zM1582.5 668.3h1.4v1.2h-1.4zM1438.5 680.5h1.4v1.2h-1.4zM1578.3 662.9h1.4v1.2h-1.4zM1584.4 662.3h1.4v1.2h-1.4zM1556.2 659.4h1.4v1.2h-1.4zM1564.8 660.0h1.4v1.2h-1.4zM1413.7 666.0h1.4v1.2h-1.4zM1433.6 657.5h1.4v1.2h-1.4zM1413.3 675.6h1.4v1.2h-1.4zM1391.6 681.7h1.4v1.2h-1.4zM1432.9 649.3h1.4v1.2h-1.4zM1505.6 676.1h1.4v1.2h-1.4zM1419.9 658.9h1.4v1.2h-1.4zM1513.5 659.6h1.4v1.2h-1.4zM1597.6 662.0h1.4v1.2h-1.4zM1533.4 676.0h1.4v1.2h-1.4zM1402.2 664.6h1.4v1.2h-1.4zM1517.7 645.8h1.4v1.2h-1.4zM1431.8 642.9h1.4v1.2h-1.4zM1504.6 652.8h1.4v1.2h-1.4zM1598.5 672.7h1.4v1.2h-1.4zM1533.2 648.3h1.4v1.2h-1.4zM1456.7 668.0h1.4v1.2h-1.4zM1504.4 666.4h1.4v1.2h-1.4zM1457.1 675.6h1.4v1.2h-1.4zM1459.3 676.2h1.4v1.2h-1.4zM1504.9 651.7h1.4v1.2h-1.4zM1533.6 660.0h1.4v1.2h-1.4zM1638.9 669.5h1.4v1.2h-1.4zM1519.8 674.8h1.4v1.2h-1.4zM1472.6 656.4h1.4v1.2h-1.4zM1613.9 661.6h1.4v1.2h-1.4zM1628.5 665.9h1.4v1.2h-1.4zM1452.9 650.2h1.4v1.2h-1.4zM1442.5 656.4h1.4v1.2h-1.4zM1522.4 666.6h1.4v1.2h-1.4zM1449.6 666.7h1.4v1.2h-1.4zM1543.5 669.9h1.4v1.2h-1.4zM1412.2 664.4h1.4v1.2h-1.4zM1412.1 659.1h1.4v1.2h-1.4zM1441.3 644.5h1.4v1.2h-1.4zM1428.6 666.2h1.4v1.2h-1.4zM1506.6 658.9h1.4v1.2h-1.4zM1574.1 674.5h1.4v1.2h-1.4zM1423.6 657.3h1.4v1.2h-1.4zM1438.4 660.1h1.4v1.2h-1.4zM1503.5 673.3h1.4v1.2h-1.4zM1527.6 649.4h1.4v1.2h-1.4zM1492.5 671.1h1.4v1.2h-1.4zM1495.7 643.7h1.4v1.2h-1.4zM1595.3 659.5h1.4v1.2h-1.4zM1417.5 656.4h1.4v1.2h-1.4zM1456.3 646.3h1.4v1.2h-1.4zM1396.5 678.1h1.4v1.2h-1.4zM1393.3 669.1h1.4v1.2h-1.4zM1451.1 671.4h1.4v1.2h-1.4zM1523.2 672.5h1.4v1.2h-1.4zM1439.2 658.1h1.4v1.2h-1.4zM1556.7 660.2h1.4v1.2h-1.4zM1606.9 671.0h1.4v1.2h-1.4zM1570.8 659.6h1.4v1.2h-1.4zM1550.4 659.4h1.4v1.2h-1.4zM1452.7 646.6h1.4v1.2h-1.4zM1473.5 647.2h1.4v1.2h-1.4zM1507.3 653.2h1.4v1.2h-1.4zM1555.7 670.2h1.4v1.2h-1.4zM1591.1 673.0h1.4v1.2h-1.4zM1507.5 654.1h1.4v1.2h-1.4zM1462.9 655.6h1.4v1.2h-1.4zM1395.0 676.7h1.4v1.2h-1.4zM1636.0 665.9h1.4v1.2h-1.4zM1436.7 657.1h1.4v1.2h-1.4zM1414.8 650.5h1.4v1.2h-1.4zM1519.9 673.4h1.4v1.2h-1.4zM1465.8 665.5h1.4v1.2h-1.4zM1426.9 644.2h1.4v1.2h-1.4zM1543.6 668.0h1.4v1.2h-1.4zM1579.3 660.4h1.4v1.2h-1.4zM1466.5 659.5h1.4v1.2h-1.4zM1443.9 670.5h1.4v1.2h-1.4zM1554.6 675.3h1.4v1.2h-1.4zM1513.3 655.1h1.4v1.2h-1.4zM1482.2 661.1h1.4v1.2h-1.4zM1429.1 644.0h1.4v1.2h-1.4zM1527.6 669.2h1.4v1.2h-1.4zM1495.5 677.8h1.4v1.2h-1.4zM1549.4 665.1h1.4v1.2h-1.4zM1465.0 677.7h1.4v1.2h-1.4zM1481.2 674.9h1.4v1.2h-1.4zM1491.0 650.5h1.4v1.2h-1.4zM1477.7 649.7h1.4v1.2h-1.4zM1432.1 651.7h1.4v1.2h-1.4zM1414.5 672.3h1.4v1.2h-1.4zM1482.7 667.9h1.4v1.2h-1.4zM1620.4 667.6h1.4v1.2h-1.4zM1485.5 647.9h1.4v1.2h-1.4zM1500.8 656.1h1.4v1.2h-1.4zM1610.6 663.8h1.4v1.2h-1.4zM1428.7 665.5h1.4v1.2h-1.4zM1451.6 663.0h1.4v1.2h-1.4zM1507.6 645.0h1.4v1.2h-1.4zM1481.3 643.5h1.4v1.2h-1.4zM1530.2 665.7h1.4v1.2h-1.4zM1476.3 668.5h1.4v1.2h-1.4zM1519.8 666.8h1.4v1.2h-1.4zM1414.7 668.8h1.4v1.2h-1.4zM1518.5 646.3h1.4v1.2h-1.4zM1527.1 650.3h1.4v1.2h-1.4zM1397.3 673.6h1.4v1.2h-1.4zM1492.0 673.9h1.4v1.2h-1.4zM1417.8 653.3h1.4v1.2h-1.4zM1409.5 679.6h1.4v1.2h-1.4zM1532.6 669.0h1.4v1.2h-1.4zM1435.0 664.3h1.4v1.2h-1.4zM1506.1 666.2h1.4v1.2h-1.4zM1419.6 670.6h1.4v1.2h-1.4zM1515.5 645.7h1.4v1.2h-1.4zM1466.1 651.3h1.4v1.2h-1.4zM1399.6 680.9h1.4v1.2h-1.4zM1620.1 659.2h1.4v1.2h-1.4zM1504.3 662.7h1.4v1.2h-1.4zM1497.2 664.8h1.4v1.2h-1.4zM1479.9 664.9h1.4v1.2h-1.4zM1444.5 656.3h1.4v1.2h-1.4zM1502.1 658.2h1.4v1.2h-1.4zM1549.7 669.1h1.4v1.2h-1.4zM1491.6 651.4h1.4v1.2h-1.4zM1512.8 645.0h1.4v1.2h-1.4zM1535.9 669.0h1.4v1.2h-1.4zM1523.9 652.3h1.4v1.2h-1.4zM1607.6 664.7h1.4v1.2h-1.4zM1437.2 680.4h1.4v1.2h-1.4zM1437.7 657.3h1.4v1.2h-1.4zM1559.1 665.5h1.4v1.2h-1.4zM1500.9 654.6h1.4v1.2h-1.4zM1633.0 664.6h1.4v1.2h-1.4zM1512.0 669.7h1.4v1.2h-1.4zM1408.3 669.0h1.4v1.2h-1.4zM1586.0 662.1h1.4v1.2h-1.4zM1420.7 669.6h1.4v1.2h-1.4zM1435.9 672.4h1.4v1.2h-1.4zM1552.9 664.0h1.4v1.2h-1.4zM1409.7 649.8h1.4v1.2h-1.4zM1613.4 663.6h1.4v1.2h-1.4zM1435.2 647.5h1.4v1.2h-1.4zM1432.1 669.1h1.4v1.2h-1.4zM1410.0 675.3h1.4v1.2h-1.4zM1583.9 664.6h1.4v1.2h-1.4zM1607.9 670.4h1.4v1.2h-1.4zM1511.0 654.0h1.4v1.2h-1.4zM1557.0 671.9h1.4v1.2h-1.4zM1461.2 677.5h1.4v1.2h-1.4zM1536.2 668.5h1.4v1.2h-1.4zM1446.6 645.1h1.4v1.2h-1.4zM1485.0 669.1h1.4v1.2h-1.4zM1534.6 647.5h1.4v1.2h-1.4zM1404.5 671.8h1.4v1.2h-1.4zM1463.7 654.9h1.4v1.2h-1.4zM1467.8 673.7h1.4v1.2h-1.4zM1548.4 659.1h1.4v1.2h-1.4zM1408.4 660.0h1.4v1.2h-1.4zM1527.0 646.7h1.4v1.2h-1.4zM1516.6 649.9h1.4v1.2h-1.4zM1543.4 665.9h1.4v1.2h-1.4zM1462.3 662.4h1.4v1.2h-1.4zM1457.7 669.7h1.4v1.2h-1.4zM1443.5 661.8h1.4v1.2h-1.4zM1582.9 672.5h1.4v1.2h-1.4zM1484.0 644.7h1.4v1.2h-1.4zM1529.3 648.6h1.4v1.2h-1.4zM1419.1 676.2h1.4v1.2h-1.4zM1514.0 664.5h1.4v1.2h-1.4zM1396.4 678.6h1.4v1.2h-1.4zM1478.6 666.1h1.4v1.2h-1.4zM1412.7 671.9h1.4v1.2h-1.4zM1595.0 663.9h1.4v1.2h-1.4zM1427.4 635.1h1.4v1.2h-1.4zM1503.2 645.9h1.4v1.2h-1.4zM1417.0 678.9h1.4v1.2h-1.4zM1447.5 661.8h1.4v1.2h-1.4zM1547.4 673.5h1.4v1.2h-1.4zM1409.9 652.9h1.4v1.2h-1.4zM1426.2 657.3h1.4v1.2h-1.4zM1435.3 646.0h1.4v1.2h-1.4zM1533.3 664.2h1.4v1.2h-1.4zM1427.5 642.2h1.4v1.2h-1.4zM1397.3 667.0h1.4v1.2h-1.4zM1471.2 662.1h1.4v1.2h-1.4zM1551.4 663.4h1.4v1.2h-1.4zM1412.6 676.5h1.4v1.2h-1.4zM1484.6 646.9h1.4v1.2h-1.4z" fill="#9a9a9a"/><path d="M1659.9 648.8h1.4v1.2h-1.4zM1690.5 666.4h1.4v1.2h-1.4zM1676.2 663.0h1.4v1.2h-1.4zM1671.2 661.0h1.4v1.2h-1.4zM1685.6 644.9h1.4v1.2h-1.4zM1684.3 644.9h1.4v1.2h-1.4zM1665.2 647.6h1.4v1.2h-1.4zM1663.1 659.6h1.4v1.2h-1.4zM1667.8 650.8h1.4v1.2h-1.4zM1686.6 654.8h1.4v1.2h-1.4zM1690.0 659.9h1.4v1.2h-1.4zM1682.7 660.6h1.4v1.2h-1.4zM1682.6 667.7h1.4v1.2h-1.4zM1679.4 657.3h1.4v1.2h-1.4zM1677.9 652.2h1.4v1.2h-1.4zM1691.1 642.8h1.4v1.2h-1.4zM1665.7 650.9h1.4v1.2h-1.4zM1669.8 659.5h1.4v1.2h-1.4zM1666.4 655.7h1.4v1.2h-1.4zM1672.7 658.1h1.4v1.2h-1.4zM1682.6 669.9h1.4v1.2h-1.4zM1662.4 655.5h1.4v1.2h-1.4zM1680.0 655.4h1.4v1.2h-1.4zM1676.4 651.1h1.4v1.2h-1.4zM1692.7 665.8h1.4v1.2h-1.4zM1674.0 663.5h1.4v1.2h-1.4zM1681.9 663.2h1.4v1.2h-1.4zM1693.0 633.6h1.4v1.2h-1.4zM1687.0 667.9h1.4v1.2h-1.4zM1667.0 650.3h1.4v1.2h-1.4zM1689.4 659.8h1.4v1.2h-1.4zM1679.1 666.7h1.4v1.2h-1.4zM1690.5 634.4h1.4v1.2h-1.4zM1691.9 642.4h1.4v1.2h-1.4zM1680.1 661.0h1.4v1.2h-1.4zM1669.2 643.0h1.4v1.2h-1.4zM1689.9 662.6h1.4v1.2h-1.4zM1692.3 634.5h1.4v1.2h-1.4zM1680.5 660.5h1.4v1.2h-1.4zM1691.6 659.9h1.4v1.2h-1.4zM1678.6 643.7h1.4v1.2h-1.4zM1682.5 663.5h1.4v1.2h-1.4zM1663.5 651.4h1.4v1.2h-1.4zM1692.4 645.2h1.4v1.2h-1.4zM1677.4 663.4h1.4v1.2h-1.4zM1685.5 660.4h1.4v1.2h-1.4zM1670.9 650.5h1.4v1.2h-1.4zM1691.1 633.2h1.4v1.2h-1.4zM1662.1 656.5h1.4v1.2h-1.4zM1691.5 636.7h1.4v1.2h-1.4zM1665.7 649.2h1.4v1.2h-1.4zM1686.0 653.4h1.4v1.2h-1.4zM1666.0 654.3h1.4v1.2h-1.4zM1673.3 644.1h1.4v1.2h-1.4zM1681.1 669.1h1.4v1.2h-1.4zM1680.7 667.7h1.4v1.2h-1.4zM1663.6 655.5h1.4v1.2h-1.4zM1671.6 664.8h1.4v1.2h-1.4zM1679.5 655.4h1.4v1.2h-1.4zM1690.2 669.2h1.4v1.2h-1.4zM1663.9 648.3h1.4v1.2h-1.4zM1662.2 653.3h1.4v1.2h-1.4zM1666.9 658.9h1.4v1.2h-1.4zM1689.3 635.8h1.4v1.2h-1.4zM1668.4 651.7h1.4v1.2h-1.4zM1668.8 648.8h1.4v1.2h-1.4zM1677.7 657.1h1.4v1.2h-1.4zM1690.6 644.2h1.4v1.2h-1.4zM1684.2 645.5h1.4v1.2h-1.4zM1673.5 664.4h1.4v1.2h-1.4zM1674.1 663.5h1.4v1.2h-1.4zM1675.2 654.1h1.4v1.2h-1.4zM1667.9 647.2h1.4v1.2h-1.4zM1669.1 644.3h1.4v1.2h-1.4zM1666.0 653.9h1.4v1.2h-1.4zM1687.5 658.4h1.4v1.2h-1.4zM1689.3 636.1h1.4v1.2h-1.4zM1665.6 643.3h1.4v1.2h-1.4zM1676.5 664.3h1.4v1.2h-1.4zM1687.5 665.4h1.4v1.2h-1.4zM1670.7 648.0h1.4v1.2h-1.4zM1666.4 643.5h1.4v1.2h-1.4zM1663.1 648.4h1.4v1.2h-1.4zM1692.9 659.5h1.4v1.2h-1.4zM1684.2 645.0h1.4v1.2h-1.4zM1660.9 652.6h1.4v1.2h-1.4zM1675.7 665.5h1.4v1.2h-1.4zM1693.0 663.6h1.4v1.2h-1.4zM1686.2 660.5h1.4v1.2h-1.4zM1691.0 642.7h1.4v1.2h-1.4zM1685.4 652.4h1.4v1.2h-1.4zM1675.8 651.9h1.4v1.2h-1.4zM1690.3 664.4h1.4v1.2h-1.4zM1672.6 665.1h1.4v1.2h-1.4zM1692.0 663.7h1.4v1.2h-1.4zM1668.2 661.8h1.4v1.2h-1.4zM1673.7 654.0h1.4v1.2h-1.4zM1678.1 660.7h1.4v1.2h-1.4zM1673.1 670.7h1.4v1.2h-1.4zM1667.9 660.9h1.4v1.2h-1.4zM1686.8 666.3h1.4v1.2h-1.4zM1691.7 645.0h1.4v1.2h-1.4zM1686.0 659.7h1.4v1.2h-1.4zM1678.5 646.3h1.4v1.2h-1.4zM1669.9 663.6h1.4v1.2h-1.4zM1685.8 668.8h1.4v1.2h-1.4zM1661.6 653.7h1.4v1.2h-1.4zM1685.7 659.4h1.4v1.2h-1.4zM1670.5 648.4h1.4v1.2h-1.4zM1686.8 634.5h1.4v1.2h-1.4zM1683.7 659.2h1.4v1.2h-1.4zM1674.9 669.1h1.4v1.2h-1.4zM1680.6 666.3h1.4v1.2h-1.4zM1665.9 647.1h1.4v1.2h-1.4zM1669.2 650.8h1.4v1.2h-1.4zM1690.1 665.1h1.4v1.2h-1.4zM1692.3 660.3h1.4v1.2h-1.4zM1673.1 650.4h1.4v1.2h-1.4zM1662.1 652.3h1.4v1.2h-1.4zM1670.7 668.9h1.4v1.2h-1.4zM1680.7 648.0h1.4v1.2h-1.4zM1682.6 655.4h1.4v1.2h-1.4zM1676.0 651.1h1.4v1.2h-1.4zM1673.2 667.2h1.4v1.2h-1.4zM1686.1 643.4h1.4v1.2h-1.4zM1670.5 648.1h1.4v1.2h-1.4zM1669.3 661.3h1.4v1.2h-1.4zM1662.5 653.1h1.4v1.2h-1.4zM1683.4 644.5h1.4v1.2h-1.4zM1684.0 645.0h1.4v1.2h-1.4zM1670.0 653.3h1.4v1.2h-1.4zM1680.0 649.4h1.4v1.2h-1.4zM1660.6 652.4h1.4v1.2h-1.4zM1688.5 641.6h1.4v1.2h-1.4zM1666.3 655.7h1.4v1.2h-1.4zM1661.8 655.9h1.4v1.2h-1.4zM1689.1 661.8h1.4v1.2h-1.4zM1679.2 666.0h1.4v1.2h-1.4zM1688.0 641.5h1.4v1.2h-1.4zM1672.2 669.9h1.4v1.2h-1.4zM1691.2 656.5h1.4v1.2h-1.4zM1680.6 644.5h1.4v1.2h-1.4zM1667.1 656.2h1.4v1.2h-1.4zM1681.5 656.1h1.4v1.2h-1.4zM1690.1 630.7h1.4v1.2h-1.4zM1671.8 667.5h1.4v1.2h-1.4zM1675.1 662.9h1.4v1.2h-1.4zM1686.3 642.5h1.4v1.2h-1.4zM1684.0 654.9h1.4v1.2h-1.4zM1671.5 670.4h1.4v1.2h-1.4z" fill="#9a9a9a"/><path d="M1729.7 655.7h1.4v1.2h-1.4zM1774.8 658.3h1.4v1.2h-1.4zM1752.9 657.4h1.4v1.2h-1.4zM1747.6 656.6h1.4v1.2h-1.4zM1722.4 655.8h1.4v1.2h-1.4zM1719.0 659.2h1.4v1.2h-1.4zM1708.9 654.4h1.4v1.2h-1.4zM1739.2 661.6h1.4v1.2h-1.4zM1759.0 659.0h1.4v1.2h-1.4zM1756.1 655.1h1.4v1.2h-1.4zM1739.5 653.5h1.4v1.2h-1.4zM1740.2 653.7h1.4v1.2h-1.4zM1710.9 654.4h1.4v1.2h-1.4zM1727.5 657.3h1.4v1.2h-1.4zM1718.4 654.0h1.4v1.2h-1.4zM1711.4 661.3h1.4v1.2h-1.4zM1773.7 661.0h1.4v1.2h-1.4zM1712.5 655.1h1.4v1.2h-1.4zM1766.1 653.5h1.4v1.2h-1.4zM1713.3 658.8h1.4v1.2h-1.4zM1772.2 661.1h1.4v1.2h-1.4zM1763.6 656.0h1.4v1.2h-1.4zM1755.6 661.2h1.4v1.2h-1.4zM1767.6 661.5h1.4v1.2h-1.4zM1757.6 659.9h1.4v1.2h-1.4zM1753.3 656.9h1.4v1.2h-1.4zM1744.0 661.1h1.4v1.2h-1.4zM1743.9 653.6h1.4v1.2h-1.4zM1734.9 660.6h1.4v1.2h-1.4zM1753.8 657.4h1.4v1.2h-1.4zM1770.0 659.7h1.4v1.2h-1.4zM1718.8 659.2h1.4v1.2h-1.4zM1765.4 653.5h1.4v1.2h-1.4zM1770.3 657.0h1.4v1.2h-1.4zM1763.8 653.5h1.4v1.2h-1.4zM1725.7 655.9h1.4v1.2h-1.4zM1718.3 658.9h1.4v1.2h-1.4zM1760.1 658.8h1.4v1.2h-1.4zM1768.3 654.3h1.4v1.2h-1.4zM1723.3 656.7h1.4v1.2h-1.4zM1759.8 659.5h1.4v1.2h-1.4zM1774.1 660.6h1.4v1.2h-1.4zM1740.9 659.5h1.4v1.2h-1.4zM1761.7 657.7h1.4v1.2h-1.4zM1751.6 660.5h1.4v1.2h-1.4zM1762.7 654.7h1.4v1.2h-1.4zM1704.8 659.3h1.4v1.2h-1.4zM1761.5 655.0h1.4v1.2h-1.4zM1764.0 659.7h1.4v1.2h-1.4zM1714.5 654.7h1.4v1.2h-1.4zM1750.1 658.6h1.4v1.2h-1.4zM1714.1 660.9h1.4v1.2h-1.4zM1718.2 660.3h1.4v1.2h-1.4zM1770.9 654.4h1.4v1.2h-1.4zM1753.2 658.0h1.4v1.2h-1.4zM1768.7 657.1h1.4v1.2h-1.4zM1732.4 655.3h1.4v1.2h-1.4zM1763.7 656.1h1.4v1.2h-1.4zM1768.4 653.7h1.4v1.2h-1.4zM1766.8 653.6h1.4v1.2h-1.4zM1754.8 661.3h1.4v1.2h-1.4zM1725.8 658.3h1.4v1.2h-1.4zM1732.5 653.9h1.4v1.2h-1.4zM1763.2 657.5h1.4v1.2h-1.4zM1760.5 653.7h1.4v1.2h-1.4zM1714.4 655.3h1.4v1.2h-1.4zM1761.5 653.6h1.4v1.2h-1.4zM1704.2 656.5h1.4v1.2h-1.4zM1730.5 660.4h1.4v1.2h-1.4zM1764.6 655.4h1.4v1.2h-1.4z" fill="#9a9a9a"/><path d="M1709.1 669.9h1.4v1.2h-1.4zM1709.3 676.9h1.4v1.2h-1.4zM1703.2 672.5h1.4v1.2h-1.4zM1706.3 672.3h1.4v1.2h-1.4zM1707.5 677.6h1.4v1.2h-1.4zM1706.1 673.6h1.4v1.2h-1.4zM1709.9 677.4h1.4v1.2h-1.4zM1704.3 664.9h1.4v1.2h-1.4zM1705.0 683.6h1.4v1.2h-1.4zM1706.0 681.9h1.4v1.2h-1.4zM1711.1 677.8h1.4v1.2h-1.4zM1705.8 678.8h1.4v1.2h-1.4zM1707.0 683.6h1.4v1.2h-1.4zM1707.0 676.3h1.4v1.2h-1.4zM1708.6 676.2h1.4v1.2h-1.4zM1704.2 674.8h1.4v1.2h-1.4zM1706.4 677.3h1.4v1.2h-1.4zM1709.4 666.4h1.4v1.2h-1.4zM1705.9 667.6h1.4v1.2h-1.4zM1711.1 673.0h1.4v1.2h-1.4zM1706.6 683.9h1.4v1.2h-1.4zM1709.5 681.5h1.4v1.2h-1.4zM1707.0 664.6h1.4v1.2h-1.4zM1705.9 663.6h1.4v1.2h-1.4zM1706.1 672.1h1.4v1.2h-1.4zM1706.8 684.2h1.4v1.2h-1.4zM1707.3 665.5h1.4v1.2h-1.4zM1704.2 677.3h1.4v1.2h-1.4z" fill="#9a9a9a"/><path d="M1707.1 726.3h1.4v1.2h-1.4zM1706.9 726.3h1.4v1.2h-1.4zM1708.6 737.3h1.4v1.2h-1.4zM1703.0 731.4h1.4v1.2h-1.4zM1704.8 736.7h1.4v1.2h-1.4zM1706.7 747.4h1.4v1.2h-1.4zM1711.1 746.3h1.4v1.2h-1.4zM1708.0 732.2h1.4v1.2h-1.4zM1703.6 745.6h1.4v1.2h-1.4zM1704.3 724.5h1.4v1.2h-1.4zM1707.7 717.5h1.4v1.2h-1.4zM1710.2 734.5h1.4v1.2h-1.4zM1711.2 702.9h1.4v1.2h-1.4zM1706.7 721.0h1.4v1.2h-1.4zM1707.7 740.6h1.4v1.2h-1.4zM1707.8 758.2h1.4v1.2h-1.4zM1706.5 723.9h1.4v1.2h-1.4zM1709.2 735.0h1.4v1.2h-1.4zM1705.0 757.1h1.4v1.2h-1.4zM1704.6 706.1h1.4v1.2h-1.4zM1707.3 756.4h1.4v1.2h-1.4zM1710.1 750.7h1.4v1.2h-1.4zM1708.0 732.4h1.4v1.2h-1.4zM1705.2 711.5h1.4v1.2h-1.4zM1706.5 751.8h1.4v1.2h-1.4zM1707.5 760.7h1.4v1.2h-1.4zM1709.6 734.3h1.4v1.2h-1.4zM1707.8 726.7h1.4v1.2h-1.4zM1710.6 751.7h1.4v1.2h-1.4zM1704.2 755.9h1.4v1.2h-1.4zM1708.6 723.3h1.4v1.2h-1.4zM1709.2 727.0h1.4v1.2h-1.4zM1708.7 732.0h1.4v1.2h-1.4zM1708.2 757.0h1.4v1.2h-1.4zM1710.4 730.5h1.4v1.2h-1.4zM1706.0 744.6h1.4v1.2h-1.4zM1708.5 707.3h1.4v1.2h-1.4zM1707.1 718.4h1.4v1.2h-1.4zM1708.3 711.7h1.4v1.2h-1.4zM1705.2 716.8h1.4v1.2h-1.4zM1705.1 735.7h1.4v1.2h-1.4zM1710.2 740.2h1.4v1.2h-1.4zM1708.3 747.4h1.4v1.2h-1.4zM1706.0 727.4h1.4v1.2h-1.4zM1708.3 714.0h1.4v1.2h-1.4zM1709.2 757.0h1.4v1.2h-1.4zM1710.4 705.5h1.4v1.2h-1.4zM1710.7 715.1h1.4v1.2h-1.4zM1703.7 738.8h1.4v1.2h-1.4zM1705.6 712.4h1.4v1.2h-1.4zM1708.0 733.9h1.4v1.2h-1.4zM1707.3 732.4h1.4v1.2h-1.4zM1708.0 748.4h1.4v1.2h-1.4zM1708.9 744.1h1.4v1.2h-1.4zM1709.9 729.9h1.4v1.2h-1.4zM1708.2 708.4h1.4v1.2h-1.4zM1703.3 728.8h1.4v1.2h-1.4zM1708.6 715.7h1.4v1.2h-1.4zM1711.0 719.0h1.4v1.2h-1.4zM1706.9 729.8h1.4v1.2h-1.4zM1711.1 710.9h1.4v1.2h-1.4zM1704.8 739.8h1.4v1.2h-1.4zM1705.8 722.3h1.4v1.2h-1.4zM1703.8 756.8h1.4v1.2h-1.4zM1706.5 736.4h1.4v1.2h-1.4zM1704.8 757.9h1.4v1.2h-1.4zM1703.5 743.6h1.4v1.2h-1.4zM1703.2 733.6h1.4v1.2h-1.4zM1705.5 758.8h1.4v1.2h-1.4zM1706.5 752.1h1.4v1.2h-1.4z" fill="#9a9a9a"/><path d="M1766.5 685.3h1.4v1.2h-1.4zM1774.7 698.7h1.4v1.2h-1.4zM1766.6 687.7h1.4v1.2h-1.4zM1769.4 714.5h1.4v1.2h-1.4zM1769.5 692.2h1.4v1.2h-1.4zM1770.3 708.7h1.4v1.2h-1.4zM1767.9 713.6h1.4v1.2h-1.4zM1771.2 719.1h1.4v1.2h-1.4zM1772.6 707.1h1.4v1.2h-1.4zM1768.1 756.1h1.4v1.2h-1.4zM1767.3 692.1h1.4v1.2h-1.4zM1769.8 703.0h1.4v1.2h-1.4zM1768.1 747.9h1.4v1.2h-1.4zM1768.9 716.5h1.4v1.2h-1.4zM1771.5 674.8h1.4v1.2h-1.4zM1770.0 675.0h1.4v1.2h-1.4zM1770.9 734.8h1.4v1.2h-1.4zM1773.6 755.7h1.4v1.2h-1.4zM1767.3 707.6h1.4v1.2h-1.4zM1772.0 699.1h1.4v1.2h-1.4zM1774.3 711.2h1.4v1.2h-1.4zM1773.7 668.4h1.4v1.2h-1.4zM1769.6 731.4h1.4v1.2h-1.4zM1773.4 711.3h1.4v1.2h-1.4zM1773.6 737.8h1.4v1.2h-1.4zM1769.8 732.6h1.4v1.2h-1.4zM1770.7 673.0h1.4v1.2h-1.4zM1773.9 746.2h1.4v1.2h-1.4zM1773.9 685.2h1.4v1.2h-1.4zM1772.9 665.6h1.4v1.2h-1.4zM1770.5 692.0h1.4v1.2h-1.4zM1770.6 700.0h1.4v1.2h-1.4zM1771.0 705.1h1.4v1.2h-1.4zM1772.8 727.5h1.4v1.2h-1.4zM1768.7 681.5h1.4v1.2h-1.4zM1768.3 694.4h1.4v1.2h-1.4zM1769.9 712.2h1.4v1.2h-1.4zM1772.8 760.0h1.4v1.2h-1.4zM1768.5 691.2h1.4v1.2h-1.4zM1770.7 662.4h1.4v1.2h-1.4zM1771.7 665.5h1.4v1.2h-1.4zM1771.3 720.5h1.4v1.2h-1.4zM1769.6 760.9h1.4v1.2h-1.4zM1769.0 663.4h1.4v1.2h-1.4zM1767.2 685.8h1.4v1.2h-1.4zM1772.6 735.7h1.4v1.2h-1.4zM1769.3 750.1h1.4v1.2h-1.4zM1767.7 684.6h1.4v1.2h-1.4zM1771.2 715.0h1.4v1.2h-1.4zM1773.0 692.6h1.4v1.2h-1.4zM1774.0 725.0h1.4v1.2h-1.4zM1772.2 719.2h1.4v1.2h-1.4zM1768.1 718.1h1.4v1.2h-1.4zM1774.3 663.2h1.4v1.2h-1.4zM1769.1 692.5h1.4v1.2h-1.4zM1768.5 738.9h1.4v1.2h-1.4zM1771.8 675.2h1.4v1.2h-1.4zM1772.3 749.6h1.4v1.2h-1.4zM1766.9 663.6h1.4v1.2h-1.4zM1771.4 749.9h1.4v1.2h-1.4zM1771.0 712.4h1.4v1.2h-1.4zM1769.8 718.4h1.4v1.2h-1.4zM1774.1 721.5h1.4v1.2h-1.4zM1772.6 708.3h1.4v1.2h-1.4zM1773.8 738.7h1.4v1.2h-1.4zM1770.6 691.9h1.4v1.2h-1.4zM1768.9 759.7h1.4v1.2h-1.4zM1771.7 668.8h1.4v1.2h-1.4zM1770.7 704.5h1.4v1.2h-1.4zM1771.4 690.1h1.4v1.2h-1.4zM1774.0 710.0h1.4v1.2h-1.4zM1773.3 687.7h1.4v1.2h-1.4zM1773.8 716.4h1.4v1.2h-1.4zM1770.9 705.2h1.4v1.2h-1.4zM1774.3 718.0h1.4v1.2h-1.4zM1770.8 698.1h1.4v1.2h-1.4zM1770.2 688.7h1.4v1.2h-1.4zM1770.1 688.1h1.4v1.2h-1.4zM1767.0 698.3h1.4v1.2h-1.4zM1766.5 728.2h1.4v1.2h-1.4zM1767.1 752.3h1.4v1.2h-1.4zM1769.0 688.9h1.4v1.2h-1.4zM1771.0 690.9h1.4v1.2h-1.4zM1772.5 692.1h1.4v1.2h-1.4zM1774.1 665.9h1.4v1.2h-1.4zM1766.8 750.0h1.4v1.2h-1.4zM1772.2 688.1h1.4v1.2h-1.4zM1771.8 697.8h1.4v1.2h-1.4zM1770.6 689.2h1.4v1.2h-1.4zM1770.9 726.6h1.4v1.2h-1.4zM1773.5 687.3h1.4v1.2h-1.4zM1771.1 718.5h1.4v1.2h-1.4zM1773.7 709.8h1.4v1.2h-1.4zM1773.6 754.3h1.4v1.2h-1.4zM1769.8 702.3h1.4v1.2h-1.4zM1774.5 719.7h1.4v1.2h-1.4zM1770.8 739.5h1.4v1.2h-1.4zM1771.4 713.6h1.4v1.2h-1.4zM1771.9 687.9h1.4v1.2h-1.4zM1769.5 662.6h1.4v1.2h-1.4zM1772.4 744.2h1.4v1.2h-1.4zM1772.6 759.0h1.4v1.2h-1.4zM1772.7 672.4h1.4v1.2h-1.4zM1769.0 754.0h1.4v1.2h-1.4zM1767.2 749.6h1.4v1.2h-1.4zM1773.1 676.5h1.4v1.2h-1.4zM1768.1 734.9h1.4v1.2h-1.4zM1771.9 664.7h1.4v1.2h-1.4zM1770.8 680.6h1.4v1.2h-1.4zM1773.6 715.3h1.4v1.2h-1.4z" fill="#9a9a9a"/><path d="M1712.1 757.0h1.4v1.2h-1.4zM1712.0 761.0h1.4v1.2h-1.4zM1760.1 759.5h1.4v1.2h-1.4zM1711.5 761.3h1.4v1.2h-1.4zM1725.9 759.0h1.4v1.2h-1.4zM1753.3 758.3h1.4v1.2h-1.4zM1717.8 755.8h1.4v1.2h-1.4zM1751.5 754.8h1.4v1.2h-1.4zM1732.1 761.3h1.4v1.2h-1.4zM1733.9 755.0h1.4v1.2h-1.4zM1747.1 756.6h1.4v1.2h-1.4zM1754.8 756.7h1.4v1.2h-1.4zM1756.9 760.4h1.4v1.2h-1.4zM1721.2 758.2h1.4v1.2h-1.4zM1735.9 754.8h1.4v1.2h-1.4zM1761.5 756.5h1.4v1.2h-1.4zM1745.0 754.3h1.4v1.2h-1.4zM1763.6 761.6h1.4v1.2h-1.4zM1749.0 754.8h1.4v1.2h-1.4zM1747.8 757.6h1.4v1.2h-1.4zM1737.4 755.5h1.4v1.2h-1.4zM1719.7 760.6h1.4v1.2h-1.4zM1744.6 759.8h1.4v1.2h-1.4zM1752.0 757.0h1.4v1.2h-1.4zM1741.6 756.2h1.4v1.2h-1.4zM1747.4 757.2h1.4v1.2h-1.4zM1754.4 756.1h1.4v1.2h-1.4zM1732.3 754.5h1.4v1.2h-1.4zM1713.5 755.5h1.4v1.2h-1.4zM1712.3 757.2h1.4v1.2h-1.4zM1732.2 760.9h1.4v1.2h-1.4zM1713.7 761.7h1.4v1.2h-1.4zM1716.6 760.4h1.4v1.2h-1.4zM1731.1 755.8h1.4v1.2h-1.4zM1744.9 756.6h1.4v1.2h-1.4zM1712.3 754.8h1.4v1.2h-1.4zM1748.7 759.6h1.4v1.2h-1.4zM1765.9 755.8h1.4v1.2h-1.4zM1753.6 756.5h1.4v1.2h-1.4zM1739.7 756.0h1.4v1.2h-1.4zM1734.0 761.1h1.4v1.2h-1.4zM1725.2 757.2h1.4v1.2h-1.4zM1761.3 757.4h1.4v1.2h-1.4zM1756.0 758.1h1.4v1.2h-1.4zM1730.6 759.6h1.4v1.2h-1.4zM1747.2 756.8h1.4v1.2h-1.4zM1766.2 754.5h1.4v1.2h-1.4zM1758.0 759.6h1.4v1.2h-1.4zM1750.4 757.6h1.4v1.2h-1.4zM1752.5 754.2h1.4v1.2h-1.4zM1748.2 760.7h1.4v1.2h-1.4zM1733.8 759.7h1.4v1.2h-1.4zM1749.6 757.8h1.4v1.2h-1.4zM1753.7 757.7h1.4v1.2h-1.4zM1718.0 758.0h1.4v1.2h-1.4zM1752.7 755.1h1.4v1.2h-1.4zM1736.7 760.5h1.4v1.2h-1.4zM1712.1 760.7h1.4v1.2h-1.4zM1730.7 756.7h1.4v1.2h-1.4zM1749.8 758.4h1.4v1.2h-1.4z" fill="#9a9a9a"/><path d="M1390.0 682.0 L1390.0 664.2 L1407.5 664.2 L1407.5 647.5 L1423.3 647.5 L1423.3 630.8 L1432.5 630.8 L1432.5 642.5 L1684.5 642.5 L1684.5 630.7 L1693.1 630.7 L1693.1 669.0" stroke="#f00000" stroke-width="1.6" fill="none"/><line x1="1407.5" y1="664.2" x2="1407.5" y2="680.0" stroke="#f00000" stroke-width="1.2" /><line x1="1423.3" y1="647.5" x2="1423.3" y2="680.0" stroke="#f00000" stroke-width="1.6" /><path d="M1529.3 642.5 L1529.3 647.3 L1665.6 647.3 L1665.6 642.5" stroke="#f00000" stroke-width="1.5" fill="none"/><path d="M1535.0 647.3 L1535.0 658.8 L1629.0 658.8 L1640.0 662.0 L1647.3 671.4 L1660.0 685.0 L1671.0 697.0 L1678.6 701.6 L1702.6 701.6" stroke="#f00000" stroke-width="1.6" fill="none"/><path d="M1659.3 647.3 L1659.3 658.8 L1686.6 684.7 L1702.6 684.7" stroke="#f00000" stroke-width="1.6" fill="none"/><line x1="1516.0" y1="658.8" x2="1535.0" y2="658.8" stroke="#f00000" stroke-width="1.2" /><rect x="1702.6" y="653.4" width="72.2" height="108.4" fill="none" stroke="#f00000" stroke-width="1.6"/><path d="M1702.6 661.7 L1774.8 661.7" stroke="#f00000" stroke-width="1.5" fill="none"/><path d="M1711.4 661.7 L1711.4 684.7" stroke="#f00000" stroke-width="1.5" fill="none"/><path d="M1711.4 701.6 L1711.4 761.8" stroke="#f00000" stroke-width="1.5" fill="none"/><line x1="1766.3" y1="661.7" x2="1766.3" y2="761.8" stroke="#f00000" stroke-width="1.5" /><rect x="1752.7" y="639.6" width="22.1" height="12" fill="none" stroke="#f00000" stroke-width="1.4"/><text x="1763.7" y="649.0" font-size="8.5" fill="#f0f000" text-anchor="middle" textLength="19" lengthAdjust="spacingAndGlyphs" >CP04</text><line x1="1455.0" y1="623.3" x2="1455.0" y2="675.0" stroke="#f00000" stroke-width="1.3" /><line x1="1435.0" y1="630.8" x2="1458.0" y2="630.8" stroke="#f00000" stroke-width="1.2" /><line x1="1450.0" y1="642.5" x2="1460.0" y2="642.5" stroke="#f00000" stroke-width="1.0" /><text font-size="9.5" fill="#f0f000" text-anchor="middle" textLength="17" lengthAdjust="spacingAndGlyphs" transform="translate(1451 661.7) rotate(-90)">200</text><line x1="1520.3" y1="634.7" x2="1520.3" y2="692.0" stroke="#f00000" stroke-width="1.3" /><text font-size="9.5" fill="#f0f000" text-anchor="middle" textLength="17" lengthAdjust="spacingAndGlyphs" transform="translate(1516 680) rotate(-90)">400</text><line x1="1726.0" y1="677.7" x2="1726.0" y2="736.0" stroke="#f00000" stroke-width="1.3" /><line x1="1715.0" y1="684.7" x2="1731.0" y2="684.7" stroke="#f00000" stroke-width="1.2" /><line x1="1715.0" y1="701.6" x2="1731.0" y2="701.6" stroke="#f00000" stroke-width="1.2" /><text font-size="9.5" fill="#f0f000" text-anchor="middle" textLength="16" lengthAdjust="spacingAndGlyphs" transform="translate(1721.5 722) rotate(-90)">300</text><path d="M1300.8 687.0 L1702.6 669.7" stroke="#f0f000" stroke-width="1.5" fill="none"/><path d="M1774.8 666.1 L1829.2 664.0" stroke="#f0f000" stroke-width="1.5" fill="none"/><path d="M1516.5 519.3 L1516.5 631.3 L1599.8 631.3 L1599.8 519.3" stroke="#c8c8c8" stroke-width="1.1" fill="none"/><line x1="1511.0" y1="519.3" x2="1603.5" y2="519.3" stroke="#c8c8c8" stroke-width="1.1" /><line x1="1511.0" y1="522.0" x2="1603.5" y2="522.0" stroke="#c8c8c8" stroke-width="0.8" /><line x1="1523.9" y1="570.2" x2="1592.4" y2="570.2" stroke="#c8c8c8" stroke-width="1.4" /><line x1="1523.9" y1="600.7" x2="1592.4" y2="600.7" stroke="#c8c8c8" stroke-width="1.4" /><rect x="1484" y="529.4" width="29.700000000000045" height="77.8" fill="none" stroke="#c8c8c8" stroke-width="1.1"/><line x1="1486.5" y1="531.0" x2="1486.5" y2="606.0" stroke="#c8c8c8" stroke-width="0.9" /><line x1="1489.1" y1="531.0" x2="1489.1" y2="606.0" stroke="#c8c8c8" stroke-width="0.9" /><line x1="1491.7" y1="531.0" x2="1491.7" y2="606.0" stroke="#c8c8c8" stroke-width="0.9" /><line x1="1494.3" y1="531.0" x2="1494.3" y2="606.0" stroke="#c8c8c8" stroke-width="0.9" /><line x1="1496.9" y1="531.0" x2="1496.9" y2="606.0" stroke="#c8c8c8" stroke-width="0.9" /><line x1="1499.5" y1="531.0" x2="1499.5" y2="606.0" stroke="#c8c8c8" stroke-width="0.9" /><line x1="1502.1" y1="531.0" x2="1502.1" y2="606.0" stroke="#c8c8c8" stroke-width="0.9" /><line x1="1504.7" y1="531.0" x2="1504.7" y2="606.0" stroke="#c8c8c8" stroke-width="0.9" /><line x1="1507.3" y1="531.0" x2="1507.3" y2="606.0" stroke="#c8c8c8" stroke-width="0.9" /><line x1="1509.9" y1="531.0" x2="1509.9" y2="606.0" stroke="#c8c8c8" stroke-width="0.9" /><line x1="1512.5" y1="531.0" x2="1512.5" y2="606.0" stroke="#c8c8c8" stroke-width="0.9" /><rect x="1602.6" y="529.4" width="30.40000000000009" height="77.8" fill="none" stroke="#c8c8c8" stroke-width="1.1"/><line x1="1605.1" y1="531.0" x2="1605.1" y2="606.0" stroke="#c8c8c8" stroke-width="0.9" /><line x1="1607.7" y1="531.0" x2="1607.7" y2="606.0" stroke="#c8c8c8" stroke-width="0.9" /><line x1="1610.3" y1="531.0" x2="1610.3" y2="606.0" stroke="#c8c8c8" stroke-width="0.9" /><line x1="1612.9" y1="531.0" x2="1612.9" y2="606.0" stroke="#c8c8c8" stroke-width="0.9" /><line x1="1615.5" y1="531.0" x2="1615.5" y2="606.0" stroke="#c8c8c8" stroke-width="0.9" /><line x1="1618.1" y1="531.0" x2="1618.1" y2="606.0" stroke="#c8c8c8" stroke-width="0.9" /><line x1="1620.7" y1="531.0" x2="1620.7" y2="606.0" stroke="#c8c8c8" stroke-width="0.9" /><line x1="1623.3" y1="531.0" x2="1623.3" y2="606.0" stroke="#c8c8c8" stroke-width="0.9" /><line x1="1625.9" y1="531.0" x2="1625.9" y2="606.0" stroke="#c8c8c8" stroke-width="0.9" /><line x1="1628.5" y1="531.0" x2="1628.5" y2="606.0" stroke="#c8c8c8" stroke-width="0.9" /><line x1="1631.1" y1="531.0" x2="1631.1" y2="606.0" stroke="#c8c8c8" stroke-width="0.9" /><rect x="1484" y="524.8" width="45.4" height="6.5" rx="3" fill="#000" stroke="#c8c8c8" stroke-width="1.1"/><rect x="1484" y="604.4" width="45.4" height="6.5" rx="3" fill="#000" stroke="#c8c8c8" stroke-width="1.1"/><rect x="1586.9" y="524.8" width="46.1" height="6.5" rx="3" fill="#000" stroke="#c8c8c8" stroke-width="1.1"/><rect x="1586.9" y="604.4" width="46.1" height="6.5" rx="3" fill="#000" stroke="#c8c8c8" stroke-width="1.1"/><rect x="1495" y="531" width="7" height="10" fill="none" stroke="#c8c8c8" stroke-width="1"/><rect x="1494" y="546" width="9" height="20" fill="#000" stroke="#c8c8c8" stroke-width="1"/><rect x="1538.7" y="517.8" width="39.8" height="32.9" fill="none" stroke="#c8c8c8" stroke-width="1.1"/><rect x="1540.5" y="519.5" width="36" height="29" fill="none" stroke="#c8c8c8" stroke-width="0.7"/><rect x="1553.5" y="523.9" width="9.3" height="6.5" fill="#e00000"/><rect x="1556" y="525.5" width="4.3" height="3.3" fill="#f0f000"/><line x1="1540.0" y1="547.0" x2="1577.0" y2="547.0" stroke="#c8c8c8" stroke-width="2.5" /><circle cx="1505.5" cy="490.5" r="13.8" fill="none" stroke="#c8c8c8" stroke-width="1.1"/><rect x="1502" y="474" width="7" height="4" fill="none" stroke="#c8c8c8" stroke-width="1"/><rect x="1501" y="485" width="9" height="9" rx="2" fill="none" stroke="#c8c8c8" stroke-width="1.2"/><line x1="1500.0" y1="505.0" x2="1500.0" y2="520.0" stroke="#c8c8c8" stroke-width="1" /><line x1="1510.0" y1="504.0" x2="1510.0" y2="520.0" stroke="#c8c8c8" stroke-width="1" /><path d="M1498 514L1513 514L1506 522Z" fill="#999"/><line x1="1505.5" y1="520.0" x2="1505.5" y2="530.0" stroke="#c8c8c8" stroke-width="1" /><path d="M1515 512C1513 506 1520 500 1526 504C1530 496 1540 498 1538 506C1542 508 1540 514 1534 514Z" fill="none" stroke="#c8c8c8" stroke-width="1"/><circle cx="1527" cy="505" r="3" fill="none" stroke="#c8c8c8" stroke-width="1"/><line x1="1512.0" y1="514.0" x2="1548.0" y2="514.0" stroke="#c8c8c8" stroke-width="1.2" /><line x1="1530.0" y1="514.0" x2="1530.0" y2="522.0" stroke="#c8c8c8" stroke-width="1" /><rect x="1544" y="513" width="4" height="5" fill="none" stroke="#c8c8c8" stroke-width="0.9"/><path d="M1555 516Q1560 510 1566 516" fill="none" stroke="#c8c8c8" stroke-width="1"/><rect x="1567" y="514" width="6" height="4" fill="none" stroke="#c8c8c8" stroke-width="0.9"/><rect x="1590" y="510" width="6" height="10" fill="none" stroke="#c8c8c8" stroke-width="0.9"/><line x1="1583.0" y1="518.0" x2="1603.0" y2="518.0" stroke="#c8c8c8" stroke-width="1.2" /><circle cx="1535.6" cy="637.5" r="3.8" fill="none" stroke="#c8c8c8" stroke-width="1"/><rect x="1531" y="631" width="9" height="4" fill="none" stroke="#c8c8c8" stroke-width="0.9"/><path d="M1577 631V642M1581 631V642M1585 631V642" stroke="#c8c8c8" stroke-width="0.9"/><path d="M1520 630Q1524 622 1530 626" fill="none" stroke="#c8c8c8" stroke-width="1.2"/><path d="M1588 628L1592 622L1594 628" fill="none" stroke="#c8c8c8" stroke-width="1.2"/><path d="M1540 621H1548V627M1576 621H1568V627" fill="none" stroke="#c8c8c8" stroke-width="1.1"/><line x1="1541.3" y1="548.0" x2="1541.3" y2="656.0" stroke="#00e8f0" stroke-width="1.6" /><line x1="1575.3" y1="548.0" x2="1575.3" y2="656.0" stroke="#00e8f0" stroke-width="1.6" /><rect x="1541.3" y="551.7" width="34" height="3.6" fill="#00e8f0" fill-opacity="0.55" stroke="#00e8f0" stroke-width="1.1"/><rect x="1541.3" y="568.4000000000001" width="34" height="3.6" fill="#00e8f0" fill-opacity="0.55" stroke="#00e8f0" stroke-width="1.1"/><rect x="1541.3" y="584.2" width="34" height="3.6" fill="#00e8f0" fill-opacity="0.55" stroke="#00e8f0" stroke-width="1.1"/><rect x="1541.3" y="599.9000000000001" width="34" height="3.6" fill="#00e8f0" fill-opacity="0.55" stroke="#00e8f0" stroke-width="1.1"/><rect x="1541.3" y="616.5" width="34" height="3.6" fill="#00e8f0" fill-opacity="0.55" stroke="#00e8f0" stroke-width="1.1"/><rect x="1541.3" y="632.2" width="34" height="3.6" fill="#00e8f0" fill-opacity="0.55" stroke="#00e8f0" stroke-width="1.1"/><rect x="1541.3" y="648.0" width="34" height="3.6" fill="#00e8f0" fill-opacity="0.55" stroke="#00e8f0" stroke-width="1.1"/><text x="1573.0" y="563.0" font-size="10.5" fill="#f0f000" text-anchor="start" textLength="20.3" lengthAdjust="spacingAndGlyphs" >RF2</text><path d="M1688.6 630.7 L1688.6 475.3 L1705.3 457.2 L1708.8 460.3 L1692.8 478.0 L1692.8 630.7" stroke="#00e8f0" stroke-width="1.3" fill="none"/><rect x="1719.2" y="505.8" width="49.3" height="28.5" fill="#00e8f0" stroke="#00e8f0" stroke-width="1"/><rect x="1721" y="507.5" width="45.7" height="25" fill="none" stroke="#00a8b0" stroke-width="0.7"/><ellipse cx="1743.8" cy="514.7" rx="19" ry="2.8" fill="#001418"/><text x="1743.8" y="516.7" font-size="4.6" fill="#00b8c0" text-anchor="middle" textLength="26" lengthAdjust="spacingAndGlyphs" font-weight="bold" >PERIGO</text><rect x="1723" y="520" width="41.6" height="9.8" fill="#001418"/><path d="M1728.3 520H1743V524.5H1747V528.2H1725.7V524.5H1728.3Z" fill="#00e8f0"/><path d="M1755 520.5L1761 529H1749Z" fill="none" stroke="#00e8f0" stroke-width="1.1"/><path d="M1718.5 521.8 L1692.8 553.0" stroke="#00e8f0" stroke-width="1.2" fill="none"/><path d="M1693 553L1697 541L1701 545Z" fill="none" stroke="#00e8f0" stroke-width="1"/><text x="1718.5" y="497.2" font-size="5.2" fill="#f0f000" text-anchor="start" textLength="50.5" lengthAdjust="spacingAndGlyphs" font-weight="bold" >Placa advertência</text><text x="1718.5" y="502.4" font-size="5.2" fill="#f0f000" text-anchor="start" textLength="35" lengthAdjust="spacingAndGlyphs" font-weight="bold" >fixada na tela</text><text x="1555.6" y="433.4" font-size="9.2" fill="#f0f000" text-anchor="start" textLength="82.3" lengthAdjust="spacingAndGlyphs" >Tela&#160; de&#160; proteção</text><path d="M1646.2 430.1 L1658.0 430.1 L1702.5 461.4" stroke="#f00000" stroke-width="1.3" fill="none"/><text x="1458.8" y="543.3" font-size="9.2" fill="#f0f000" text-anchor="end" textLength="85.1" lengthAdjust="spacingAndGlyphs" >Leito&#160; aba&#160; externa</text><text x="1458.8" y="551.9" font-size="9.2" fill="#f0f000" text-anchor="end" textLength="115" lengthAdjust="spacingAndGlyphs" >500x100mm&#160; Galv.&#160; Fogo</text><path d="M1467.4 539.6 L1479.4 539.6 L1557.2 596.0" stroke="#f00000" stroke-width="1.3" fill="none"/><text x="1390.0" y="624.6" font-size="9.2" fill="#f0f000" text-anchor="end" textLength="134" lengthAdjust="spacingAndGlyphs" >Construir&#160; extensão&#160; da&#160; base</text><text x="1390.0" y="633.8" font-size="9.2" fill="#f0f000" text-anchor="end" textLength="113" lengthAdjust="spacingAndGlyphs" >na&#160; mesma&#160; altura&#160; da&#160; base</text><text x="1390.0" y="642.5" font-size="9.2" fill="#f0f000" text-anchor="end" textLength="22" lengthAdjust="spacingAndGlyphs" >atual</text><path d="M1398.3 621.3 L1410.0 621.3 L1424.2 640.8" stroke="#f00000" stroke-width="1.3" fill="none"/><text x="1328.0" y="662.5" font-size="9.2" fill="#f0f000" text-anchor="start" textLength="32" lengthAdjust="spacingAndGlyphs" >Escada</text><path d="M1368.3 659.2 L1380.0 659.2 L1392.5 678.3" stroke="#f00000" stroke-width="1.3" fill="none"/><text x="1652.0" y="744.5" font-size="9.2" fill="#f0f000" text-anchor="end" textLength="101" lengthAdjust="spacingAndGlyphs" >Duto&#160; para&#160; passagem</text><text x="1652.0" y="753.5" font-size="9.2" fill="#f0f000" text-anchor="end" textLength="118" lengthAdjust="spacingAndGlyphs" >de&#160; cabos&#160; dos&#160; geradores</text><text x="1652.0" y="761.7" font-size="9.2" fill="#f0f000" text-anchor="end" textLength="110" lengthAdjust="spacingAndGlyphs" >entre&#160; CP04&#160; e&#160; canaleta</text><path d="M1661.0 741.4 L1672.4 741.4 L1691.0 682.0" stroke="#f00000" stroke-width="1.3" fill="none"/><line x1="1672.4" y1="741.4" x2="1693.7" y2="696.3" stroke="#f00000" stroke-width="1.3" /><text x="1787.0" y="610.7" font-size="9.2" fill="#f0f000" text-anchor="start" textLength="95.3" lengthAdjust="spacingAndGlyphs" >Caixa&#160; de&#160; Passagem</text><path d="M1782.2 607.4 L1770.7 607.4 L1738.9 652.9" stroke="#f00000" stroke-width="1.3" fill="none"/><text x="1817.0" y="653.5" font-size="9.2" fill="#f0f000" text-anchor="start" textLength="47.2" lengthAdjust="spacingAndGlyphs" >Nível&#160; piso</text><path d="M1812.3 650.2 L1800.0 650.2 L1789.3 665.8" stroke="#f00000" stroke-width="1.3" fill="none"/><text x="1581.4" y="655.0" font-size="4.6" fill="#f0f000" text-anchor="start" textLength="43" lengthAdjust="spacingAndGlyphs" font-weight="bold" >Detalhe&#160; do&#160; nicho</text></svg>

<div class="a" style="left:0;top:0;width:1px;height:1080px;background:#2c3036"></div>
</body></html>
